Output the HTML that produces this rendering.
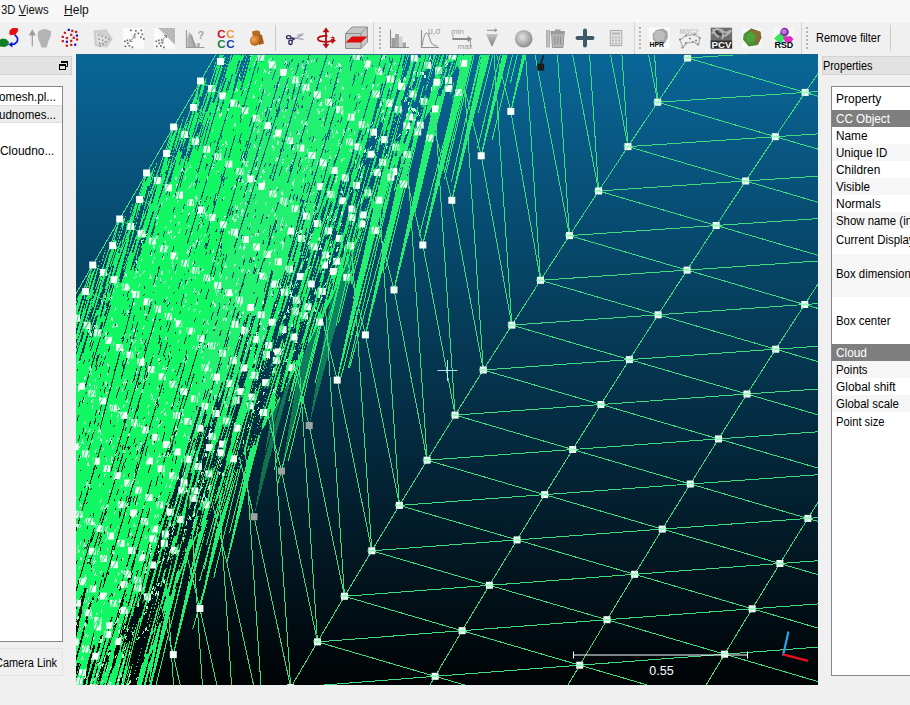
<!DOCTYPE html>
<html><head><meta charset="utf-8"><title>CloudCompare</title><style>
html,body{margin:0;padding:0;}
body{width:910px;height:705px;overflow:hidden;background:#f0f0f0;position:relative;font-family:"Liberation Sans",sans-serif;font-size:12px;color:#000;}
.abs{position:absolute;}
#menubar{left:0;top:0;width:910px;height:21px;background:#f7f7f7;border-bottom:1px solid #fbfbfb;}
#menubar span{position:absolute;top:3px;font-size:12.4px;white-space:nowrap;color:#111;}
#toolbar{left:0;top:22px;width:910px;height:32px;background:#f0f0f0;}
.sep{position:absolute;top:25px;width:1px;height:26px;background:#c9c9c9;}
.grip{position:absolute;top:27px;width:2px;height:22px;background-image:linear-gradient(#b4b4b4 50%,transparent 50%);background-size:2px 4px;}
#view{position:absolute;left:76px;top:54px;}
.dtitle{position:absolute;top:56px;height:18px;background:#e2e2e2;border:1px solid #d2d2d2;box-sizing:border-box;}
.box{position:absolute;background:#fff;border:1px solid #828790;box-sizing:border-box;}
.t{position:absolute;white-space:nowrap;line-height:14px;}
.row{position:absolute;left:1px;right:0;}
</style></head><body>
<div id="menubar" class="abs"></div><div class="t" id="t_m1" style="left:0.8px;top:2.7px;transform:scaleX(0.9426);transform-origin:0 0;color:#111;font-size:12px;">3D <u>V</u>iews</div><div class="t" id="t_m2" style="left:63.6px;top:2.7px;transform:scaleX(1.0048);transform-origin:0 0;color:#111;font-size:12px;"><u>H</u>elp</div>
<div id="toolbar" class="abs"></div>
<div class="sep" style="left:275px"></div>
<div class="sep" style="left:890px"></div>
<div class="sep" style="left:373px;top:22px;height:32px;background:#d4d4d4"></div>
<div class="sep" style="left:634px;top:22px;height:32px;background:#d4d4d4"></div>
<div class="sep" style="left:801px;top:22px;height:32px;background:#d4d4d4"></div>
<div class="grip" style="left:379px"></div>
<div class="grip" style="left:639px"></div>
<div class="grip" style="left:806px"></div>
<svg class="abs" style="left:0;top:22px" width="910" height="32" viewBox="0 22 910 32" font-family="Liberation Sans, sans-serif">
<defs><radialGradient id="sph" cx="0.42" cy="0.4" r="0.6"><stop offset="0" stop-color="#e6e6e6"/><stop offset="0.6" stop-color="#b0b0b0"/><stop offset="1" stop-color="#8e8e8e"/></radialGradient><radialGradient id="org" cx="0.4" cy="0.35" r="0.7"><stop offset="0" stop-color="#f0a860"/><stop offset="0.7" stop-color="#c8701c"/><stop offset="1" stop-color="#8a4a10"/></radialGradient><linearGradient id="fun" x1="0" y1="0" x2="0" y2="1"><stop offset="0" stop-color="#c4c4c4"/><stop offset="1" stop-color="#7c7c7c"/></linearGradient><linearGradient id="bin" x1="0" y1="0" x2="1" y2="0"><stop offset="0" stop-color="#8c8c8c"/><stop offset="0.5" stop-color="#d0d0d0"/><stop offset="1" stop-color="#9a9a9a"/></linearGradient></defs>
<path d="M9.5 30.5l3-2.6 5 .2 .8 2.4-2.6 4-5 .8-1.4-1.6z" fill="#e80c0c"/>
<path d="M-1 40.5l3-2 4 .4 3 3.2-.6 3-3.6 1.9-5-.6z" fill="#108020"/>
<path d="M14.5 35c3.5 1.6 4 5 2 7.4-1.4 1.7-3.8 2.4-6 2.3" fill="none" stroke="#1018e0" stroke-width="1.7"/>
<path d="M8.2 44.6l4.2-2.8v5.6z" fill="#1018e0"/>
<path d="M32.3 46.5V31.5M29.8 35l2.5-4.6 2.5 4.6z" stroke="#9c9c9c" stroke-width="1.2" fill="#9c9c9c"/>
<path d="M38 31.5c2-1 3.5-2.6 6-2.6 2.6 0 4.5 1.2 7 2.2 .6 4-1 7-2.6 10-.6 2.6-1.3 5-2 6.5h-5c-.8-2-1-4-2.2-6-1.4-3-2-6-1.2-10.1z" fill="#b4b4b4"/>
<rect x="67.7" y="28.8" width="2.2" height="2.2" fill="#1414c8"/>
<rect x="71.2" y="29.7" width="2.2" height="2.2" fill="#d01414"/>
<rect x="75" y="30.8" width="2.2" height="2.2" fill="#d01414"/>
<rect x="63.8" y="31.7" width="2.2" height="2.2" fill="#d01414"/>
<rect x="70.1" y="33.7" width="2.2" height="2.2" fill="#d01414"/>
<rect x="75.8" y="34.5" width="2.2" height="2.2" fill="#1414c8"/>
<rect x="61.7" y="35.8" width="2.2" height="2.2" fill="#d01414"/>
<rect x="65.8" y="36.9" width="2.2" height="2.2" fill="#d01414"/>
<rect x="72.7" y="36.7" width="2.2" height="2.2" fill="#d01414"/>
<rect x="76" y="38.4" width="2.2" height="2.2" fill="#d01414"/>
<rect x="61.7" y="40" width="2.2" height="2.2" fill="#d01414"/>
<rect x="65.8" y="40.7" width="2.2" height="2.2" fill="#1414c8"/>
<rect x="70.1" y="39.8" width="2.2" height="2.2" fill="#d01414"/>
<rect x="65.8" y="44.6" width="2.2" height="2.2" fill="#d01414"/>
<rect x="70.1" y="43.7" width="2.2" height="2.2" fill="#d01414"/>
<rect x="74.1" y="43.6" width="2.2" height="2.2" fill="#1414c8"/>
<path d="M93.5 30.5l13-1.2 6.3 9.5-5.5 8.7-12.5-1.2z" fill="#cfcfcf"/><path d="M95 31.5l16.5 7.5-15 7z" fill="#dedede" stroke="#bdbdbd" stroke-width=".6"/>
<rect x="98" y="34.5" width="1.3" height="1.3" fill="#7a7a7a"/>
<rect x="101.5" y="35.5" width="1.3" height="1.3" fill="#7a7a7a"/>
<rect x="105" y="37" width="1.3" height="1.3" fill="#7a7a7a"/>
<rect x="108" y="38.5" width="1.3" height="1.3" fill="#7a7a7a"/>
<rect x="98.5" y="38.5" width="1.3" height="1.3" fill="#7a7a7a"/>
<rect x="102" y="39.5" width="1.3" height="1.3" fill="#7a7a7a"/>
<rect x="105" y="41" width="1.3" height="1.3" fill="#7a7a7a"/>
<rect x="99" y="42.5" width="1.3" height="1.3" fill="#7a7a7a"/>
<rect x="102.5" y="43.5" width="1.3" height="1.3" fill="#7a7a7a"/>
<rect x="99.5" y="45.5" width="1.3" height="1.3" fill="#7a7a7a"/>
<rect x="123" y="28" width="21" height="20.5" fill="#fbfbfb"/>
<rect x="130" y="29.5" width="1.7" height="1.7" fill="#6e6e6e"/>
<rect x="135" y="30" width="1.7" height="1.7" fill="#6e6e6e"/>
<rect x="140.5" y="29.5" width="1.7" height="1.7" fill="#6e6e6e"/>
<rect x="137.5" y="32.5" width="1.7" height="1.7" fill="#6e6e6e"/>
<rect x="141.5" y="33.5" width="1.7" height="1.7" fill="#6e6e6e"/>
<rect x="134" y="33.5" width="1.7" height="1.7" fill="#6e6e6e"/>
<rect x="140" y="36.5" width="1.7" height="1.7" fill="#6e6e6e"/>
<rect x="143" y="38" width="1.7" height="1.7" fill="#6e6e6e"/>
<rect x="124" y="40.5" width="1.7" height="1.7" fill="#6e6e6e"/>
<rect x="127" y="42.5" width="1.7" height="1.7" fill="#6e6e6e"/>
<rect x="124.5" y="45.5" width="1.7" height="1.7" fill="#6e6e6e"/>
<rect x="128.5" y="45" width="1.7" height="1.7" fill="#6e6e6e"/>
<rect x="131.5" y="46.5" width="1.7" height="1.7" fill="#6e6e6e"/>
<rect x="126.5" y="39.5" width="1.7" height="1.7" fill="#6e6e6e"/>
<path d="M130 41.5l5-5.5M130 41.5v-2.5M130 41.5h2.5M135 36v2.5M135 36h-2.5" stroke="#8a8a8a" stroke-width="1" fill="none"/>
<rect x="154" y="28" width="21" height="20.5" fill="#fbfbfb"/><path d="M158 28h17v17z" fill="#bdbdbd"/><path d="M162 28l13 13M166 28l9 9M170 28l5 5" stroke="#a2a2a2" stroke-width=".7"/>
<rect x="155.5" y="40.5" width="1.7" height="1.7" fill="#6e6e6e"/>
<rect x="158.5" y="42.5" width="1.7" height="1.7" fill="#6e6e6e"/>
<rect x="156" y="45.5" width="1.7" height="1.7" fill="#6e6e6e"/>
<rect x="160" y="45" width="1.7" height="1.7" fill="#6e6e6e"/>
<rect x="163" y="46.5" width="1.7" height="1.7" fill="#6e6e6e"/>
<rect x="158" y="39.5" width="1.7" height="1.7" fill="#6e6e6e"/>
<rect x="161.5" y="42" width="1.7" height="1.7" fill="#6e6e6e"/>
<path d="M161.5 41l5-5.5M161.5 41v-2.5M161.5 41h2.5M166.5 35.5v2.5M166.5 35.5h-2.5" stroke="#8a8a8a" stroke-width="1" fill="none"/>
<path d="M186.5 30v17.5h18" stroke="#9a9a9a" stroke-width="1.2" fill="none"/><path d="M187.5 47v-9l2-6 2 3 2 5 2 3.5 1.5 3.5z" fill="#b0b0b0"/><path d="M194.5 47l-3-12" stroke="#8c8c8c" stroke-width="1"/><rect x="197" y="43" width="3" height="4" fill="#b4b4b4"/>
<text x="197.5" y="39" font-size="11" font-weight="bold" fill="#a4a4a4">?</text>
<text x="217.3" y="37.6" font-size="11.5" font-weight="bold" fill="#cc1030">C</text><text x="226.3" y="37.6" font-size="11.5" font-weight="bold" fill="#e8a040">C</text>
<text x="217.3" y="47.6" font-size="11.5" font-weight="bold" fill="#188048">C</text><text x="226.3" y="47.6" font-size="11.5" font-weight="bold" fill="#2040b0">C</text>
<path d="M252 31.5l5-1.3 3 1.2 .5 5-7.5 1z" fill="#b86820"/><path d="M258.5 34l3.5 1 2 8.5-5 1.5z" fill="#a85c18"/><circle cx="254.8" cy="40.8" r="5" fill="url(#org)"/>
<path d="M291.5 40.5l11.5-6M292 37.5l11.5 2" stroke="#8e8ea0" stroke-width="1.1"/><path d="M297 35.6l6.5-2.1M297.5 38.3l5.5 1" stroke="#b8b8c4" stroke-width="1.6"/>
<ellipse cx="288.7" cy="37.3" rx="2.2" ry="1.6" fill="none" stroke="#2c2860" stroke-width="1.3"/><ellipse cx="290.5" cy="42.3" rx="1.7" ry="2.2" fill="none" stroke="#2c2860" stroke-width="1.3"/><path d="M290.5 37.8l4 1.2M291.5 40.5l3-1.5" stroke="#2c2860" stroke-width="1.3"/>
<g stroke="#b40c10" fill="#b40c10"><path d="M326 30.5v15" stroke-width="1.8"/><path d="M323 32l3-4.2 3 4.2zM323 44l3 4.2 3-4.2z" stroke-width=".5"/><ellipse cx="325.8" cy="38.8" rx="8" ry="3" fill="none" stroke-width="1.7"/><path d="M331 39l4.5 1.5-3.5 3z" stroke-width=".5"/></g>
<rect x="327.5" y="34.6" width="5" height="2.5" fill="#f0f0f0"/>
<path d="M345.5 33.5l6.5-6.5h15.5v15l-6.5 6.5h-15.5z" fill="#c6c6c6" stroke="#8e8e8e" stroke-width="1"/><path d="M345.5 33.5h15.5v15M361 33.5l6.5-6.5" fill="none" stroke="#8e8e8e" stroke-width="1"/>
<path d="M345.5 42.5l6.5-6h15.5l-6.5 6z" fill="#dc0c10"/>
<path d="M390.5 29.5v18h18.5" stroke="#8a8a8a" stroke-width="1.1" fill="none"/><rect x="391.5" y="38" width="3.5" height="9" fill="#9c9c9c"/><rect x="395" y="34" width="4" height="13" fill="#a8a8a8"/><rect x="399" y="36.5" width="3.5" height="10.5" fill="#d2d2d2"/><rect x="402.5" y="42.5" width="3.5" height="4.5" fill="#a4a4a4"/>
<path d="M421.5 30v17.5h17.5" stroke="#909090" stroke-width="1.1" fill="none"/><path d="M422 46c1.5-6 2-13 4.5-13s3 7 5 10c1.5 2.3 4 3 6 3.3" stroke="#9a9a9a" stroke-width="1.1" fill="none"/>
<text x="428" y="34" font-size="8.5" fill="#9a9a9a">μ,σ</text>
<text x="451" y="34" font-size="8" fill="#9a9a9a">min</text><text x="457.5" y="48.5" font-size="8" fill="#9a9a9a">max</text>
<path d="M452.5 39h17" stroke="#8c8c8c" stroke-width="2"/><path d="M468 36.5l3.5 2.5-3.5 2.5zM453 33.5v6.5M470.5 38.5v8" stroke="#909090" stroke-width=".8" fill="#8c8c8c"/>
<path d="M487 30.3h9.5M494.5 28.8l2.5 1.5-2.5 1.5" stroke="#8c8c8c" stroke-width="1" fill="none"/><path d="M485.8 34h12.4l-6.2 12.8z" fill="url(#fun)"/>
<circle cx="523.7" cy="38.8" r="8.8" fill="url(#sph)"/>
<rect x="546.3" y="30" width="3.6" height="17.5" fill="url(#bin)"/><path d="M551.5 33.5h12.5l-1 14h-10.5z" fill="#b4b4b4" stroke="#8a8a8a" stroke-width=".8"/><rect x="550.5" y="31" width="14.5" height="2.5" fill="#9c9c9c"/><rect x="555" y="29.5" width="5.5" height="1.8" fill="#9c9c9c"/><path d="M555 36.5v8M557.8 36.5v8M560.6 36.5v8" stroke="#8c8c8c" stroke-width="1"/>
<path d="M585 30.5v15M577.5 38h15" stroke="#3e5968" stroke-width="4" stroke-linecap="round"/>
<rect x="610.3" y="30.5" width="11.5" height="15.2" fill="#e2e2e2" stroke="#a8a8a8" stroke-width="1"/><rect x="612" y="32.3" width="8" height="2.6" fill="#bcbcbc"/>
<rect x="612" y="36.6" width="1.8" height="1.8" fill="#b4b4b4"/>
<rect x="615.1" y="36.6" width="1.8" height="1.8" fill="#b4b4b4"/>
<rect x="618.2" y="36.6" width="1.8" height="1.8" fill="#b4b4b4"/>
<rect x="612" y="39.6" width="1.8" height="1.8" fill="#b4b4b4"/>
<rect x="615.1" y="39.6" width="1.8" height="1.8" fill="#b4b4b4"/>
<rect x="618.2" y="39.6" width="1.8" height="1.8" fill="#b4b4b4"/>
<rect x="612" y="42.6" width="1.8" height="1.8" fill="#b4b4b4"/>
<rect x="615.1" y="42.6" width="1.8" height="1.8" fill="#b4b4b4"/>
<rect x="618.2" y="42.6" width="1.8" height="1.8" fill="#b4b4b4"/>
<rect x="648.8" y="27.3" width="21" height="21.2" fill="#fafafa"/><path d="M652.5 34l3.5-4 7-1.5 4.5 3 .5 6-3 5.5-9 .5-3-4z" fill="#a6a6a6"/><path d="M655 31.5l6-1 4 3-1 6-7 2-3-4z" fill="#bebebe"/>
<text x="649.5" y="47.3" font-size="7.8" font-weight="bold" fill="#000" textLength="14.5" lengthAdjust="spacingAndGlyphs">HPR</text>
<text x="679.5" y="33.5" font-size="7.5" font-weight="bold" fill="#c2c2c2" textLength="19" lengthAdjust="spacingAndGlyphs">M3C2</text>
<path d="M680 40l6-4.5 9-1 5 3.5-1.5 6.5-5-2.5-7 1-3.5 4.5z" fill="none" stroke="#b8b8b8" stroke-width="1.4"/>
<circle cx="680" cy="39.5" r="1.1" fill="#8c8c8c"/>
<circle cx="686" cy="35.5" r="1.1" fill="#8c8c8c"/>
<circle cx="694.5" cy="34.5" r="1.1" fill="#8c8c8c"/>
<circle cx="699.5" cy="38" r="1.1" fill="#8c8c8c"/>
<circle cx="698" cy="44.5" r="1.1" fill="#8c8c8c"/>
<circle cx="693" cy="42" r="1.1" fill="#8c8c8c"/>
<circle cx="686" cy="43" r="1.1" fill="#8c8c8c"/>
<circle cx="682.5" cy="47.5" r="1.1" fill="#8c8c8c"/>
<circle cx="690" cy="38.5" r="1.1" fill="#8c8c8c"/>
<circle cx="696" cy="40.5" r="1.1" fill="#8c8c8c"/>
<rect x="710.7" y="27.7" width="21.4" height="20.8" fill="#6c6c6c"/><path d="M712 34c2-5 5-6 8-4s4 6 2 9M721 29c3 4 6 5 10 1M713 29c1 4 3 7 6 8M724 36c3-1 6-3 7-6" stroke="#b4b4b4" stroke-width="2" fill="none"/><path d="M716 31c2 3 4 4 6 3" stroke="#3c3c3c" stroke-width="1.5" fill="none"/><rect x="710.7" y="40.5" width="21.4" height="8" fill="#2e2e2e"/>
<text x="711.6" y="47.8" font-size="9" font-weight="bold" fill="#fff" textLength="20" lengthAdjust="spacingAndGlyphs">PCV</text>
<rect x="742" y="27.7" width="20.2" height="20.2" fill="#f6f6f6"/>
<path d="M751 28.4l9.4 3.4 1 5.8-3.6 7.3-8.9 1.6-5.8-6.8 .6-5.8z" fill="#4f8c34"/>
<path d="M751 28.4l9.4 3.4 1 5.8-3.6 7.3-3-3.4 1.2-6.6-5.6-3.5z" fill="#8a6c32"/>
<path d="M750.4 31.4l5.6 3.5-1.2 6.6-6.4 .8-3.2-5.6z" fill="#4aa43a"/>
<rect x="773.4" y="27.7" width="20" height="20.8" fill="#f8f8f8"/><path d="M774 38.5l7.5-7 6 5.5-8 6.5z" fill="#38e858"/><path d="M783 37l7.5-1 3 3-2.5 3.5-6-.5z" fill="#e428c8"/><circle cx="784.6" cy="32" r="4.3" fill="#8a2cb0"/><circle cx="784" cy="31.4" r="2.5" fill="#c078dc"/><path d="M779 41l5 .5-1 3h-4z" fill="#30c8d8"/>
<text x="774.5" y="47.6" font-size="9" font-weight="bold" fill="#000" textLength="18.8" lengthAdjust="spacingAndGlyphs">RSD</text>
</svg>
<div class="t" id="t_rf" style="left:815.8px;top:31.4px;transform:scaleX(0.9139);transform-origin:0 0;">Remove filter</div>
<div class="dtitle" style="left:-4px;width:76px;height:19px"></div>
<svg class="abs" style="left:58px;top:60px" width="11" height="11" viewBox="0 0 11 11"><path d="M3.5 1.5h6v5h-2" fill="none" stroke="#000" stroke-width="1"/><path d="M3 2h7" stroke="#000" stroke-width="2"/><rect x="1.5" y="4.5" width="6" height="5" fill="#e2e2e2" stroke="#000"/><path d="M1 5h7" stroke="#000" stroke-width="2"/></svg>
<div class="box" style="left:-2px;top:86px;width:65px;height:556px"></div>
<div class="abs" style="left:-1px;top:105px;width:63px;height:18px;background:#ececec;border-top:1px solid #dedede;border-bottom:1px solid #dedede;box-sizing:border-box"></div>
<div class="t" id="t_l1" style="left:-1px;top:90.1px;transform:scaleX(0.9710);transform-origin:0 0;">omesh.pl...</div>
<div class="t" id="t_l2" style="left:-1px;top:108px;transform:scaleX(0.9600);transform-origin:0 0;">udnomes...</div>
<div class="t" id="t_l3" style="left:-0.4px;top:144.3px;transform:scaleX(0.9943);transform-origin:0 0;">Cloudno...</div>
<div class="abs" style="left:-2px;top:648px;width:65px;height:28px;border:1px solid #e3e3e3;box-sizing:border-box;background:#f0f0f0"></div>
<div class="t" id="t_cam" style="left:-5.4px;top:655.6px;transform:scaleX(0.9127);transform-origin:0 0;">Camera Link</div>
<svg id="view" width="742" height="631" viewBox="76 54 742 631" shape-rendering="auto">
<defs><linearGradient id="bg" gradientUnits="userSpaceOnUse" x1="0" y1="55" x2="0" y2="685"><stop offset="0" stop-color="#0a6698"/><stop offset="1" stop-color="#000305"/></linearGradient></defs>
<rect x="76" y="54" width="742" height="631" fill="url(#bg)"/>
<g shape-rendering="crispEdges">
<polygon fill="#12f764" points="228.5,40 222.7,50 216.8,60 210.9,70 205.1,80 199.2,90 193.4,100 187.5,110 181.7,120 175.8,130 169.9,140 164.1,150 158.2,160 152.4,170 146.5,180 140.6,190 134.8,200 128.9,210 123.1,220 117.2,230 111.3,240 105.5,250 99.6,260 93.8,270 87.9,280 82.1,290 76.2,300 70.3,310 70,320 70,330 70,340 70,350 70,360 70,370 70,380 70,390 70,400 70,410 70,420 70,430 70,440 70,450 70,460 70,470 70,480 70,490 70,500 70,510 70,520 70,530 70,540 70,550 70,560 70,570 70,580 70,590 70,600 70,610 70,620 70,630 70,640 70,650 70,660 70,670 70,680 70,690 70,700 146.5,700 148,690 150,680 152,670 154,660 156,650 158,640 160,630 162,620 166,610 170,600 174,590 178,580 182,570 186,560 190,550 194.8,540 200.3,530 205.8,520 211.4,510 216.9,500 222.5,490 228,480 234.8,470 241.5,460 248.3,450 255.1,440 261.8,430 268.6,420 274.5,410 279.6,400 284.7,390 289.8,380 294.9,370 300,360 305.2,350 310.3,340 315.5,330 320.7,320 325.8,310 331,300 335.5,290 339.9,280 344.4,270 348.8,260 353.3,250 357.8,240 362.3,230 367,220 371.7,210 376.3,200 381,190 385.7,180 391.3,170 397.8,160 404.4,150 410.9,140 417.5,130 424,120 430.2,110 436.3,100 442.5,90 448.6,80 454.8,70 460.9,60 467.2,50 473.6,40"/>
<g stroke="#22f070" stroke-width="1" fill="none">
<line x1="165" y1="578" x2="137.7" y2="698"/>
<line x1="173.7" y1="557" x2="141.8" y2="698"/>
<line x1="149.6" y1="617" x2="145.1" y2="635"/>
<line x1="172.2" y1="560" x2="139.1" y2="698"/>
<line x1="181.6" y1="539" x2="142.4" y2="698"/>
<line x1="150.6" y1="614" x2="145.7" y2="632"/>
<line x1="198.3" y1="509" x2="174.8" y2="608"/>
<line x1="168.6" y1="569" x2="133.4" y2="698"/>
<line x1="200.1" y1="506" x2="152.8" y2="698"/>
<line x1="183.4" y1="536" x2="139.3" y2="698"/>
<line x1="194.9" y1="515" x2="146.3" y2="698"/>
<line x1="183.7" y1="536" x2="138.4" y2="698"/>
<line x1="213.6" y1="482" x2="200.9" y2="533"/>
<line x1="230.2" y1="458" x2="223.4" y2="488"/>
<line x1="230.2" y1="458" x2="204.3" y2="569"/>
<line x1="234.1" y1="452" x2="227.8" y2="479"/>
<line x1="207.9" y1="491" x2="194.8" y2="539"/>
<line x1="213.5" y1="482" x2="201.2" y2="527"/>
<line x1="234.1" y1="452" x2="226.7" y2="482"/>
<line x1="213.6" y1="482" x2="200" y2="530"/>
<line x1="243.2" y1="437" x2="224.3" y2="515"/>
<line x1="243.4" y1="437" x2="227" y2="503"/>
<line x1="249.9" y1="428" x2="213.7" y2="578"/>
<line x1="247.2" y1="431" x2="239.6" y2="461"/>
<line x1="240" y1="443" x2="231.9" y2="473"/>
<line x1="232" y1="455" x2="206.4" y2="545"/>
<line x1="237.6" y1="446" x2="199.6" y2="581"/>
<line x1="259.7" y1="413" x2="229.6" y2="533"/>
<line x1="276.1" y1="380" x2="266.3" y2="422"/>
<line x1="273.1" y1="386" x2="262.9" y2="428"/>
<line x1="249.6" y1="428" x2="192.8" y2="629"/>
<line x1="281.9" y1="368" x2="270.3" y2="416"/>
<line x1="282" y1="368" x2="270.1" y2="416"/>
<line x1="274.5" y1="383" x2="262.6" y2="428"/>
<line x1="285.6" y1="362" x2="272.8" y2="413"/>
<line x1="297.8" y1="338" x2="286.2" y2="386"/>
<line x1="308.2" y1="317" x2="288.9" y2="401"/>
<line x1="311.8" y1="311" x2="301.4" y2="356"/>
<line x1="312.1" y1="311" x2="301.4" y2="356"/>
<line x1="311.8" y1="311" x2="291.7" y2="392"/>
<line x1="316" y1="302" x2="274.3" y2="470"/>
<line x1="332.2" y1="266" x2="320" y2="320"/>
<line x1="319.2" y1="296" x2="305.1" y2="350"/>
<line x1="326.8" y1="278" x2="311.3" y2="338"/>
<line x1="338.1" y1="254" x2="288.4" y2="461"/>
<line x1="336.4" y1="257" x2="298" y2="407"/>
<line x1="342.1" y1="245" x2="325.3" y2="311"/>
<line x1="343" y1="242" x2="277.5" y2="485"/>
<line x1="356.8" y1="212" x2="315.1" y2="383"/>
<line x1="363.9" y1="197" x2="350.1" y2="257"/>
<line x1="367.2" y1="191" x2="336" y2="326"/>
<line x1="359.9" y1="206" x2="328.7" y2="320"/>
<line x1="376.6" y1="173" x2="364.8" y2="224"/>
<line x1="376.1" y1="173" x2="338.6" y2="323"/>
<line x1="377.7" y1="170" x2="363.2" y2="227"/>
<line x1="384.1" y1="161" x2="373.2" y2="206"/>
<line x1="381.5" y1="164" x2="350.2" y2="278"/>
<line x1="385.2" y1="158" x2="350.9" y2="284"/>
<line x1="391.5" y1="149" x2="353.2" y2="299"/>
<line x1="399.7" y1="137" x2="382.7" y2="212"/>
<line x1="393.8" y1="146" x2="381.9" y2="188"/>
<line x1="401.7" y1="134" x2="394.4" y2="164"/>
<line x1="405.3" y1="128" x2="348.3" y2="368"/>
<line x1="405.2" y1="128" x2="341.1" y2="377"/>
<line x1="407.8" y1="125" x2="350.9" y2="335"/>
<line x1="412.9" y1="116" x2="394.4" y2="191"/>
<line x1="416.8" y1="110" x2="408.7" y2="143"/>
<line x1="422.1" y1="101" x2="379.6" y2="275"/>
<line x1="423.5" y1="98" x2="349.5" y2="368"/>
<line x1="429.2" y1="89" x2="385.6" y2="269"/>
<line x1="430.1" y1="89" x2="420.6" y2="125"/>
<line x1="435" y1="80" x2="426.1" y2="116"/>
<line x1="438.6" y1="74" x2="430.1" y2="110"/>
<line x1="440.8" y1="71" x2="433.3" y2="104"/>
<line x1="442.6" y1="68" x2="433.3" y2="104"/>
<line x1="447.7" y1="59" x2="437.5" y2="98"/>
<line x1="452" y1="53" x2="444.2" y2="86"/>
<line x1="454.8" y1="50" x2="415" y2="212"/>
<line x1="457.2" y1="50" x2="451.6" y2="74"/>
<line x1="459.9" y1="50" x2="455" y2="68"/>
<line x1="462.7" y1="50" x2="458.6" y2="68"/>
<line x1="468.2" y1="50" x2="419.1" y2="236"/>
<line x1="473.5" y1="50" x2="445" y2="170"/>
<line x1="475.3" y1="50" x2="444.6" y2="179"/>
<line x1="481.5" y1="50" x2="451.4" y2="182"/>
<line x1="483.2" y1="50" x2="469.5" y2="104"/>
<line x1="488.4" y1="50" x2="480.1" y2="83"/>
<line x1="494" y1="50" x2="478.2" y2="113"/>
<line x1="501.4" y1="50" x2="477.3" y2="149"/>
<line x1="513.6" y1="50" x2="492.2" y2="140"/>
<line x1="518.4" y1="50" x2="510.4" y2="83"/>
</g>
<g stroke="#22f070" stroke-width="1" fill="#22f070">
<polygon points="510.8,111.4 525,45 527.9,45"/>
<polygon points="481.2,155.8 504.9,45 509.7,45"/>
<polygon points="451.8,200.3 485.1,45 491.9,45"/>
<polygon points="422.8,245 465.6,45 474.4,45"/>
<polygon points="394,289.9 446.4,45 457.2,45"/>
<polygon points="365.4,334.9 427.5,45 440.2,45"/>
<polygon points="337.2,380.1 408.9,45 423.7,45"/>
<polygon points="309.2,425.5 373.9,45 411.9,45" opacity="0.38" stroke="none"/>
<polygon points="281.5,471 353.9,45 396.5,45" opacity="0.38" stroke="none"/>
<polygon points="254,516.7 334.2,45 381.4,45" opacity="0.38" stroke="none"/>
<polygon points="226.9,562.5 337.6,45 360.4,45"/>
<polygon points="199.9,608.5 320.5,45 345.3,45"/>
<polygon points="173.3,654.6 303.8,45 330.6,45"/>
<polygon points="146.9,701 287.3,45 316.2,45"/>
<polygon points="120.8,747.4 271.1,45 302.1,45"/>
</g>
<path stroke="url(#bg)" stroke-width="1" fill="none" d="M302.9 106.4l-0.4 1.5M146.2 425.2l-1 4M165 355.1l-0.5 2M172.2 468.7l-1 4M98.8 476l-0.6 2M155.1 449.8l-0.6 2M213.4 312l-0.9 3M247.2 140.9l-1.8 6M209.6 234l-1 4M252.5 234.5l-0.4 1.5M163.5 464.6l-0.5 1.5M326 137.3l-0.9 3M263.2 371.1l-12 38.7M342 182.8l-6.4 21.7M173.1 474.2l-0.7 3M101.1 614.4l-3.3 12M134.4 674.9l-2.7 10M181.6 278.9l-0.5 1.5M241.9 52.2l-1.1 4.3M149.5 203.7l-4.3 15.2M159.2 266.4l-1.2 4M271.5 116.9l-0.7 3M248 200.6l-0.6 2M165.7 300.3l-1 3M209.4 101.3l-1.1 4.5M219.1 258.8l-0.6 2M152.8 617.6l-20.9 83.5M260.4 222.7l-0.5 1.5M222 290.8l-0.6 2M269.6 237.7l-0.5 1.5M210.8 197.3l-0.4 1.5M250.5 421.6l-1.5 4.7M87.8 561.5l-0.4 1.5M110.9 420.5l-0.8 3M153.7 589l-12.8 45.4M162.2 468.6l-0.9 3M94.6 531.7l-3.2 10M298.3 289.6l-1 4M273.9 291.2l-2 6M173.5 455.2l-1.5 6M224.5 292.7l-0.4 1.5M344.9 247.7l-2.9 9.5M215.9 267l-2.4 10M176.5 264.1l-1.6 6M320.2 98l-0.4 1.5M116.6 467.7l-0.4 1.5M158.1 172.9l-1.3 4.9M136.1 594.1l-10.2 33.1M118.7 222.1l-13.1 42.6M166.8 505.7l-3.6 12.3M113.8 284.7l-8.3 31.5M146.4 368.8l-2.4 10M117.2 599.5l-0.5 1.5M149.5 383l-0.6 2M156 274.8l-2.5 10M381.7 45.7l-0.5 1.5M119.1 204.9l-12.4 45.9M134.5 496l-1.6 6M168.9 450.5l-1.1 4M104 483.3l-0.4 1.5M242 440.9l-1.4 4.9M195.6 317.9l-1.1 4M451.9 37.3l-4.4 15.6M254.3 259l-0.8 3M86.9 382.4l-0.5 1.5M131.4 636.4l-1.1 4M217.3 445.1l-4.7 15.1M384.9 65.1l-1.9 6M118.5 457l-1.3 4M186.1 454.9l-16.8 52.3M292.9 228.3l-2.8 10M329.8 159.6l-0.5 1.5M164.1 251.8l-1.7 6M232.5 206.4l-3.1 10M96.8 409.9l-1.5 6M210.8 249.6l-1 4M139.2 592.1l-23.9 93.1M219.1 146.4l-2 6M79.9 455.4l-1.5 6M298.9 314.1l-18.6 65.2M257.2 126l-0.6 2M189.9 212.7l-3.1 10M257.7 112.3l-0.5 2M331 189.8l-2.2 7.3M170.3 344.6l-0.6 2M327.1 234.8l-6.6 23.1M126.5 630.3l-1 3.6M210.5 401.4l-0.8 3M357.5 55.1l-0.9 3M117 678.9l-1.9 7.4M208.6 388.8l-3.2 10M221.4 174.3l-0.8 3M303.1 96.2l-1 4M151.7 249.7l-1.7 6M331.5 200.8l-27.5 85.9M314.2 157.3l-2.5 10M128.6 298.5l-1 3M222.1 135.1l-1.2 4M71.3 414.7l-1 4M285.9 235.1l-2 6M132.6 458.9l-0.4 1.5M306.4 154.7l-1.1 4M135.2 374.7l-1.5 6M190.7 449.8l-0.5 2M354.1 60l-0.5 1.5M234 32.4l-19 61M342 117.1l-1.5 6M87.2 502.3l-0.5 1.5M445.8 66l-12 43.4M254.3 292.3l-0.5 1.5M136.3 444.1l-0.9 3M146.1 612.7l-1.5 4.7M163.5 391.6l-0.5 1.5M185 167.6l-5.2 20M241.4 133.4l-2.8 10M257.5 160.9l-1.9 6M94.4 429.6l-2.9 10M252 171.9l-0.6 2M138 364.5l-2.7 10M205.7 243.4l-1.2 4M274.8 242.3l-0.4 1.5M114.3 425.2l-0.5 2M223.5 441.9l-2.9 8.8M338.6 102.9l-0.5 1.5M224 61.9l-1.4 4.8M163.6 586.1l-4.9 19M302 140.9l-0.5 2M239.6 26l-9.8 40.4M182.5 117.4l-3 10.3M326.3 192.8l-0.9 3.5M189.1 419.8l-0.5 2M144.6 622.6l-4.3 17.3M77.1 511.3l-0.4 1.5M401.3 134.9l-5 16.7M219.4 447.6l-4.6 15.7M196.6 266.4l-0.9 3M215.2 139.9l-0.7 3M131.4 594.6l-2.8 10M211.2 113.3l-8.4 32.5M202.9 331.3l-1.2 4M292.4 160.9l-2.5 10M71.9 268.1l-32.8 100M187.4 129.7l-2.4 9.3M263.4 119.6l-0.6 2M292.9 59.2l-0.5 1.5M234.9 467.1l-1.6 5.5M280.1 106.8l-2.9 10M154.4 563.5l-35.8 109M237.1 210.2l-1 3M130.5 452.5l-0.8 3M301.8 253.1l-10.9 33.3M184.6 479.2l-28.1 99.5M174.7 206.7l-1.5 6M413.8 67.5l-25.3 91.4M314.9 77.5l-0.5 2M263.9 240l-1.2 4M377.2 151.9l-1.3 4.3M82.4 383.5l-0.4 1.5M283.5 149.5l-0.4 1.5M224.2 183.6l-0.6 2M170 108.8l-18.6 71M144.3 417.1l-0.5 2M323.3 258.7l-29.5 97.1M205.9 390.4l-3 10M383 110l-24 89.2M390.9 41.8l-1.1 4M341.5 67.9l-1 4M177.2 455.5l-1.1 4M180 349.3l-0.6 2M222.9 266.7l-1.6 6M151.1 194.1l-4.3 15.8M132.2 339.1l-1.5 6M434.3 25.3l-24.5 87.9M164.3 242.5l-1.8 6M166.3 345.9l-3.3 10M152.8 617.9l-1.6 5.4M160.2 318.8l-0.6 2M124.1 598.9l-14.9 47.1M124.5 461.6l-3.1 10M439.6 26.1l-15.8 59.3M316.5 292.8l-21.4 68M83.4 399.7l-0.8 3M296.3 205.4l-0.6 2M73.6 447.2l-1 3M207 163.5l-1.6 6M287.5 205.2l-0.6 2M158.9 403.8l-1.2 4M128.8 581.9l-0.5 2M156.1 301.1l-0.9 3M203 125.2l-5.3 21.5M94 513l-2.5 10M241.7 176.5l-2 6M309.8 183.3l-3.3 10M103.7 382.5l-1.2 4M243.4 150.7l-3 10M290.4 141.6l-0.5 2M113.4 545.1l-2.7 10M143.9 551.1l-2.7 10M84.1 428l-1.5 6M220.6 106.6l-1.1 3.8M270.3 163.4l-0.8 3M189.2 532.4l-6.5 19.9M90.5 563.4l-0.5 2M278.1 189.3l-0.6 2M118.7 470.4l-2.5 10M74.9 501.9l-2.8 10M335.5 217l-2.7 8.2M131.4 514.1l-2.9 10M318.1 100.1l-0.5 2M308.4 181.8l-0.7 2M121.9 227.5l-19.5 59.9M205.8 455.3l-11.4 39.2M159 568l-4.3 15.6M233.6 129.3l-0.5 1.5M138.5 511.2l-1.3 4M216.5 55.7l-22 85.8M132.5 573.5l-3 10M131.8 582l-0.5 2M76.3 640.6l-14.1 48.2M350 221.6l-16.8 67.9M126.2 594.3l-0.8 3M270.9 225.3l-1.6 6M293.8 180.8l-1 4M348.1 205.6l-24.7 97.4M338.3 120.3l-0.5 2M181.5 304.4l-0.4 1.5M169.9 560.5l-3.2 10M327.7 72.5l-0.4 1.5M337.2 81.7l-0.5 2M101.5 536l-3 10M330.4 96.7l-2.8 10M350.9 178.8l-27.9 91.7M109.4 595.7l-0.5 1.5M123.6 360l-1.7 6M133.2 380.8l-0.7 2M145.8 560l-0.9 3M194.1 493.9l-12.9 44.6M191.3 514.3l-12.9 50M153.9 145l-24.6 93.1M229 81.2l-9.1 32.9M108.3 332.2l-0.9 3M214 396.1l-1.1 4M211.2 142.2l-1.6 6M207 242.9l-1.5 6M133.5 561.5l-3.2 10M277.5 252.6l-0.5 1.5M350.3 93.8l-1.1 4M165.8 574.1l-14.2 49.9M440.3 18.2l-26 88.9M75.1 598.9l-0.4 1.5M91.7 340l-2 6.9M145 306.3l-1.2 4M85 539.6l-0.7 3M151.3 181.6l-2.5 9.8M110.8 295.8l-6.4 19.8M202.4 195.1l-1 4M255.5 194.1l-0.5 1.5M216 283l-1.5 6M232.4 115l-0.7 3M383.5 66.8l-1.3 4M322.6 181.4l-19.8 74.9M251 334.3l-0.6 2M160.8 420.3l-1.3 4M240.7 424.3l-13.3 43.6M138.3 570.1l-1.8 6M94.4 467.1l-1.2 4M78.3 382.8l-0.6 2M336 124.8l-0.4 1.5M301.4 186.4l-0.6 2M161.5 344.8l-3 10M150.1 670.7l-1.9 6.1M177.1 301.8l-0.6 2M276.8 100.7l-1.5 6M317.2 88.1l-0.6 2M83.7 397.2l-1.7 6M190.8 525.9l-10.2 31.7M186.9 516.6l-8.3 28.4M202.9 205l-0.5 2M178.2 517l-1.2 4.3M138.4 448.9l-1.7 6M304.6 46.4l-1.2 4M270.5 175.1l-0.9 3M218 255.9l-0.4 1.5M259.1 66.4l-2 6M334.2 239l-2.1 8.7M256.1 383.8l-32.7 104.2M160.7 280.1l-0.8 3M202.1 433.3l-1 3.4M77.7 369l-0.4 1.5M168.7 355.5l-0.6 2M144.8 286.5l-0.9 3M212.6 314.3l-1.7 6M160.5 587l-1.5 5M267.1 217.2l-0.4 1.5M186 380.8l-1 4M257.8 184.4l-0.4 1.5M93.9 351.9l-1.6 6M336.3 100l-1.5 6M371.9 140.9l-6.5 22.7M131.3 496.3l-2.5 10M173.8 125.6l-8.8 28.1M305.4 183.2l-2.5 10M243.6 283.2l-1.2 4M228.4 372.7l-20.8 75.4M332.7 258.4l-21.9 67.5M87.8 479.8l-0.4 1.5M93.4 598.4l-0.6 2M122.2 558.2l-0.8 3M99.6 449.4l-0.5 1.5M165.7 358.5l-0.4 1.5M71.9 439l-0.7 2M192.6 101.8l-2.8 10.3M223.9 55.8l-26.3 80.5M152 546l-13 53.1M265.7 111.9l-0.4 1.5M130.3 446.2l-0.9 3M178.4 141.4l-1.3 4.8M137.2 570.6l-0.4 1.5M131.3 174.3l-31.7 96.8M221.9 228.3l-1.5 6M249.9 228l-0.5 1.5M95.6 582.1l-2.7 10M196.4 416.8l-0.4 1.5M118.8 583.8l-1.3 4M82.2 609.6l-8.3 30M244.7 258.7l-1.5 6M260.4 351.3l-14.3 57.3M288.9 272.9l-5.3 19.9M201.7 433.7l-0.5 2M353.4 57.5l-2.7 10M78.4 415.4l-1.5 6M159.4 577l-7.5 27.1M270.2 231.4l-1.6 6M226.1 382.8l-0.6 2M156.6 593.8l-35.6 123.3M255.7 209.3l-0.9 3M291.9 225.6l-2.5 10M151.2 304.4l-2.8 10M203.9 107.3l-11.3 36.3M383.3 129.7l-2.5 8.2M169.6 301.8l-1 3M270.2 411.8l-3.2 10.3M263.3 400.5l-12.3 44.5M187.1 350l-1 4M298 195l-1.7 6M355.3 76.3l-3 10M306.5 278.4l-27.6 92.9M145.9 620.8l-5.7 17.6M184.2 293.7l-3 10M354.4 224.8l-11.2 43.3M170.5 351.1l-1.8 6M243.3 89.8l-1.7 6M258.5 276.7l-1.7 6M262.1 125.8l-0.5 1.5M178.5 370l-1.7 6M290.6 120.3l-0.4 1.5M218.2 42l-13.3 44.7M132.6 548.1l-2.9 10M109.5 388.1l-0.5 1.5M81.2 469.6l-0.4 1.5M345.8 181.7l-14.1 58.8M298.8 105.5l-0.8 3M366.2 152.8l-10.9 37.7M140.4 382l-0.8 3M91.1 539.8l-0.9 3M289.9 61.8l-1.7 6M360.4 100.6l-0.8 3M206.5 252.2l-0.9 3M277.2 108.6l-0.9 3M277 220.3l-2.7 10M377.5 41.9l-1 4M147.6 446.1l-2.6 10M302.9 200.5l-2.7 10M160.2 360.4l-0.6 2M257.6 345.4l-3.4 12.9M283.4 92.4l-0.6 2M197.7 299.3l-0.5 2M248.2 213.4l-1 4M74.8 537l-0.4 1.5M187.2 479.4l-3.9 13.9M387.9 150.6l-11.7 42.9M426.1 89.7l-8.1 26M224.7 177.1l-1.7 6M122.3 337.4l-0.4 1.5M229.2 208.7l-1.9 6M91.3 488.3l-0.6 2M301.3 332.5l-7.9 26.4M161.8 151.6l-3.2 10.4M109.7 367l-1.5 6M202.4 406.3l-0.5 1.5M113.5 435.5l-0.5 1.5M105.6 263.8l-1.6 4.9M184.8 273.7l-0.5 1.5M162.2 611.5l-9.7 33.6M102.3 542.3l-0.6 2M125.3 313.2l-0.9 3M107.4 248.1l-6.5 26.9M87.9 402.7l-0.5 1.5M159.6 385.5l-0.6 2M143.1 333.8l-0.5 1.5M128.1 339.1l-1.3 4M117.7 555.1l-2.4 10M216.5 321.2l-2.7 10M125.7 415.9l-1.8 6M153.9 632l-5.9 20.5M178.4 198.4l-0.4 1.5M307 48.1l-0.6 2M374.2 151l-17.9 64.5M150.2 144.3l-22 70.5M141.3 173l-22.7 90.3M161.8 513.9l-0.5 1.5M180.9 491.9l-19.9 63.1M85.9 545l-1.3 4M219.5 457.7l-8.8 27.1M147.2 511.7l-0.5 1.5M70.2 567.8l-0.9 3M333.3 103l-1 4M242.3 234.6l-1.2 4M221.7 253.1l-1.3 4M298.4 343.6l-4.8 16.8M342.5 230.9l-8.2 25.3M221.6 362.6l-0.9 3M197.4 464.4l-2.2 7.9M297.3 102.7l-0.9 3M310.5 201.5l-0.4 1.5M126.9 424.5l-1.5 6M144.3 294.1l-0.6 2M204.9 414.7l-0.7 2M82 491.3l-2.8 10M195.4 438.7l-0.8 3M202.1 288.7l-1.2 4M330.7 82.3l-0.6 2M214.6 162.8l-1.2 4M280 388.3l-4.5 17.6M252.2 117.4l-2.9 10M267.3 295.7l-2.9 10M232.4 187l-0.9 3M146.6 641.2l-14.1 49.9M259 229.8l-1.9 6M282.8 139.5l-0.6 2M194.7 437.9l-16.3 51.4M191.6 247.3l-2.9 10M278.7 347.8l-27.2 99.9M221.8 245.9l-1.6 6M304.1 297.1l-4.2 15M379.6 183.4l-5.6 17.3M73.4 419.4l-1.6 6M151.5 301.7l-2.8 10M192.5 106.4l-5.6 17.3M167.3 537.6l-11.9 40.7M78.1 299.8l-1.6 5.1M314.4 312.7l-11 43.4M292.1 60l-0.5 2M208 164.3l-0.5 2M96 418.2l-1.8 6M279.5 313.2l-16.1 57.1M232.5 73.8l-6.2 21.7M231 298l-1.5 6M87.7 526.1l-0.8 3M157.4 500.2l-0.6 2M158.2 475.8l-2.4 10M101.5 405.5l-2.7 10M98 354.9l-1.9 6M187 334.5l-3.1 10M205.3 200.5l-0.6 2M303.4 60.1l-0.8 3M367.7 64.2l-2.6 10M196.4 442.5l-1 4M280.1 316.2l-4.2 13.7M170 192.6l-1.2 3.9M250.1 124l-0.8 3M94.8 521.7l-0.6 2M86.2 432.9l-1 3M81.5 595.5l-0.8 3M385.4 141.8l-18.9 67.3M170.9 322.2l-3.3 10M111.1 476.2l-0.6 2M133 324.3l-1.8 6M325.5 133.8l-0.8 3M217 441.7l-3.8 14.8M306.9 227.7l-3.6 12.3M270.5 354.3l-15.8 62.3M134.7 295.7l-2.6 10M199.4 181.2l-0.4 1.5M227.3 176.6l-0.5 2M127.5 380.5l-2.9 10M151.4 434.7l-1.1 4M358.1 222l-1.3 4.8M98.6 423.2l-0.9 3M325.7 149.6l-0.7 3M163.3 547.8l-29.3 114.2M287.5 326.5l-2.1 8.4M73 412.2l-0.6 2M300.4 211.6l-2.7 10M419 99.5l-1.3 4.5M198.5 424.4l-0.4 1.5M270 38.5l-2.5 10M211.8 302.8l-1.3 4M355.7 95.6l-1.1 4M261.2 386.1l-4.5 15.5M98.5 543.6l-0.5 2M75.6 370.9l-2.9 10M135.4 438.1l-1.8 6M307.9 77.1l-3.1 10M246.8 105.2l-0.5 1.5M103.1 662.2l-15.8 48.7M184.7 143l-2.3 8.9M101.6 580.3l-2.4 10M299 286l-1.3 4M119.6 451.6l-1 4M71.4 580.9l-1 4M228.5 417.2l-31.1 105M283.2 224.6l-1.3 4M181.7 474.4l-9.4 33.4M171 498.8l-3.9 12.6M196.1 293l-0.4 1.5M385.8 62.8l-3 10M306.3 109.5l-0.5 2M106.6 511.3l-1.3 4M84.8 328.4l-3.7 13.9M196.2 476.5l-11.2 40.5M288.3 331l-12.1 39.5M93.8 340.7l-3.3 10M263.1 77.6l-0.9 3M241.4 314.7l-3 10M123.8 310.3l-1.2 4M230.5 383.6l-10.3 32M264.9 70.4l-0.5 1.5M377.1 107.9l-21.2 84.5M146.6 316.2l-1 4M298.1 170.9l-0.8 3M151.3 462.5l-3 10M128.4 389.9l-2.6 10M249 45.6l-9.8 33.2M275.1 373.1l-21.7 70.1M221.4 229.5l-0.7 3M351.9 128.7l-0.9 3M226.7 148.2l-2.6 10M169.5 494.5l-10 31.8M114.8 499.3l-0.4 1.5M257.3 173.9l-1.8 6M200.8 207.2l-0.9 3M173 450.7l-1.1 4M265.5 162.8l-1 4M150.5 654.2l-5.5 20.9M162.6 575.2l-4.5 17.4M209.8 347.5l-0.4 1.5M295.2 84.3l-2.6 10M286.8 358.6l-11.4 42.7M192.6 377.6l-0.6 2M155.3 249.8l-0.8 3M101.1 533.1l-1.6 6M185.8 358.6l-0.4 1.5M238 439.2l-1.2 4.8M396.5 94.2l-26.2 91.3M196.5 180l-1 3M90 314l-2.1 8.4M198.5 239.5l-2.8 10M129.3 472.9l-1 4M117.9 214.4l-11.2 44.4M207.1 196.3l-1.1 4M265.6 256.7l-1.2 4M359.2 185.9l-7.4 24.6M174.2 245.6l-1.5 6M332.1 279.2l-1.6 4.8M315.6 307.1l-12.8 43.3M85.4 485.9l-0.6 2M100.7 374.5l-1.3 4M231.6 163.8l-1.2 4M241.5 186.4l-1.2 4M124.3 364.3l-1 4M254.9 267.6l-1.7 6M285.2 39.9l-1 4M318.8 309.4l-7.9 27.2M201.9 426.4l-0.8 3M234.7 310.5l-1.9 6M117.8 361.1l-3.3 10M292.3 144l-1.1 4M170.2 491.8l-0.4 1.5M119.5 530.7l-0.4 1.5M241.2 139.7l-1.1 4M372.9 65.6l-0.5 1.5M250.5 312.8l-0.5 2M87.1 300.1l-2.4 9.3M272.1 64.4l-2.5 10M256.4 381l-3.9 14.7M155.7 364.6l-0.4 1.5M256.2 268.3l-1.9 6M208.7 289.5l-3 10M214.2 429.9l-29.3 99.7M192 111.4l-3.2 9.8M247.6 227.4l-0.4 1.5M76.4 618.7l-5.4 18.9M174.3 291.6l-0.5 2M263.8 349.6l-16.4 58.3M91.1 519.6l-1.7 6M161.9 481.8l-0.6 2M131.4 408.4l-0.4 1.5M321.7 175.2l-0.7 3M137.8 330.1l-0.5 1.5M195.7 210l-0.4 1.5M140 622.2l-17.4 69.2M232.3 376.3l-0.9 3M234.5 302.6l-0.9 3M140.9 441l-0.5 1.5M335.3 86.6l-0.9 3M146.3 339.3l-1.9 6M92 564.6l-0.8 3M239.5 310.8l-3 10M287.7 98.6l-0.8 3M296.4 143.1l-0.5 1.5M93.2 596.4l-12.8 47.1M321.2 264.7l-25.7 97.6M140.6 492.1l-0.6 2M193.7 410.8l-0.4 1.5M138.9 382.4l-1.9 6M119.5 387.5l-3.2 10M316.7 148.8l-0.7 2M81.7 581.9l-0.9 3M168.1 321.2l-1.8 6M220.8 444.1l-4.5 15.5M190.4 473l-6.4 22.3M176 159.2l-9.5 35.4M333.3 97.1l-0.4 1.5M321.6 255.3l-28.6 94.9M286 59.4l-1.4 6M101.7 525.3l-2 6M288 106.2l-0.8 3M176.2 440.5l-0.8 3M167.2 337.8l-0.4 1.5M163.4 473.8l-1 4M111.6 275.1l-3.7 14.6M319 188l-1 4M117.5 470.7l-1.6 6M128.8 447.5l-0.6 2M173.1 442.8l-3 10M167.4 254.1l-0.5 1.5M142.7 332.7l-0.4 1.5M134.4 315.4l-1.4 6M367.8 57.6l-0.5 1.5M338.2 214.5l-12 38.1M168.2 304.2l-0.8 3M295.7 107.8l-1 4M278 203.5l-0.9 3M135.8 603.2l-1.1 3.6M186.1 280.1l-1.1 4M116.1 508.1l-0.6 2M228.6 220.7l-0.6 2M213.1 155.1l-0.5 1.5M310.1 137.2l-0.7 3M321 118.2l-0.5 1.5M74.4 255.8l-27.1 103.3M323.6 206.2l-3.1 12.9M189.7 101.8l-12.4 42.4M230.3 356.2l-2.4 10M305.7 182.9l-0.8 3M227 254.5l-1.8 6M254.4 197l-0.6 2M172.3 378.7l-0.5 2M300.7 157.3l-2.8 10M149 659.5l-5 20.8M262.3 59.8l-0.5 2M272.9 57.7l-0.4 1.5M159.6 617.9l-5.7 21.2M439.2 45.1l-11.7 38.9M262.5 364.7l-9.8 37.4M257 105.9l-1.2 4M240.3 290.3l-0.8 3M195 260.6l-1.2 4M276.4 230.4l-1 3M226 143l-0.5 1.5M208.6 205l-1.9 6M265.7 369.5l-29.3 101.9M206.7 425.2l-3.7 12.2M314.8 249.3l-6 22.2M298.7 64.8l-3.3 10M243.1 105.1l-1.5 6M351.4 167.6l-5.3 22.1M312.1 76.2l-0.9 3M412.9 35.7l-21.6 78.1M351.5 55.7l-1.6 6M220 306.3l-3.2 10M124.5 381.5l-0.6 2M367.2 84.9l-0.7 3M313.7 159.4l-0.5 2M294.6 194.2l-1.6 6M230.1 303.7l-0.5 1.5M224.8 303.8l-0.5 2M268.1 107l-2.7 10M97.5 364.6l-1.7 6M294.2 41.2l-0.8 3M101 547.3l-1.1 4M249.7 269.9l-1 3M105.4 529.8l-1.1 4M383.2 133.6l-4.2 14.8M164.8 432.2l-2.6 10M202.9 379.8l-0.6 2M223.6 257.9l-2.5 10M359.7 155.4l-4.2 13.9M158.3 533.7l-1 3.6M159.4 267.4l-2.5 10M235.3 169.3l-0.5 1.5M176 459.7l-1 4M292.7 359.4l-2.7 9.6M298.6 62.7l-1.1 4M191.5 279.4l-0.4 1.5M172.6 458l-0.6 2M357.3 102.3l-2.8 10M426.3 89.3l-2.5 9.2M72.4 509.1l-0.4 1.5M98.7 657.2l-2 7M240 267.1l-0.5 2M402.5 98.6l-17.4 62.6M146.5 493.8l-0.5 1.5M94.5 532.2l-2 6M297.7 130.9l-0.8 3M167.5 341.9l-1.5 6M147.9 603.9l-2.7 9.3M328.3 150l-0.6 2M275.6 70l-3.3 10M239 402.5l-1 4M71.3 431.4l-0.6 2M233.8 272.1l-1.7 6M105 578.4l-0.8 3M237.4 378.3l-15.6 54.3M71.4 447.6l-2.6 10M143.2 444.1l-2.7 10M216.8 239.4l-0.6 2M84.7 359.6l-1.1 4M184.5 458.2l-0.8 3M177.7 405.8l-0.4 1.5M136.6 472.3l-1.8 6M222.5 287.8l-0.6 2M403.9 45.7l-0.4 1.5M377.5 168.7l-4 16.4M258.8 258.9l-0.5 2M288.2 78.4l-2.9 10M228.9 58.7l-14.3 55.7M323.9 41.2l-1 4M96.9 621.4l-7.4 30.2M286.4 134.1l-0.7 3M105.5 288.6l-1.2 4.2M89.4 558.1l-1.7 6M74.3 532.9l-0.4 1.5M76.8 294.8l-26.5 85.5M277.6 345.6l-7.8 23.8M281.1 148.8l-0.9 3M136.3 468.3l-0.6 2M150.1 539.7l-12.6 49.3M117 650.4l-14.8 48.4M189.3 447.2l-0.5 1.5M137.4 352.2l-1.5 6M300.7 45.2l-1 3M415.2 79.8l-18.7 62.9M92.9 356.8l-0.4 1.5M77.4 559.6l-1.3 4M238.2 312.1l-2.9 10M138 416.6l-3.1 10M219.2 350.2l-0.8 3M129.6 305l-0.6 2M288.1 262.9l-6.2 19.1M124.6 623.2l-13.8 50.8M99.3 353.7l-3 10M95.9 580.9l-1.3 4M310.1 314l-1.5 4.6M109.8 650.3l-2.2 7M271.3 174.5l-1 4M330.8 122.4l-0.6 2M109.9 346.2l-1.6 6M203.7 375.7l-0.6 2M315.8 267.7l-2.5 8.4M149.8 509.3l-0.4 1.5M359 72.7l-0.9 3M177.1 583.2l-1.7 6M235.7 250.2l-1.1 4M293.4 143.6l-1.8 6M257.6 252.3l-1.3 4M192.9 227.1l-0.4 1.5M390 57.5l-1.2 4M228.2 311.3l-1.8 6M120 511.6l-1 4M218.8 286.7l-1.3 4M176.8 567.5l-5.4 20.5M164.1 387.9l-0.6 2M249.3 202.9l-0.5 2M287.7 63.7l-1.2 4M305.6 86.8l-0.5 1.5M285.5 350.4l-4 15.9M218.8 56.1l-1.3 5.2M159.8 338.4l-1.5 6M307.7 286.1l-2.1 8.4M174.4 547.4l-21.1 83.1M165.1 426.8l-0.4 1.5M256.9 135.4l-1.6 6M195 251.8l-0.4 1.5M123.3 444.8l-1.1 4M327 101.5l-0.4 1.5M232.2 321.2l-0.4 1.5M138.7 209.9l-3.9 16.2M258.8 97.5l-0.4 1.5M363.3 50.1l-3.1 10M109.9 267.5l-4.3 15.5M288.6 377.6l-1.5 4.9M279.5 261.5l-0.4 1.5M196.6 381.6l-0.6 2M151.9 563.3l-24.9 102.9M79.6 598.7l-3.3 10M89.1 434.6l-1.8 6M320 74.6l-0.4 1.5M302.5 195.5l-1.6 6M140.9 347.9l-0.4 1.5M153.5 354l-0.5 2M227.6 426.7l-1.2 4.1M73.3 550.1l-0.5 2M187.2 229.3l-1.9 6M161.4 491.8l-0.8 3M256 315.8l-0.4 1.5M80.3 400.8l-1.6 6M385.8 55.7l-0.6 2M348.7 140.3l-0.5 2M183.8 543.7l-5.9 19.8M142.1 339.4l-0.4 1.5M301.4 292.4l-6.6 23.2M91.4 569.8l-0.4 1.5M75.2 515.6l-0.6 2M228.6 25.7l-21.7 65.9M323.2 137.9l-0.8 3M73.3 494.9l-0.8 3M207 278.2l-1.6 6M285.3 107.5l-0.8 3M109 600.1l-0.5 1.5M397.5 89.9l-8.7 35.3M219.9 400.4l-0.6 2M223.6 422.4l-25.5 104.2M183.6 500.8l-2.2 8.5M255.4 314.9l-21.3 72.6M305.8 210.9l-0.9 3M237.3 177.7l-0.9 3M245 153l-0.5 1.5M123.3 383.4l-0.5 1.5M257.5 296.9l-2.6 10M235 27.1l-8.2 27.3M286.4 71.4l-0.6 2M193.7 240.9l-0.6 2M149.2 596.7l-1.3 4.4M158.4 233l-0.8 3M219.8 303.1l-0.5 2M123.1 445.6l-1 4M250.9 256.8l-1.5 6M240.6 148.9l-0.5 1.5M270.1 241.2l-1.1 4M105.5 355.9l-1 4M153 649.8l-3.4 12M146.7 362l-1.5 6M271.5 123.1l-2.8 10M308.8 312l-4.1 16.2M236.6 229.7l-0.9 3M103.3 362.4l-1 4M415.3 46.7l-2.2 7.1M340.4 66l-1.2 4M123.7 208.1l-7.6 28.5M208.9 490.5l-2.7 10.4M242.2 334.1l-0.5 1.5M206.3 334.3l-1.6 6M218.9 138.9l-1.6 6M256.6 114.7l-0.9 3M310.7 91.9l-1.3 4M234.6 423.1l-10 41.1M290.1 137.1l-0.9 3M252.1 259l-1 4M175.8 332.3l-0.4 1.5M434.7 74.2l-1.5 4.5M372.6 171.3l-16.5 67.7M179.9 283.4l-1.6 6M218.1 170.8l-0.9 3M304.9 122.8l-0.5 1.5M181.2 393.2l-2.9 10M195 497.2l-5.2 16.9M258 254l-0.5 1.5M162.5 107.6l-33.5 102.4M71.7 427.5l-0.5 2M71.8 461.5l-1.1 4M214 208.1l-1.7 6M196.8 169.4l-0.5 2M88.1 524.2l-1 4M102.6 574.6l-0.5 2M301 89.2l-1 4M318 192.8l-3.3 10M264 349.2l-11.7 35.7M281.6 202.8l-0.7 2M115.8 324.4l-0.5 2M138.1 268.7l-1.2 4M368.9 188l-12 42.7M182.1 513.8l-1.1 4.4M335.1 98l-0.4 1.5M294.8 89.2l-3 10M175.4 370.5l-0.6 2M302.1 137.4l-1.2 4M273.1 287.9l-0.4 1.5M111.4 524l-1.3 4M174.7 449.4l-0.6 2M314.1 135.8l-1.6 6M300.3 145.7l-1.9 6M419.5 115.6l-5.4 17.2M155.1 496.5l-0.5 2M335.9 157.1l-10.1 30.7M223.4 254.3l-0.6 2M330.4 130.1l-2.5 10M189.4 97.7l-16.7 64.3M277.9 81.7l-1.5 6M452.5 46.8l-1.3 4.5M104.2 683.3l-4 12.4M154.8 623.4l-1.8 5.7M185.7 487.2l-19.2 65.4M147.3 320.1l-0.5 1.5M289 89.2l-1.8 6M188.2 281.7l-0.4 1.5M332.4 201.9l-25.5 86.7M80.1 435l-1.6 6M210.2 446.5l-19 66M244.6 153.7l-1.8 6M276.4 125.6l-1.3 4M95.5 291.6l-1.4 4.6M346.6 49.3l-0.6 2M270.5 189.4l-0.5 2M307.2 264.2l-1.2 3.9M239.7 447.7l-1.5 5.1M322.7 244.1l-3.7 14.5M241.3 119.1l-1.1 4M452.3 42.8l-13.6 41.9M263.7 241.1l-0.8 3M266.7 281.6l-2.7 10M363 58.9l-0.6 2M211.6 451l-22.8 69.2M326.8 249.8l-4.3 15.2M331.3 79l-0.6 2M72.4 550.4l-0.6 2M200.7 268.2l-0.6 2M128.6 291.1l-1.7 6M351.6 65l-1.6 6M309.9 210l-1.8 6M209.4 238.6l-3.1 10M169.6 155.4l-2.6 9.5M288.2 282.1l-20.6 82.6M180.6 311.4l-0.9 3M162.2 272.2l-0.6 2M354.1 54.8l-2.8 10M239.1 70.5l-6.1 20.6M105.8 386.6l-1.7 6M129.1 211.1l-19.7 61.2M218.8 396.2l-2.7 10M280 379.1l-4.5 16.9M358.9 222.2l-7 27.2M108.6 396l-1.1 4M282.1 166.3l-3 10M363.4 79.5l-1.9 6M333.7 58.6l-1.9 6M159.4 199.8l-2.1 8.2M197.2 405.7l-1 4M250.7 142.7l-2 6M183.5 531.9l-5.3 18.5M164.1 387.7l-0.5 2M326.8 167.9l-1.3 4M216.4 192.6l-2.7 10M86.3 392.3l-0.4 1.5M250.4 67.5l-1.1 3.5M100 277.7l-23.7 76.2M109.6 250.7l-16.4 59.2M177.6 544l-5.6 18.3M108.4 660.1l-3.4 12.3M326.2 284.4l-5.3 16.6M390.6 61.1l-0.6 2M315.7 180.6l-1.9 6M143.3 197.3l-6.3 25.5M345 241.4l-8.3 26.3M193.2 510.6l-5.6 18M224.3 479.5l-6.3 19.8M460.2 43.9l-6.6 26.9M353.7 217.9l-7.8 26.1M168.7 317.3l-0.6 2M260.2 278.1l-0.4 1.5M306.4 63.2l-0.8 3M280.3 278.7l-3.2 10M186 516.7l-13.6 47.5M105.2 455.5l-0.6 2M213.7 59.1l-4.4 18.2M358.6 49.8l-2.8 10M153.4 291.5l-0.4 1.5M274.8 84.7l-0.8 3M278.7 202.2l-3.3 10M418.1 35.7l-5.8 19.5M185.9 355.2l-1.2 4M208 118.2l-10.7 32.6M160.6 338.5l-1.3 4M131.2 335.7l-0.9 3M122.2 507.7l-2.6 10M207.9 345.4l-0.9 3M237.3 412.2l-28.3 109.8M167.2 144.4l-25.3 83.9M284.5 40.6l-1.8 6M127.1 601.1l-0.6 2M174.7 431.9l-1 3M181 282.3l-0.4 1.5M210.8 341.6l-1.8 6M138.4 549.7l-1.3 4M280.1 95.9l-1.3 4M469.1 30.2l-6.5 27M375.9 50.6l-0.9 3M149.4 528l-1.3 4M164.4 426.4l-0.5 2M328.4 161.7l-12.1 47.9M147.4 365.5l-1.5 6M365.6 70.3l-2.5 10M356 220.1l-5.3 16.7M161.9 604.7l-5.8 20.8M199.1 479.4l-19.5 73.8M222.5 199.1l-0.4 1.5M200.2 220.8l-2.6 10M331.4 272.4l-10.4 42.9M372.1 134.9l-4.5 13.8M174.8 410.8l-0.6 2M242.5 242.6l-0.9 3M282.9 312.1l-4.4 13.7M403.2 47.2l-1.5 6M130.4 528l-2.7 10M102.9 665.9l-8.4 30.9M238.6 101.5l-1.6 6M80.8 303.9l-2.3 9.7M160 334.9l-1 3M181.4 363l-1.2 4M283.7 123.3l-1 4M187 147.8l-2.1 8.4M300.9 199.6l-1.5 6M356.7 230.8l-7.3 27.3M133.4 586.5l-2.7 10M158.6 496l-0.9 3M96.8 467.2l-0.5 1.5M101.2 361.3l-1.8 6M307.7 275.5l-2.6 8.2M104.7 286.9l-12.8 50.8M196.1 107.5l-17.2 57.9M167.9 508.1l-0.9 3.5M118 643.6l-5 19.1M355.2 73.7l-1.7 6M302.4 104.8l-0.8 3M216.6 229.5l-0.9 3M291 194.3l-1.9 6M121.7 496.6l-1.6 6M202 216.8l-0.4 1.5M164.8 298.7l-1 3M319.3 119l-0.4 1.5M302.8 38.5l-0.8 3M123.8 294.1l-0.5 2M122.7 204.6l-12.8 44.8M87 279.1l-1.7 5.3M244.1 330.4l-2.7 10M255.3 215.7l-0.5 2M100.1 473.4l-0.9 3M157.9 403.1l-0.6 2M101.9 396.2l-1.7 6M371.9 187.5l-11.2 43.4M199.6 310.7l-0.6 2M201.9 407.4l-0.6 2M250.9 171l-0.4 1.5M82.1 598.7l-0.9 3M305.6 47.4l-1.8 6M185.4 455.8l-1.5 6M301.3 164.6l-1.7 6M281.8 327.2l-10.7 37.4M212.4 428.1l-5.8 21M204.7 320.6l-1.5 6M91.9 557.4l-0.5 1.5M217.3 150.1l-0.6 2M176.2 265.4l-1.7 6M201.4 497.8l-2.7 10.1M206.6 501.6l-8.9 32M226.5 438l-4.5 15.7M247.8 151.2l-2.6 10M96.4 364.2l-1 3M309.3 87.2l-0.8 3M90.5 443.4l-2.9 10M172.1 356.7l-0.6 2M415.7 38.2l-7.6 31.8M71.5 303.8l-13.2 42.3M190.6 333l-1.2 4M355.1 208.8l-6.3 25.6M243.7 236.7l-0.5 1.5M118.2 449.5l-0.5 2M267.1 383.2l-18.6 69.8M140.9 307.2l-0.9 3M217.2 320.3l-1.9 6M100.8 389.4l-0.6 2M321.1 215.6l-3.3 13.1M287.6 374.6l-7.5 27.5M134.3 540.3l-3.1 10M385.9 74.7l-0.5 1.5M218.9 152.2l-2.9 10M226.9 348.9l-0.5 1.5M228.8 337.3l-2.7 10M302 299.9l-23.7 97.1M262.5 137.7l-0.4 1.5M161.5 342.2l-1.5 6M107.6 384.3l-0.6 2M74.7 489.7l-0.9 3M283.5 145.9l-1 3M136.6 575.4l-22.5 79.3M134.8 336.9l-0.5 1.5M203.2 218.4l-1.2 4M297.1 196.8l-0.5 1.5M156.7 498.4l-1.1 4M291.3 247.2l-3.2 10M112.8 594.4l-0.6 2M138.6 667.4l-9 29.5M203.4 207.8l-2.5 10M303 76.5l-3 10M188.8 122.5l-8 25.1M317.3 57.9l-1 4M246.9 369.3l-1 3.7M102.9 512.3l-3.2 10M104.5 335.6l-0.8 3M255.8 164.7l-0.5 2M124.7 466.2l-0.6 2M90.3 514.8l-0.5 1.5M226.4 381.2l-0.9 3M346.6 191.2l-2.6 8.2M111.6 438.6l-2 6M274.4 164.4l-2.9 10M225.4 165.9l-0.6 2M271 409.5l-2.8 10.2M292.4 189.3l-0.5 1.5M226.8 216.8l-1.1 4M192.1 303.4l-0.5 1.5M190.6 100l-18 63M372.9 120.5l-9 34M256.7 422.5l-1.5 4.9M194.5 217.6l-0.6 2M161.3 325.8l-1.1 4M433.4 79.2l-10.4 42.8M295 152.7l-0.4 1.5M129.4 309.8l-2 6M181 362.8l-3.1 10M285.4 85.2l-0.4 1.5M103.9 573.2l-1 4M157.5 432.7l-2.9 10M222.2 176.4l-1 4M152.4 426.8l-0.5 1.5M97.2 452.5l-0.4 1.5M88.9 540.2l-0.4 1.5M101.8 355.6l-0.6 2M175.9 223.7l-0.6 2M194.5 534.5l-1.7 5.8M90.7 421.4l-1.9 6M360.1 39.8l-0.8 3M248 317.6l-0.9 3M74.3 347.4l-13 48.2M89.6 358.6l-0.8 3M221.4 329.8l-1.8 6M118.5 489.3l-1.8 6M225.8 385.3l-21.3 79.5M126.2 458.2l-1 4M152.4 613.9l-3.5 10.7M191.8 416.3l-2.5 10M188 458.4l-0.8 3M102.9 263.7l-5 16.9M164.9 231.2l-1.7 6M160.7 204.4l-9.9 31.5M233.2 210.8l-1.2 4M197.9 178.5l-2.6 10M179.8 534.8l-12 48.5M205.6 72.2l-8.6 28M330.8 190.1l-9.3 33.4M257.2 155.3l-0.8 3M182.2 385.1l-3.3 10M154.8 226.4l-3.6 12.4M174.4 448.8l-0.8 3M357 71.8l-0.5 1.5M235.6 349.5l-0.5 2M137.6 462.5l-2.5 10M335.2 94.2l-0.4 1.5M285.1 240.7l-0.4 1.5M446.8 52.7l-4.7 16.1M354.2 39.9l-2.7 10M221.5 455l-12.5 45.8M128.4 445.7l-0.7 2M70.5 357.9l-5.7 20.7M111.5 593.3l-0.9 3M170.5 314.2l-0.6 2M219.7 367l-0.8 3M99.7 592.5l-3.1 10M189.1 270.1l-0.6 2M338.2 240.4l-2.8 9M146.3 424l-1.6 6M88.2 543.2l-1.8 6M289.1 98.7l-2.5 10M137.3 271.3l-0.4 1.5M221.6 476.7l-1.6 5.3M132.8 534.9l-1.1 4M192.4 367.8l-0.5 2M263.7 213.6l-2.9 10M121.1 444.7l-0.6 2M146.1 344.6l-1.5 6M162.6 452.9l-0.5 2M266.1 113.9l-0.8 3M383.3 101.2l-27 85.7M341 93.5l-1.6 6M220.9 437.2l-21.9 68.8M109.1 571.9l-0.8 3M203.6 223.1l-0.6 2M214.9 200.8l-1.2 4M380.1 41.9l-1.3 4M119.9 409.8l-0.4 1.5M265.5 337.5l-6.7 21.2M250.5 416.2l-6.7 26.7M184.7 203.9l-3.3 10M123.7 491l-0.6 2M313.2 272.7l-3.9 14.8M132.2 548.3l-2.7 10M313.1 170.9l-1.2 4M306 174.2l-1 3M130.7 513.9l-1 3M182.7 131.3l-4.7 16.5M243.5 450.2l-5 19M197.8 202.2l-2.9 10M366.7 128.3l-2 7.2M311.7 146.6l-0.5 1.5M172.2 406.3l-1.1 4M198.4 490.4l-20.8 80.4M222.1 242l-1.5 6M357.2 147.3l-0.9 3.7M181.9 476.7l-3.4 12.8M411.8 33.4l-7.9 30M144.8 637.6l-2.7 10.3M155.4 589.9l-20.7 79.1M205 343.5l-1.7 6M233.4 372.8l-0.5 1.5M263.7 392l-11 42.6M87.3 493.8l-0.5 1.5M218.4 218l-1.2 4M176.6 554.6l-8.8 30.9M127.4 496.1l-1.9 6M139 405.3l-1.8 6M267.2 132l-1.2 4M336.5 255l-1.1 4.6M223.3 34.8l-21.5 65.9M137.6 495.5l-2.8 10M78.2 264.5l-17.2 71.3M288.2 154.6l-0.6 2M196.2 83.2l-25.6 88.8M139.7 374.1l-1.8 6"/>
<path stroke="url(#bg)" stroke-width="1.5" fill="none" d="M426.3 63.5l-17.6 63.4M410.7 85.6l-9.3 38M172.3 549.7l-5.7 17.6M307.2 342.2l-3.2 9.9M346.8 203.7l-10.1 39M213.6 457l-5.1 15.8M382.5 83.3l-20.2 77.5M441.8 86.2l-2.9 9.9M346.6 172.7l-2.1 7.7M360.5 203.9l-2.9 9.3M407.7 84.3l-18 60.9M119.4 221.3l-9.1 27.8M296 328.4l-1.2 4.4M188.3 509l-21.2 80.3M359.1 210.8l-4.9 16.6M283.4 365l-2.7 9.3M91.7 319.5l-8.8 32.1M133.9 224l-14.1 54.7M242.4 60.2l-6.8 21.2M368.6 186.6l-1.3 4.6M388 141.1l-2.8 8.9M158 603.6l-1.4 5.3M202.6 448.9l-16.2 61.6M148.5 627.5l-23 81M147.2 668.5l-1.7 5.8M308.9 312.7l-13.8 42.3M222.3 84.4l-2.3 8.6M408.7 101.1l-1.2 4.3M166.2 101.5l-29.6 102.3M115.8 219.8l-12 44.1M445.9 50.3l-6.3 25.3M88.6 287l-16.3 59.1M126.5 229.6l-1.5 4.8M133.3 210.6l-1.2 5M256.8 343.3l-1.1 3.6M165.6 574.8l-15.2 50.1M140.7 238.6l-9.8 31.5M248.5 314.2l-19.2 68M161.4 148.7l-22.3 86.2M255.7 417.8l-2.7 9.7M167 563.9l-1.4 4.8M454.7 59.7l-8.9 27.3M133.8 194.9l-11 42.9M225.9 78l-7.3 22.6M134.3 681l-3.3 10.2M301.2 319.4l-1.1 4.5M188.8 92.8l-19.1 66.1M370.7 192.7l-2.5 9.6M174.9 147.6l-17 56.7M149.7 672.8l-3.1 12.3M222.7 395.5l-1.8 6.8M428.9 23.9l-10.8 32.9M289.1 337.9l-4.8 15.6M74.6 362l-5 19.2M363.1 135.2l-26.6 86.6M87.8 620.1l-0.9 3.4M249.2 401.7l-1.3 4.3M142.6 594.1l-24.8 100.4M317 213.2l-6.5 20.1M198.2 127.6l-10.6 34.2M337.3 167.9l-16.2 52.7M436.1 65l-20.5 67.9M306.4 212.6l-13.8 48.5M164.4 526.9l-9.2 36.8M289 302.7l-15.5 58.7M242.8 378.2l-28.4 89.1M75.6 654.7l-3.8 12.2M91.1 654.6l-3.8 12.2M107.2 307.3l-1.1 3.7M196.6 102l-1.6 5M239.6 59.8l-4 14.3M389.7 88.2l-5.3 20.2M198.3 464.5l-10.9 38.5M162.5 154.6l-8.5 26.8M136.5 238.6l-3.9 14.1M266.6 340.9l-11.3 35.3M107.2 655.1l-20.2 71M186.4 489.6l-31.9 112.8M365.6 202.9l-3 9.5M449.7 20l-30.9 95.8M172.3 526.1l-27.3 113.7M255.4 406.1l-12.4 43.5M376.2 149l-11.1 39.6M165.8 595.6l-6.4 20.8M200.4 125.1l-2.1 8.4M419.4 97.9l-4.7 16.1M145.4 674.5l-3.5 11.7M391.9 130.7l-16.6 67.1M183 519.9l-11.7 46.6M85.4 674.9l-10.2 31.1M204.3 105.2l-4.9 15.6M162.9 553.4l-29.4 118.7M191.6 438.2l-25.2 79.2M448.2 63.2l-1.2 4.7M296.1 364.5l-1.6 5M260.2 394.2l-17.5 71.1M261.8 424.7l-2.8 10.4M293.6 325.4l-32.4 99.2M381.1 156.6l-7.3 25.7M77.5 292.8l-5.1 18.1M410.3 119.9l-1.5 4.6M332.8 282.8l-5.5 17.2M201.1 457.3l-16.8 64.1M294.6 288.1l-16.1 57.9M309.8 234l-6.6 20.4M300.8 270.4l-26.2 86.7M376.4 165.2l-7.9 25.8M90.8 297.7l-16.4 54.7M282 382.5l-4.6 17.4M442.6 86.2l-3.2 9.9M132.2 616.3l-11.2 35.2M178.9 521.5l-2.5 9.1M146.1 206.6l-1.3 4.5M275.1 302.1l-3.1 12.5M411.4 89.6l-4.6 14.8M409.1 57.5l-16.6 54.6M358.4 210.7l-10.4 42.7M168.5 519.6l-18.6 63.2M227.3 468.9l-3 10.7M414.8 93.9l-6.2 24.7M128.4 190.2l-21.1 67.9M362.2 158l-25.5 92.7M248.2 368.6l-27.4 87.8M168 142.4l-16.6 61.9M173.9 109.6l-26.8 93.6M101.4 292.3l-22.3 69.2M302.5 342.9l-5.3 17.2M156.7 579.9l-22.1 77.7M143.7 619.9l-10.7 44.3M456.4 6.4l-29.9 94.6M289.3 265.6l-24.9 77.9M444.6 78.5l-4.2 17.4M272.1 375.5l-17.1 69.5M387.4 129.8l-18.2 64.9M349.8 199.6l-4.7 15.2M319.9 282.2l-1.3 4.5M198.6 504.2l-9.3 29.9M121.8 676l-2.6 8M295.1 261.9l-22.8 80.4M76.4 635.2l-3.7 12.1M168.3 135.7l-10.9 42.9M240 23.2l-18.3 60.7M179.9 514.5l-37.7 119.8M96.4 316.4l-6.3 20.3M436.8 50.1l-1 4.2M161.8 173.9l-2.7 9.3M210.5 111.8l-1.2 4.2M70.9 636.9l-6 19.1M397.1 105.2l-15.3 62.2M243.9 387.4l-9.7 36.2M287.2 318.7l-27.7 93.9M162.9 571.4l-12 46.7M374.6 150.7l-3.9 15.1M380.6 144.7l-16.8 65.9M347.6 169.9l-4.4 13.6M163.1 550.3l-33.6 116.2M166.7 570.1l-1.4 5M83.6 632.5l-8.7 30.4M71.2 282.6l-19.5 69.5M311.2 247.6l-26.9 86.2M146.7 605.6l-4 16.5M192.7 526.1l-1.4 5.5M125.7 227.5l-7 25.5M192.6 533.5l-1.7 5.7M121.3 228.7l-1.3 5.1M208.2 75.9l-1.4 5.2M84.5 688.7l-3.7 12.4M253.4 315.5l-13.3 46.8M351.9 158.7l-6.4 21.4M218.3 48.9l-19.8 64.2M254.1 43l-13.4 47.4M196.5 144.8l-1.2 3.9M328.6 251l-12.9 39.8M362.7 210.6l-2.3 9.6M98 243.7l-11 45.4M357.4 139.9l-10.8 33.3M222.6 382.5l-24.6 75.8M129.6 215l-1.4 5.1M330.7 251.7l-6.4 24.8M206.2 414.2l-22.6 78.8M128.5 629.6l-3.9 13.2M321.9 254.2l-19.9 62.4M153.4 211.4l-10 32.7M146 166.7l-20.5 65.9M156 554.1l-16.3 61.6M111.8 284.9l-1.2 4M297.6 350.1l-2.5 9.6M199.4 88.3l-1.4 5.2M204.9 435.7l-9.9 33.9M134.5 618.2l-7.2 22.7M148.6 681.4l-3 12.4M134.6 674.8l-2.8 10M221.9 471.8l-3.1 10.4M146 621.7l-5.4 17.7M78.5 624.6l-2.2 6.9M193 517.2l-5.3 18.8M395.6 142.7l-6.9 26.6M184.7 522.9l-2.7 9.9M195.8 531.3l-1.4 5.8M138.8 639.6l-8.4 26.8M94.1 661.7l-5.9 19.3M365.3 219l-1.4 4.9M231.3 402.3l-5.8 21.5M375.5 131.4l-5.8 22.3M227.3 444.2l-8.4 26.5M367.9 198.3l-3.1 9.5M207.8 493.6l-3.1 10.5M243.7 453.6l-3.2 10.9M131.1 197.6l-10.5 43.2M113.6 264.6l-13.3 52.9M187.8 108.2l-5.6 17.8M329 271.7l-8.4 26M126.7 689.6l-1.4 4.6M345.9 234.3l-2.3 9.3M104.6 259.5l-12.7 39.8M343.3 186.9l-7 22.2M306.9 255.9l-27.7 85.9M110.4 193.6l-33.5 103.6M341.7 179.8l-3.4 13.5M308.9 249.4l-9.1 34.7M405.7 101.7l-16.3 64.8M374.2 141.7l-7.3 23.1M269.7 322.7l-1.9 7.3M359.5 211.3l-2.5 9.4M106 295.7l-3.4 13.6M462.7 36l-4.1 16.6M375.6 129l-23.2 92.6M181.3 491.9l-11.1 37.2M97.1 247.3l-19.1 66.7M85.8 340.4l-3.1 12.7M405.5 55.4l-3.1 12.2M200.6 437.8l-4 12.4M381.1 122l-6.4 22.2M246.9 422.5l-11.6 45.2M382 123.3l-30.9 94.3M107.5 302.6l-1 3.8M336.1 249.1l-2.5 9.1M152.7 633.7l-5.9 20.3M202 507.4l-8.9 31.8M147.7 622.8l-33.8 121.8M172.7 131.3l-5 18M224.4 97.8l-1.9 7.7M182 147.1l-1.4 4.5M209.1 79.4l-7.7 26.3M211.2 454.6l-31.9 116.3M142.1 239.8l-7.9 30.8M109.1 229.2l-21.2 66M220 82l-4.1 15.3M292.2 296.8l-5.6 22.1M90.6 601.8l-11.4 47.2M215.8 488.7l-9.1 31.7M126.4 238.3l-17.4 54.3M144.9 678.8l-3 11.8M231.5 401.2l-30.3 94.4M289.3 295.7l-28.8 87.7M258.7 340.7l-3.9 12.8"/>
<path stroke="url(#bg)" stroke-width="2.2" fill="none" d="M230.5 441.4l-14.5 45M279.8 335l-26.7 94.6M77.2 339.5l-6.2 21.6M379 156.1l-21.9 67.4M355.8 179.8l-23.8 95M417.4 101.4l-13.6 42.2M107.4 274l-9.1 35.9M287.7 326.7l-9.7 38.8M333 259.4l-2.4 9.2M263.8 360.5l-25 95.4M374.5 137.7l-10 37.3M246.9 367.7l-9.7 33.9M184.3 134.3l-3.9 16M148.7 185.6l-15 58.8M140.5 601.1l-7.3 23M292.2 340.5l-12.6 41.7M254.2 364.2l-1.1 3.8M129.9 613.6l-17.3 54.6M128.9 228.2l-1.5 4.7M240.1 17.7l-26.9 84.8M276.5 358.1l-2.2 8.7M102.6 322.4l-2.2 6.9M309.8 252.5l-27.4 86.7M405.4 114.9l-10.1 41.4M218.1 59.7l-6.9 26.9M111.6 242.6l-2.5 10.1M450.7 61.7l-8.3 27.2M160.3 520.9l-1.1 3.4M319.9 272.7l-7.5 24.6M200.7 525.9l-1.6 5.9M194.1 95.3l-19.6 62.6M83.6 295.3l-1.4 5M272.5 270.6l-17.1 69M101.9 634.9l-18.9 70.2M258.7 398.5l-1.4 4.5M226.2 52l-1.2 5M293.3 329.2l-1.2 4.4M94.3 645.2l-18.2 70.6M217.3 48.1l-19.6 64.9M252.8 428.4l-4.4 18M191.2 472.7l-16 63.1M183.5 463.7l-13.2 53.4M135 257.6l-2.2 7.3M211 77.8l-10 39.8M338.6 197.3l-19.4 58.8M321.8 242.7l-12 37.1M241.2 394.9l-26.8 99M156 608l-23.3 84.7M318.7 274.6l-12.9 39.9M434.2 47.9l-10.6 38.1M417.1 76.8l-11.3 38.3M255.9 30.3l-15.1 50.3M254.7 334l-16 51.3M189.6 135.4l-6.9 23.2M150.9 578.4l-11.1 39.6M111.4 234.7l-4.9 18.1M78.5 623.6l-11.8 47.7M218.3 402.4l-5.8 19.2M184.3 125.1l-16.1 58.6M163.6 610.6l-3.8 12.2M134.7 665.6l-13.8 45.2M85.8 587.6l-16.6 68.5M88.4 261.2l-21.9 67M311.5 290.3l-1.2 4.3M281.2 392.3l-1.5 5M245.3 386.6l-18.6 60.4M224.1 466.9l-1.4 5.1M200.1 121.7l-11.3 34.7M432 57.4l-24 99.2M216.4 414.1l-15.7 55.4M208.6 484.9l-5.5 18M207.1 437.3l-11.3 35M361.1 129.5l-4.1 12.4M200.6 407.4l-21.5 70M113.3 235.8l-11.2 41.6M427 69.1l-11.7 39.6M342.4 180l-5.8 21.6M279.6 323.3l-22.9 90.5M129.3 685.1l-5.4 16.9M211 96.7l-5 15.3M190.9 530.3l-9.5 32.7M159.2 580l-4.9 17M142.6 237.8l-2.1 7.7M334.9 270.3l-1.2 4.7M143.8 657.2l-1.7 5.4M104.1 248l-10.2 42.4M329.8 231.2l-2.6 8.3M425.5 36.9l-6.1 20.8M257.2 417.7l-1.3 4.8M315.1 295.3l-2.4 9.1M136.3 218.5l-1.3 4.7M187.8 109.9l-5 17.6M324.3 294.6l-5.4 16.9M413.2 44.6l-8.4 32.2M136.4 606.1l-8.9 36.6M179 477.9l-27.9 89M361.5 184.5l-6.4 24.9M304.3 319.1l-11.9 42M379.1 99.3l-8.6 32.1M414.4 102.4l-2.9 9M274.1 385.2l-1.3 4.7M387.1 148.5l-1.4 4.5M351.8 186.7l-9.2 38.2M290 369l-1.6 4.8M268.9 418.3l-1.6 5.2M141.1 635.4l-18.6 74M427.6 67.1l-3.9 15.1M424.2 27.9l-22.4 82.3M171.6 123.2l-13.1 44.3M135.9 199.5l-8.4 26.9M205.6 426.8l-0.8 3.4M78.6 663.1l-9.3 30.9M143.1 600.5l-13.3 40.7M167.2 169.9l-1.5 4.6M375 129.8l-10.8 36.1M121.2 222.5l-5.7 17.7M162.3 539.9l-20 63.4M201 96.5l-1.6 5M192.9 508.9l-5.5 17.8M225.9 460.4l-8.8 29.3M141 248.2l-2.1 7.3M306.5 232l-5.4 19.8M301.6 258l-17.3 54.8M336.5 231.2l-2.6 8.7M122.4 685.3l-4.7 15M210 425.6l-15.7 56.1M330.2 261l-12.9 41.3M176.1 104l-18 69.3M132.6 685.2l-1.4 5M109.9 649.8l-3.2 12.2M313.5 255.8l-4.5 14.1M419.2 102.9l-1.5 4.6M93.1 306.8l-3.8 14.6M199.4 510.4l-1.7 5.3M252.7 430.8l-1.4 5M142.5 207.3l-22.2 75.3M182.7 543.7l-13 52.6"/>
<path stroke="url(#bg)" stroke-width="1.1" fill="none" d="M-91.3 685.4l-28.3 96.9M-32.7 553.2l-53.6 194.2M17.6 452.9l-24.2 91M-35.2 651.8l-46.4 174.4M-5.9 498.5l-59.6 188.6M49.8 366.1l-29.5 98.5M3.5 521l-46.1 154.2M46.1 434l-51.5 172.3M73.4 408.5l-43.5 161.4M15.5 623.3l-22.3 82.8M110.5 304.8l-25.4 82.4M69 439.6l-23.8 77.4M4.4 649.6l-63 204.8M133.7 299.4l-33.9 130.1M72 535.9l-49.3 189.1M199.7 112.9l-24.6 83.1M137.9 321.8l-16.8 56.6M101.8 443.7l-38.5 129.9M39.9 652.7l-66.2 223.6M223.8 83l-26.2 90.2M159.1 305.5l-48.4 166.4M94.3 528.1l-50.2 172.5M247.1 48.4l-59.7 195.1M152.8 356.6l-63.4 207.4M260.3 49.6l-20.3 69.6M235.3 135l-28.5 97.6M169.9 358.7l-67.1 229.3M80.7 663.7l-50.8 173.7M263.9 89.3l-55.4 192.8M186.8 357.5l-14.9 52M151.6 479.8l-31.9 111M112.1 617l-53.2 185M281.4 72.9l-37.8 125.1M201.9 336l-41.7 138.2M149.9 508.1l-37.2 123.1M285.3 87.4l-50.9 160.2M194.3 373.6l-26 82M134.7 561.5l-32 100.6M314.4 37.4l-41.8 143.3M245.8 272.7l-51.5 176.7M148.6 605.7l-51.1 175.2M333.4 34.5l-45.9 148.5M276.2 219.4l-18.1 58.4M245 320.5l-39.5 127.8M176.3 542.7l-64.5 208.7M338.4 72.1l-14.5 54.2M304.1 200.1l-14.9 55.5M259.7 365.9l-43.9 163.8M335.7 108.7l-68 219.6M219 485.3l-30 96.8M349 119.5l-45.9 141.7M291.2 298.2l-74.4 229.8M389.2 30.5l-39.4 134.6M306.4 313.5l-54.9 187.6M393 58.4l-15.6 51M351.5 194.1l-43.8 143.3M404 47.6l-40.7 145.9M397.6 112.2l-47.8 161.3M420.2 61.8l-22.2 73.9M425.5 91l-27.7 93.3"/>
<path stroke="#b4ffd2" stroke-width="1" fill="none" d="M143.5 590.2l0.6 -2.5l1.2 0M353.4 221l-1 3.5M220 114.1l-1 3.5M275.1 307.1l0.6 -2.5l1.2 0M156.2 238.7l1 -3l1 3M271.5 212.2l1 -3l1 3M165.9 370.3l0.6 -2.5l1.2 0M185.5 173.3l0.6 -2.5l1.2 0M282.5 74.9l0.6 -2.5l1.2 0M88.2 653l1 -3l1 3M412.8 81.4l1 -3l1 3M105.8 468.4l0.6 -2.5l1.2 0M100.2 668.1l0.6 -2.5l1.2 0M75.3 420l-1 3.5M199.7 217l1 -3l1 3M241.7 183l1 -3l1 3M85 636.9l0.6 -2.5l1.2 0M195 328l-1 3.5M259.8 411.1l-1 3.5M256.2 49.8l-1 3.5M322.5 273.5l0.6 -2.5l1.2 0M126.4 402.9l1 -3l1 3M195.1 244.3l-1 3.5M398.7 137.3l0.6 -2.5l1.2 0M318.6 204.2l-1 3.5M133.1 305.6l1 -3l1 3M259.7 103l1 -3l1 3M234.3 266.9l0.6 -2.5l1.2 0M204.3 323.8l-1 3.5M192.4 449.6l-1 3.5M412 97.5l0.6 -2.5l1.2 0M253.7 182l1 -3l1 3M191.5 235l0.6 -2.5l1.2 0M148.1 377.1l0.6 -2.5l1.2 0M160.8 424.8l0.6 -2.5l1.2 0M320.2 160.8l0.6 -2.5l1.2 0M70.5 689.5l1 -3l1 3M262.9 257.1l0.6 -2.5l1.2 0M92.2 402l0.6 -2.5l1.2 0M79.5 388.8l-1 3.5M241.3 201.9l-1 3.5M308.8 269.4l0.6 -2.5l1.2 0M89.3 652.9l0.6 -2.5l1.2 0M163 582.6l1 -3l1 3M262.6 48.4l-1 3.5M379.6 66.5l-1 3.5M123.1 677.8l-1 3.5M291.8 185.6l1 -3l1 3M311.2 168.7l-1 3.5M319.3 106.3l1 -3l1 3M106 395.2l0.6 -2.5l1.2 0M301.9 264.4l-1 3.5M328.2 64.8l1 -3l1 3M382.7 58.8l1 -3l1 3M248.6 328.4l1 -3l1 3M296.6 285.6l0.6 -2.5l1.2 0M93.8 328.1l0.6 -2.5l1.2 0M210.6 378.6l1 -3l1 3M285.6 123l-1 3.5M196 201.2l0.6 -2.5l1.2 0M270.2 110.7l0.6 -2.5l1.2 0M90.2 610l0.6 -2.5l1.2 0M224.9 440.2l-1 3.5M258.9 149.5l0.6 -2.5l1.2 0M310.2 82.7l1 -3l1 3M199.5 224.3l0.6 -2.5l1.2 0M219.2 252.2l0.6 -2.5l1.2 0M351.7 189.7l-1 3.5M136.3 506.1l0.6 -2.5l1.2 0M185.9 176.3l-1 3.5M250.7 56l1 -3l1 3M257 236l1 -3l1 3M127 545.9l1 -3l1 3M321.5 127.3l0.6 -2.5l1.2 0M276.9 217l-1 3.5M376.9 86.8l0.6 -2.5l1.2 0M214 398.9l0.6 -2.5l1.2 0M308.1 163.3l0.6 -2.5l1.2 0M101.7 555.5l-1 3.5M224.4 404l0.6 -2.5l1.2 0M172 235.4l-1 3.5M98.8 665.1l0.6 -2.5l1.2 0M272.5 373l1 -3l1 3M137.7 640.3l0.6 -2.5l1.2 0M81.4 659.9l1 -3l1 3M265.7 108.9l-1 3.5M223.3 308.5l1 -3l1 3M123 285.2l-1 3.5M152.1 264.3l0.6 -2.5l1.2 0M269.6 92.6l-1 3.5M404.4 101.5l1 -3l1 3M223.1 321.2l0.6 -2.5l1.2 0M141 261.9l0.6 -2.5l1.2 0M170.1 352l-1 3.5M204.8 456.8l1 -3l1 3M254.5 214.7l-1 3.5M294.4 100.4l0.6 -2.5l1.2 0M164.2 415.7l1 -3l1 3M244.1 439.9l-1 3.5M179 334.5l0.6 -2.5l1.2 0M281.9 164.6l0.6 -2.5l1.2 0M340.9 193.6l1 -3l1 3M301.7 68.9l1 -3l1 3M122.4 688.2l1 -3l1 3M325.2 77.1l1 -3l1 3M228.1 365.1l-1 3.5M73.1 658.3l0.6 -2.5l1.2 0M84.4 678.8l1 -3l1 3M180.8 423.1l1 -3l1 3M246.2 201.6l-1 3.5M342.6 132.9l1 -3l1 3M205 374.3l0.6 -2.5l1.2 0M128.3 360.3l0.6 -2.5l1.2 0M127.3 686.5l1 -3l1 3M134.9 342.7l0.6 -2.5l1.2 0M194.7 466l-1 3.5M173.9 218.1l1 -3l1 3M241.3 271.7l0.6 -2.5l1.2 0M167.5 456.6l1 -3l1 3M285.3 227l1 -3l1 3M166.8 537.2l-1 3.5M289.8 96l-1 3.5M140.6 273.9l-1 3.5M125.6 384.2l0.6 -2.5l1.2 0M123.5 349.4l-1 3.5M124.7 507.1l1 -3l1 3M310.9 318.1l-1 3.5M105.3 532.1l1 -3l1 3M106.3 442.7l0.6 -2.5l1.2 0M161 278.4l-1 3.5M223.2 297.9l0.6 -2.5l1.2 0M201.7 233.9l-1 3.5M353.1 208.5l-1 3.5M392 101.6l0.6 -2.5l1.2 0M73.1 462.8l0.6 -2.5l1.2 0M95 384.8l-1 3.5M227 110.8l1 -3l1 3M261.5 119.3l-1 3.5M106.4 538.3l-1 3.5M114.7 513.7l0.6 -2.5l1.2 0M245.6 87.8l-1 3.5M337.7 146.2l0.6 -2.5l1.2 0M319.9 81.9l1 -3l1 3M313.9 141.8l0.6 -2.5l1.2 0M118.2 542.9l-1 3.5M275.8 161l1 -3l1 3M309.6 296l-1 3.5M285.8 90.7l0.6 -2.5l1.2 0M163.2 560.7l0.6 -2.5l1.2 0M258.4 47.6l-1 3.5M169.2 526.7l1 -3l1 3M158.9 544.9l-1 3.5M238.3 107.7l1 -3l1 3M106.9 458.5l-1 3.5M239.2 318.3l1 -3l1 3M102.6 680l-1 3.5M102.9 413.6l-1 3.5M107.3 376.1l0.6 -2.5l1.2 0M105.4 676.3l0.6 -2.5l1.2 0M278.1 86.9l0.6 -2.5l1.2 0M255.9 354.8l-1 3.5M196 460.5l1 -3l1 3M260 178.6l0.6 -2.5l1.2 0M160.8 414l0.6 -2.5l1.2 0M283.3 246l-1 3.5M185.8 492.1l1 -3l1 3M157.5 221.9l-1 3.5M336.1 251.5l1 -3l1 3M281.2 195l1 -3l1 3M221.5 113.9l-1 3.5M214.1 307.3l1 -3l1 3M281.6 329.9l-1 3.5M122 561.1l0.6 -2.5l1.2 0M75.2 625.9l1 -3l1 3M238.2 204.7l-1 3.5M124.9 276.7l1 -3l1 3M301.5 162.3l0.6 -2.5l1.2 0M125.3 487.4l1 -3l1 3M293.3 309.8l-1 3.5M415.3 46.6l0.6 -2.5l1.2 0M208 364.1l1 -3l1 3M101 303.6l1 -3l1 3M78.3 526.8l0.6 -2.5l1.2 0M181.4 266.3l1 -3l1 3M294.6 179.1l-1 3.5M201.9 224.2l-1 3.5M116.8 621.8l1 -3l1 3M155.6 540.8l0.6 -2.5l1.2 0M134.9 473.6l-1 3.5M308.5 84.2l-1 3.5M344.3 182.2l1 -3l1 3M187.6 281.1l-1 3.5M199 313.5l0.6 -2.5l1.2 0M165.5 228.8l0.6 -2.5l1.2 0M106.1 294.7l-1 3.5M255.5 337.4l1 -3l1 3M169.4 488.2l1 -3l1 3M92.7 433.3l0.6 -2.5l1.2 0M75 500.3l0.6 -2.5l1.2 0M255.3 170.3l1 -3l1 3M281.9 161.5l0.6 -2.5l1.2 0M280.8 284.9l-1 3.5M207.7 329.2l-1 3.5M255.4 360.1l-1 3.5M290.9 70.5l0.6 -2.5l1.2 0M214.8 398.2l0.6 -2.5l1.2 0M304.9 160.4l0.6 -2.5l1.2 0M71.6 479.7l1 -3l1 3M361.9 198.6l-1 3.5M229.7 392.1l-1 3.5M222.1 476.1l1 -3l1 3M246.9 163.6l0.6 -2.5l1.2 0M414.1 71.6l-1 3.5M228.6 350l0.6 -2.5l1.2 0M169.4 300.7l-1 3.5M270.6 295.7l1 -3l1 3M100.2 374.7l-1 3.5M88.8 432.4l0.6 -2.5l1.2 0M269.4 74.1l0.6 -2.5l1.2 0M90.6 339.6l-1 3.5M124.7 650l0.6 -2.5l1.2 0M141.7 233.1l0.6 -2.5l1.2 0M289.5 272.5l1 -3l1 3M281.5 221.5l1 -3l1 3M79.6 528.4l0.6 -2.5l1.2 0M265.6 205l0.6 -2.5l1.2 0M129.1 683.6l1 -3l1 3M112.2 554.1l1 -3l1 3M106.2 383.6l-1 3.5M383.5 110l-1 3.5M154.7 256.7l-1 3.5M139.3 449.3l0.6 -2.5l1.2 0M338.4 142.3l0.6 -2.5l1.2 0M328.2 258.9l-1 3.5M311.5 235.7l0.6 -2.5l1.2 0M178.6 378.6l0.6 -2.5l1.2 0M256.3 80.2l-1 3.5M102.6 451.4l0.6 -2.5l1.2 0M171.3 482.9l0.6 -2.5l1.2 0M225.3 407.6l1 -3l1 3M132.6 599.6l-1 3.5M307.6 165.1l-1 3.5M296.7 114.3l1 -3l1 3M304.3 308.7l0.6 -2.5l1.2 0M174.6 447.2l-1 3.5M160.1 467.5l0.6 -2.5l1.2 0M349.9 119.5l1 -3l1 3M118.5 643.2l0.6 -2.5l1.2 0M123.2 407.8l0.6 -2.5l1.2 0M118 633.3l1 -3l1 3M307.9 149l-1 3.5M398.2 46.6l0.6 -2.5l1.2 0M288.7 165l-1 3.5M406.3 134.3l0.6 -2.5l1.2 0M85.4 450.3l0.6 -2.5l1.2 0M286.8 312.8l1 -3l1 3M185 472.4l-1 3.5M257.9 403.7l0.6 -2.5l1.2 0M304.2 208.7l-1 3.5M134.5 501.8l0.6 -2.5l1.2 0M89 596.8l-1 3.5M112.9 479.8l1 -3l1 3M325.6 282.9l-1 3.5M245.6 194.1l0.6 -2.5l1.2 0M243.1 154.3l-1 3.5M156.9 463l0.6 -2.5l1.2 0M132.2 412.4l0.6 -2.5l1.2 0M311.2 235.2l-1 3.5M144.7 418.7l-1 3.5M134.7 588.5l0.6 -2.5l1.2 0M153.7 328.4l-1 3.5M207.8 447.5l-1 3.5M277 223.7l-1 3.5M129.3 655.3l0.6 -2.5l1.2 0M118.7 602l1 -3l1 3M159.4 424.1l-1 3.5M445.7 67l0.6 -2.5l1.2 0M386.1 149l0.6 -2.5l1.2 0M155.6 594.8l1 -3l1 3M124 628.6l0.6 -2.5l1.2 0M277 144.5l1 -3l1 3M212.5 261.7l1 -3l1 3M135.7 389.8l1 -3l1 3M105.5 310.7l0.6 -2.5l1.2 0M101.6 642.3l0.6 -2.5l1.2 0M226.4 279.9l0.6 -2.5l1.2 0M117.1 441l0.6 -2.5l1.2 0M96.7 328.3l-1 3.5M388.1 102.2l0.6 -2.5l1.2 0M141.4 393.2l1 -3l1 3M88.8 386.3l1 -3l1 3M340.4 226l0.6 -2.5l1.2 0M334.6 218.6l-1 3.5M380.2 106.5l1 -3l1 3M147.8 407.7l0.6 -2.5l1.2 0M123.6 476.9l0.6 -2.5l1.2 0M254.5 128.2l-1 3.5M207.9 176.5l-1 3.5M250.4 402.7l0.6 -2.5l1.2 0M167.7 234.5l1 -3l1 3M262.8 111.9l-1 3.5M176.1 186.5l0.6 -2.5l1.2 0M115.9 469.4l-1 3.5M309.5 308.3l0.6 -2.5l1.2 0M186.3 360l-1 3.5M122 657.5l1 -3l1 3M304.8 168.5l-1 3.5M297.6 85.6l1 -3l1 3M95.7 523.6l-1 3.5M157.6 517.2l0.6 -2.5l1.2 0M383.2 102.1l0.6 -2.5l1.2 0M181.6 282.1l-1 3.5M314.4 204.8l-1 3.5M90.7 393.4l-1 3.5M176.7 501.7l-1 3.5M285.3 269.7l1 -3l1 3M354 115.1l0.6 -2.5l1.2 0M199.9 241.4l-1 3.5M193.9 311.9l0.6 -2.5l1.2 0M172.5 530.2l0.6 -2.5l1.2 0M226.6 119.1l0.6 -2.5l1.2 0M432 87l-1 3.5M181 194.3l0.6 -2.5l1.2 0M193.6 208.9l-1 3.5M216.7 291.7l1 -3l1 3M204 381.5l0.6 -2.5l1.2 0M329.3 158.9l1 -3l1 3M337.9 66.7l1 -3l1 3M128.2 436.3l1 -3l1 3M178.3 401.2l-1 3.5M159.4 495.1l-1 3.5M126.7 363.8l1 -3l1 3M113.6 445.3l-1 3.5M445.3 63.8l1 -3l1 3M104.1 598.3l0.6 -2.5l1.2 0M234.8 358.1l0.6 -2.5l1.2 0M169.9 223.1l0.6 -2.5l1.2 0M201.9 271.7l0.6 -2.5l1.2 0M253.8 148l1 -3l1 3M242.3 328.8l0.6 -2.5l1.2 0M413.9 121.9l0.6 -2.5l1.2 0M125.6 617l1 -3l1 3M349.2 138.4l0.6 -2.5l1.2 0M321.1 267.6l0.6 -2.5l1.2 0M335.2 182.5l1 -3l1 3M249.6 379.2l0.6 -2.5l1.2 0M204.2 157.8l1 -3l1 3M90 335.9l1 -3l1 3M176.6 432.4l-1 3.5M403.8 80.7l1 -3l1 3M139.7 467l-1 3.5M167.2 248.9l0.6 -2.5l1.2 0M86.3 485.3l1 -3l1 3M223 200.1l0.6 -2.5l1.2 0M175.2 430l1 -3l1 3M303.6 90.8l-1 3.5M208.2 120.8l-1 3.5M150.1 556l0.6 -2.5l1.2 0M127 423.9l-1 3.5M358.9 98.8l0.6 -2.5l1.2 0M279.7 137.9l0.6 -2.5l1.2 0M341.1 215.1l1 -3l1 3M154.5 518.4l1 -3l1 3M272.9 137.8l0.6 -2.5l1.2 0M86.3 460.9l0.6 -2.5l1.2 0M78.5 545.2l-1 3.5M93.1 524.9l1 -3l1 3M188.8 519.7l1 -3l1 3M157 505.2l-1 3.5M354.6 112.7l0.6 -2.5l1.2 0M409.5 87.7l0.6 -2.5l1.2 0M144.8 569.4l1 -3l1 3M79.2 513.1l1 -3l1 3M77.8 552.8l1 -3l1 3M247.8 272.8l1 -3l1 3M372.8 86.1l-1 3.5M230.3 461.9l0.6 -2.5l1.2 0M104.9 335.1l1 -3l1 3M225.7 146.7l0.6 -2.5l1.2 0M168.6 288.7l0.6 -2.5l1.2 0M107.4 526.1l-1 3.5M397.5 82l0.6 -2.5l1.2 0M83.9 551.5l-1 3.5M178 225l0.6 -2.5l1.2 0M257.2 333.8l-1 3.5M138.4 480.7l-1 3.5M120.9 472.2l-1 3.5M147.2 457.1l1 -3l1 3M212.9 166.8l0.6 -2.5l1.2 0M193.5 275l-1 3.5M306.6 261.2l0.6 -2.5l1.2 0M152.2 321.4l1 -3l1 3M301.9 77.2l0.6 -2.5l1.2 0M331.4 217.8l-1 3.5M210.2 393.4l1 -3l1 3M188.5 250.1l-1 3.5M136.6 486.8l-1 3.5M128.1 289.6l1 -3l1 3M205.7 450.1l0.6 -2.5l1.2 0M84.5 626.5l1 -3l1 3M230.6 314.4l0.6 -2.5l1.2 0M100.7 510.3l1 -3l1 3M225.1 321.3l1 -3l1 3M81.1 541l-1 3.5M247.7 333.2l0.6 -2.5l1.2 0M121.1 582.4l-1 3.5M198.3 482.7l0.6 -2.5l1.2 0M164.8 339.8l1 -3l1 3M110.2 537.9l1 -3l1 3M284.2 318.5l1 -3l1 3M318.1 114.1l1 -3l1 3M144.8 573.2l1 -3l1 3M93 565.1l0.6 -2.5l1.2 0M90.1 390.7l0.6 -2.5l1.2 0M203.9 479.8l-1 3.5M234.7 209.2l1 -3l1 3M418.1 71.9l-1 3.5M193.9 399.9l0.6 -2.5l1.2 0M125.4 333.5l-1 3.5M166.9 484.2l-1 3.5M232 220.1l1 -3l1 3M241.2 334.8l1 -3l1 3M254.8 62.3l-1 3.5M145.2 630.8l1 -3l1 3M99.6 548.3l-1 3.5M201.8 412.9l1 -3l1 3M295.8 87.4l1 -3l1 3M104.2 477.3l0.6 -2.5l1.2 0M308 129.7l-1 3.5M199.3 344.3l-1 3.5M130.3 535.7l1 -3l1 3M120.3 638.8l1 -3l1 3M164 243.9l1 -3l1 3M125.7 571l1 -3l1 3M131.2 293l1 -3l1 3M194.7 519.3l-1 3.5M205.2 233.9l-1 3.5M192.2 383.4l-1 3.5M152.9 248.5l1 -3l1 3M125.3 379.3l-1 3.5M166 201.3l0.6 -2.5l1.2 0M251.6 237.9l0.6 -2.5l1.2 0M99.3 643.4l1 -3l1 3M287.2 289.2l0.6 -2.5l1.2 0M327.6 256.8l1 -3l1 3M143.6 630.8l-1 3.5M98.6 529.5l0.6 -2.5l1.2 0M398.9 82.8l1 -3l1 3M99.7 409.1l-1 3.5M91.7 603.1l0.6 -2.5l1.2 0M145.1 500.7l0.6 -2.5l1.2 0M73.9 390.8l1 -3l1 3M314.5 293.8l1 -3l1 3M335.4 157.7l0.6 -2.5l1.2 0M110.6 463l1 -3l1 3M216 384.3l1 -3l1 3M372 86.9l1 -3l1 3M86.9 638.1l0.6 -2.5l1.2 0M257.9 376.9l-1 3.5M238.2 182.1l0.6 -2.5l1.2 0M149 411.4l-1 3.5M145.8 381.1l0.6 -2.5l1.2 0M188.1 260.6l0.6 -2.5l1.2 0M300.1 232.9l1 -3l1 3M136.6 587.3l0.6 -2.5l1.2 0M91.2 402.9l1 -3l1 3M187.6 330.8l1 -3l1 3M181.7 416l1 -3l1 3M163.6 256.5l-1 3.5M108.1 655.5l1 -3l1 3M104.8 384.6l1 -3l1 3M338.6 79.5l-1 3.5M152 444.6l1 -3l1 3M140.7 344.3l1 -3l1 3M117.8 410.2l1 -3l1 3M192.7 348.6l0.6 -2.5l1.2 0M95.8 615.5l0.6 -2.5l1.2 0M158.9 306.8l-1 3.5M78.1 679.8l0.6 -2.5l1.2 0M109.6 299.7l0.6 -2.5l1.2 0M247.5 428.2l1 -3l1 3M101.3 499.3l-1 3.5M295.3 343.4l1 -3l1 3M410.6 111l1 -3l1 3M168.2 559.7l0.6 -2.5l1.2 0M194.2 182.8l-1 3.5M137 260.5l-1 3.5M112.3 413.1l-1 3.5M338.8 66.6l1 -3l1 3M127.1 687.3l1 -3l1 3M112.5 328.1l1 -3l1 3M236.1 184.8l-1 3.5M93.6 681.4l0.6 -2.5l1.2 0M302.6 64l-1 3.5M226.4 425.2l0.6 -2.5l1.2 0M140.5 495.6l-1 3.5M102.5 509.4l1 -3l1 3M131.8 518.5l1 -3l1 3M102 666.8l0.6 -2.5l1.2 0M295.7 235.4l0.6 -2.5l1.2 0M435.9 83.5l1 -3l1 3M309.4 241.2l-1 3.5M280.5 225.8l1 -3l1 3M333.5 134.9l-1 3.5M239.6 338.8l0.6 -2.5l1.2 0M258.1 157l-1 3.5M145.4 236.5l0.6 -2.5l1.2 0M291.1 326.9l1 -3l1 3M200.7 353.2l1 -3l1 3M151.9 252.5l-1 3.5M279.8 329.1l0.6 -2.5l1.2 0M89.1 369.7l1 -3l1 3M242.5 162.9l1 -3l1 3M105 657.3l-1 3.5M200.5 199.6l-1 3.5M435 54.4l1 -3l1 3M213.6 249.5l-1 3.5M114.8 624.6l0.6 -2.5l1.2 0M228 233.9l1 -3l1 3M142.9 329l0.6 -2.5l1.2 0M242.2 314.4l1 -3l1 3M118.6 667l0.6 -2.5l1.2 0M340.6 101l1 -3l1 3M194 242.8l-1 3.5M252.8 98.2l1 -3l1 3M261.7 414.6l0.6 -2.5l1.2 0M162.6 369.7l1 -3l1 3M271.8 148.3l1 -3l1 3M171.9 372.4l0.6 -2.5l1.2 0M333.6 268.3l-1 3.5M95.7 328.2l1 -3l1 3M300.4 317.4l1 -3l1 3M197.6 214.1l0.6 -2.5l1.2 0M138.2 351.9l-1 3.5M182.3 412.1l0.6 -2.5l1.2 0M408.4 105l0.6 -2.5l1.2 0M123.6 355.1l0.6 -2.5l1.2 0M355.1 130.9l-1 3.5M421.9 75.2l1 -3l1 3M248.3 112.3l-1 3.5M305.1 124.8l1 -3l1 3M243.6 269.3l-1 3.5M329 264.1l0.6 -2.5l1.2 0M189.6 276.8l-1 3.5M287.6 368.6l-1 3.5M154.4 518.6l0.6 -2.5l1.2 0M76.1 526.9l1 -3l1 3M84.6 599.9l-1 3.5M117.7 681.4l1 -3l1 3M413.8 111.7l1 -3l1 3M198.5 267.5l0.6 -2.5l1.2 0M411.9 53.8l-1 3.5M84.6 398.2l-1 3.5M212.3 304.4l1 -3l1 3M88.2 589.6l-1 3.5M143.4 550.2l-1 3.5M366.9 126.7l1 -3l1 3M241.2 371.5l1 -3l1 3M358 112.7l0.6 -2.5l1.2 0M196.4 139.7l0.6 -2.5l1.2 0M220.4 278.5l0.6 -2.5l1.2 0M129.3 676.7l0.6 -2.5l1.2 0M106.9 366.5l1 -3l1 3M292.7 84.2l1 -3l1 3M372.8 121.6l-1 3.5M241.3 212l1 -3l1 3M131.4 483.5l-1 3.5M207.9 489.7l1 -3l1 3M298.4 45.7l-1 3.5M269.3 326.3l0.6 -2.5l1.2 0M181.2 480.4l1 -3l1 3M331 215.1l0.6 -2.5l1.2 0M96.3 676.7l1 -3l1 3M157.9 586l0.6 -2.5l1.2 0M219.8 393.2l-1 3.5M100.1 573.5l0.6 -2.5l1.2 0M154.4 353.6l-1 3.5M234.4 185.4l-1 3.5M197.8 395.8l1 -3l1 3M156.3 592.1l-1 3.5M142.4 426.8l1 -3l1 3M138.5 427.3l1 -3l1 3M269.3 264.6l0.6 -2.5l1.2 0M290.7 144.6l-1 3.5M93.2 687.1l-1 3.5M197.8 425l-1 3.5M420.2 74.8l0.6 -2.5l1.2 0M110.2 684.5l0.6 -2.5l1.2 0M87.9 562l0.6 -2.5l1.2 0M158.7 564.3l0.6 -2.5l1.2 0M372.9 173l0.6 -2.5l1.2 0M359.1 94.1l-1 3.5M217.6 346l0.6 -2.5l1.2 0M230.1 390.3l1 -3l1 3M129 420l0.6 -2.5l1.2 0M223.8 219.2l0.6 -2.5l1.2 0M90 614.7l-1 3.5M243.4 254.5l-1 3.5M276 190.2l1 -3l1 3M276.7 161.4l0.6 -2.5l1.2 0M268.5 74.3l0.6 -2.5l1.2 0M151.5 335.6l-1 3.5M151.6 400.4l0.6 -2.5l1.2 0M361.6 166.8l0.6 -2.5l1.2 0M205 216.1l0.6 -2.5l1.2 0M99.3 595.4l-1 3.5M77.2 619.6l1 -3l1 3M212.4 132.4l0.6 -2.5l1.2 0M91.4 660.2l1 -3l1 3M94.7 382l0.6 -2.5l1.2 0M189.5 250.2l1 -3l1 3M177.2 203l0.6 -2.5l1.2 0M293.3 70.6l-1 3.5M332.1 63.4l-1 3.5M281.7 200.8l-1 3.5M144.5 315.9l1 -3l1 3M144.3 505.2l-1 3.5M228.9 334.7l0.6 -2.5l1.2 0M255 236.1l0.6 -2.5l1.2 0M253 259.8l1 -3l1 3M106.9 507.3l1 -3l1 3M288.8 305.9l-1 3.5M264.8 170.7l-1 3.5M169.9 269.7l-1 3.5M329.8 194l-1 3.5M98.7 433.3l1 -3l1 3M306.3 270.4l-1 3.5M279.1 279.1l-1 3.5M267.9 63.1l0.6 -2.5l1.2 0M264.1 360l0.6 -2.5l1.2 0M189.1 436l-1 3.5M330.5 246.5l0.6 -2.5l1.2 0M165.8 443.8l-1 3.5M220.3 152.6l0.6 -2.5l1.2 0M247.1 177.3l0.6 -2.5l1.2 0M102 609.5l-1 3.5M114.5 286.3l1 -3l1 3M330.7 167.2l-1 3.5M256.1 263.4l-1 3.5M163.5 476.1l0.6 -2.5l1.2 0M290.3 202.6l1 -3l1 3M115.7 657.7l0.6 -2.5l1.2 0M72.1 607.4l-1 3.5M159 313.1l1 -3l1 3M195.4 350.1l1 -3l1 3M154.5 405.3l1 -3l1 3M202.9 498.4l-1 3.5M156.4 420.8l1 -3l1 3M257.3 133l1 -3l1 3M148.1 602.8l0.6 -2.5l1.2 0M295.8 313.5l-1 3.5M133.4 527.3l1 -3l1 3M126.3 490.8l-1 3.5M165.8 300l0.6 -2.5l1.2 0M196 275.6l-1 3.5M144.7 614.7l0.6 -2.5l1.2 0M247.6 86.5l0.6 -2.5l1.2 0M216.9 265.6l0.6 -2.5l1.2 0M333 265l0.6 -2.5l1.2 0M127.3 315l0.6 -2.5l1.2 0M244.7 185.5l0.6 -2.5l1.2 0M204.4 345.4l-1 3.5M178.9 232.1l0.6 -2.5l1.2 0M114.6 582.3l1 -3l1 3M304.4 309.1l-1 3.5M71.3 405.8l1 -3l1 3M96.3 449.1l-1 3.5M122.2 484.6l-1 3.5M301.1 123.4l1 -3l1 3M136.7 545.6l-1 3.5M340 71.6l0.6 -2.5l1.2 0M379.3 138.6l-1 3.5M292.5 160.2l-1 3.5M187.9 227.7l0.6 -2.5l1.2 0M164.5 284.3l0.6 -2.5l1.2 0M185.3 296.7l0.6 -2.5l1.2 0M150.9 301.9l0.6 -2.5l1.2 0M324.1 117.8l-1 3.5M205 501l1 -3l1 3M409.4 107.2l-1 3.5M93.2 571.8l0.6 -2.5l1.2 0M179 518.6l-1 3.5M360.3 178.2l1 -3l1 3M139.7 362.6l-1 3.5M79.6 506.9l1 -3l1 3M158.9 591.5l-1 3.5M321.8 147.9l0.6 -2.5l1.2 0M270.6 192.5l-1 3.5M386.5 154.1l-1 3.5M240.1 73.5l-1 3.5M118.1 576.1l0.6 -2.5l1.2 0M280.4 230.9l1 -3l1 3M313.6 62.4l0.6 -2.5l1.2 0M236.4 210.2l1 -3l1 3M257.5 273.8l1 -3l1 3M80 560.4l1 -3l1 3M184.4 531.9l0.6 -2.5l1.2 0M364.3 152.6l1 -3l1 3M135.7 334l-1 3.5M182.1 458.7l-1 3.5M71.6 625.8l-1 3.5M70.7 374.3l0.6 -2.5l1.2 0M72.2 529l-1 3.5M215.6 342.1l-1 3.5M268.5 217.4l0.6 -2.5l1.2 0M156 280.2l0.6 -2.5l1.2 0M171.1 438.6l0.6 -2.5l1.2 0M181.4 482l1 -3l1 3M192.5 246.4l1 -3l1 3M138.9 603.5l-1 3.5M390.5 71.2l1 -3l1 3M99.2 662l-1 3.5M133 481.5l0.6 -2.5l1.2 0M305.2 205.5l0.6 -2.5l1.2 0M321.7 112.2l0.6 -2.5l1.2 0M173.8 239.1l0.6 -2.5l1.2 0M118 588.6l0.6 -2.5l1.2 0M189.7 185.7l-1 3.5M304.4 123l-1 3.5M132.7 345l0.6 -2.5l1.2 0M110.9 299.5l0.6 -2.5l1.2 0M80.8 455.7l-1 3.5M146.1 608.9l1 -3l1 3M196.9 400l0.6 -2.5l1.2 0M394.5 75.1l1 -3l1 3M123 388.1l-1 3.5M201.1 474.7l0.6 -2.5l1.2 0M371.3 145.7l-1 3.5M343.9 133.1l-1 3.5M166.9 510.9l1 -3l1 3M287.1 168.1l-1 3.5M214.5 329.1l0.6 -2.5l1.2 0M234.2 425.8l1 -3l1 3M140.5 491.6l0.6 -2.5l1.2 0M193.6 524.7l-1 3.5M285.9 362l0.6 -2.5l1.2 0M109.2 493.1l0.6 -2.5l1.2 0M171.4 407.1l1 -3l1 3M417.5 116.2l1 -3l1 3M338.1 247.2l-1 3.5M250.4 341.3l0.6 -2.5l1.2 0M221.3 463.8l-1 3.5M193.5 292.8l1 -3l1 3M189.4 307l-1 3.5M79.7 631.2l0.6 -2.5l1.2 0M184.6 303l1 -3l1 3M272.6 392.8l1 -3l1 3M284.1 342.4l-1 3.5M109.9 669.8l0.6 -2.5l1.2 0M423.9 78.2l1 -3l1 3M303.5 215.1l0.6 -2.5l1.2 0M125.5 515.9l0.6 -2.5l1.2 0M238.6 277.9l-1 3.5M212.1 280.1l1 -3l1 3M235.8 91.7l1 -3l1 3M381.8 113.1l0.6 -2.5l1.2 0M306.8 324.6l0.6 -2.5l1.2 0M108.1 547.8l-1 3.5M136.4 450.7l1 -3l1 3M99.2 486.9l0.6 -2.5l1.2 0M160 361.6l-1 3.5M154.8 533.7l-1 3.5M345.2 247.4l-1 3.5M234.8 393l0.6 -2.5l1.2 0M245.2 161.3l-1 3.5M295.7 115.8l-1 3.5M239.3 395.5l-1 3.5M172 268.4l0.6 -2.5l1.2 0M256.3 334.9l0.6 -2.5l1.2 0M203.4 322.3l0.6 -2.5l1.2 0M199.6 347.6l1 -3l1 3M201.5 242l0.6 -2.5l1.2 0M293.7 352.6l0.6 -2.5l1.2 0M102.7 636.2l-1 3.5M77.8 363.8l0.6 -2.5l1.2 0M71.1 543.2l-1 3.5M140.1 264.8l-1 3.5M265.7 355.1l1 -3l1 3M172.6 307.5l-1 3.5M184.2 285.5l-1 3.5M376.7 134.3l-1 3.5M150.6 397.2l1 -3l1 3M250.2 350.1l0.6 -2.5l1.2 0M333.1 129.7l-1 3.5M105.4 509.2l1 -3l1 3M115.8 307.4l-1 3.5M119.2 627.3l0.6 -2.5l1.2 0M240.1 306.9l0.6 -2.5l1.2 0M134.7 278.7l0.6 -2.5l1.2 0M313 214.6l0.6 -2.5l1.2 0M158.1 361l1 -3l1 3M453.9 50.6l1 -3l1 3M110.9 459.3l1 -3l1 3M318.3 240.7l1 -3l1 3M142.3 371.9l-1 3.5M367.1 132l1 -3l1 3M212.9 406.5l-1 3.5M217.5 110.8l1 -3l1 3M79.2 569.3l0.6 -2.5l1.2 0M106.4 517.4l-1 3.5M183.8 437l1 -3l1 3M221.3 349.7l-1 3.5M119.7 676.7l1 -3l1 3M167 336.6l-1 3.5M142 359.9l1 -3l1 3M120.1 599.1l-1 3.5M411.9 111.1l1 -3l1 3M233 292.8l-1 3.5M341.3 162.3l0.6 -2.5l1.2 0M271 252.6l0.6 -2.5l1.2 0M93 405l-1 3.5M182.8 209.4l-1 3.5M366.4 66.6l0.6 -2.5l1.2 0M269.3 64.9l0.6 -2.5l1.2 0M283.9 206.7l1 -3l1 3M321 300.4l0.6 -2.5l1.2 0M189.6 168.4l1 -3l1 3M149.1 547.8l1 -3l1 3M116.5 389.4l0.6 -2.5l1.2 0M115.8 327.2l1 -3l1 3M434.7 86.5l-1 3.5M285.2 112.4l0.6 -2.5l1.2 0M375.6 139.4l0.6 -2.5l1.2 0M412.9 74.6l0.6 -2.5l1.2 0M136.1 346.9l-1 3.5M211.7 170.4l0.6 -2.5l1.2 0M235.5 238l1 -3l1 3M158.2 400.3l0.6 -2.5l1.2 0M306.6 64.3l1 -3l1 3M91.6 569.8l0.6 -2.5l1.2 0M200.9 489.9l0.6 -2.5l1.2 0M129 337.3l0.6 -2.5l1.2 0M177.8 553.2l0.6 -2.5l1.2 0M131.9 604.5l-1 3.5M384 57.7l0.6 -2.5l1.2 0M225.7 310l1 -3l1 3M97.7 439.1l0.6 -2.5l1.2 0M83.6 627.1l1 -3l1 3M150.7 549.2l-1 3.5M330.2 74.4l-1 3.5M162.1 202.3l-1 3.5M187.8 167.6l-1 3.5M207.1 215.1l-1 3.5M183.5 490.8l0.6 -2.5l1.2 0M361.9 173.1l-1 3.5M206.6 324.5l1 -3l1 3M117.7 528.5l0.6 -2.5l1.2 0M211.2 368l-1 3.5M173.4 526.7l0.6 -2.5l1.2 0M172 276.6l-1 3.5M274.1 251.7l0.6 -2.5l1.2 0M118.6 414.2l0.6 -2.5l1.2 0M279.2 310.6l-1 3.5M140.2 341.3l0.6 -2.5l1.2 0M417.8 53.5l1 -3l1 3M137.3 370.5l-1 3.5M229.6 300.7l-1 3.5M341.2 144.3l-1 3.5M235.3 323.7l-1 3.5M335.8 134l1 -3l1 3M373.3 50.7l-1 3.5M358.6 168.8l1 -3l1 3M391 86.3l-1 3.5M240.7 215.8l1 -3l1 3M107.5 667.4l-1 3.5M96.8 386.1l-1 3.5M194.5 451.2l-1 3.5M435.3 75.7l0.6 -2.5l1.2 0M235.4 306.8l1 -3l1 3M220.1 115.5l1 -3l1 3M114.7 593l-1 3.5M72.3 462.2l1 -3l1 3M178.5 234.5l0.6 -2.5l1.2 0M196.1 242.6l1 -3l1 3M110.9 320.7l1 -3l1 3M381.2 60.4l1 -3l1 3M87.1 599.6l-1 3.5M200.2 201.7l-1 3.5M74.4 359l-1 3.5M262 303.7l1 -3l1 3M132 634.7l0.6 -2.5l1.2 0M80.4 444.6l-1 3.5M361.1 76.1l0.6 -2.5l1.2 0M263.1 394.9l0.6 -2.5l1.2 0M87.1 465.8l1 -3l1 3M360.7 57.1l1 -3l1 3M201.3 412l-1 3.5M235.6 293.2l0.6 -2.5l1.2 0M85.4 519.3l-1 3.5M193.3 516.5l1 -3l1 3M92.4 440.4l-1 3.5M133 332l1 -3l1 3M127 312.8l1 -3l1 3M325.6 258.8l-1 3.5M139.8 283.2l-1 3.5M307 70.6l-1 3.5M190.7 333.4l1 -3l1 3M255.6 390.7l0.6 -2.5l1.2 0M97.8 654.4l1 -3l1 3M264.8 90l-1 3.5M112.2 440.7l-1 3.5M394.3 66.4l0.6 -2.5l1.2 0M188.1 423.6l1 -3l1 3M188 328.6l-1 3.5M117.1 418.2l0.6 -2.5l1.2 0M142.8 274.3l0.6 -2.5l1.2 0M109 389.2l0.6 -2.5l1.2 0M282.9 243.6l-1 3.5M379.7 91.3l-1 3.5M100.6 435.5l0.6 -2.5l1.2 0M233.9 126.7l1 -3l1 3M319.5 90.3l-1 3.5M327.2 219.3l0.6 -2.5l1.2 0M99.2 402.9l-1 3.5M161 274.5l1 -3l1 3M195.5 504.6l-1 3.5M257.6 125.8l0.6 -2.5l1.2 0M371.9 171.9l-1 3.5M219.4 474.5l0.6 -2.5l1.2 0M361.7 119.1l-1 3.5M108.5 685.8l1 -3l1 3M264 412l0.6 -2.5l1.2 0M282.6 112.1l0.6 -2.5l1.2 0M124.3 661l-1 3.5M171.6 264.4l1 -3l1 3M86.9 484.8l-1 3.5M116.4 452.7l-1 3.5M197.6 295l1 -3l1 3M157.4 390.1l0.6 -2.5l1.2 0M115.6 529l-1 3.5M287.4 83.6l-1 3.5M91.6 681.7l0.6 -2.5l1.2 0M318 298.2l1 -3l1 3M314.2 258.2l0.6 -2.5l1.2 0M262.7 330.2l1 -3l1 3M230 461.9l0.6 -2.5l1.2 0M274.9 390.4l0.6 -2.5l1.2 0M349.7 152.1l1 -3l1 3M98.6 431.7l1 -3l1 3M149.6 278.7l1 -3l1 3M81.5 444l1 -3l1 3M280.7 244.3l0.6 -2.5l1.2 0M202.7 341.9l-1 3.5M261.7 84l-1 3.5M253 412.6l0.6 -2.5l1.2 0M245.6 352.3l0.6 -2.5l1.2 0M192.4 265.2l1 -3l1 3M208.7 488l0.6 -2.5l1.2 0M282.7 348.6l-1 3.5M312.7 195.1l0.6 -2.5l1.2 0M173.2 531.1l-1 3.5M381 101.7l-1 3.5M142 376.9l-1 3.5M142.3 424.5l-1 3.5M283.2 53.2l0.6 -2.5l1.2 0M117.6 422.4l0.6 -2.5l1.2 0M127.2 610.9l-1 3.5M196.6 174.7l-1 3.5M125 638.6l0.6 -2.5l1.2 0M209.8 432.2l0.6 -2.5l1.2 0M225 144.4l1 -3l1 3M203.4 206.1l-1 3.5M360.4 212.7l-1 3.5M153.7 286.8l1 -3l1 3M203.3 497.6l1 -3l1 3M245 336.2l0.6 -2.5l1.2 0M291 132.4l-1 3.5M206.7 438.6l0.6 -2.5l1.2 0M310.6 192.7l-1 3.5M264.9 54.4l0.6 -2.5l1.2 0M232.7 405.3l1 -3l1 3M243.2 248.1l1 -3l1 3M290.3 297.3l1 -3l1 3M443.8 45.3l1 -3l1 3M307.1 77.8l0.6 -2.5l1.2 0M245.5 167l1 -3l1 3M201.9 419.3l-1 3.5M303.2 90.4l1 -3l1 3M89.5 374.6l1 -3l1 3M341.7 89.6l1 -3l1 3M171.7 259l0.6 -2.5l1.2 0M282 244.9l1 -3l1 3M313.5 101.7l0.6 -2.5l1.2 0M278.2 101.5l1 -3l1 3M175 180.1l1 -3l1 3M191.5 183.2l-1 3.5M183 307.8l0.6 -2.5l1.2 0M290.5 286.6l1 -3l1 3M256.7 57.7l-1 3.5M122.9 453.1l1 -3l1 3M361.8 90.5l0.6 -2.5l1.2 0M322.3 169.8l0.6 -2.5l1.2 0M239.5 249.1l1 -3l1 3M275 136l-1 3.5M186.7 253.5l1 -3l1 3M249.4 191.6l1 -3l1 3M119.3 612.1l0.6 -2.5l1.2 0M195.7 304.9l1 -3l1 3M275.3 51.4l-1 3.5M167.3 501.9l-1 3.5M389.6 66.8l0.6 -2.5l1.2 0M259 90.8l0.6 -2.5l1.2 0M264.7 51.3l0.6 -2.5l1.2 0M220.3 422.2l-1 3.5M333.5 174l1 -3l1 3M141.3 243.2l0.6 -2.5l1.2 0M215.9 288.9l-1 3.5M247.9 341.8l-1 3.5M177.3 479.6l1 -3l1 3M140.1 445.3l1 -3l1 3M133.9 428.5l1 -3l1 3M235.9 286.1l0.6 -2.5l1.2 0M170.2 233.4l1 -3l1 3M187 521.5l-1 3.5M237.6 440l-1 3.5M236.7 218.2l1 -3l1 3M188.1 215.5l1 -3l1 3M350.4 119.8l1 -3l1 3M365.7 70.2l1 -3l1 3M262.4 339.5l1 -3l1 3M90.7 618.8l1 -3l1 3M211.5 377.3l1 -3l1 3M231.6 99l-1 3.5M258.5 407l-1 3.5M382.7 120.3l1 -3l1 3M93.5 561.8l1 -3l1 3M84.3 379.5l1 -3l1 3M139.6 553l0.6 -2.5l1.2 0M394 50.5l1 -3l1 3M216.9 173.8l0.6 -2.5l1.2 0M94.4 576l1 -3l1 3M213 453.1l0.6 -2.5l1.2 0M241.9 118.2l0.6 -2.5l1.2 0M283.8 331.5l-1 3.5M121 573l1 -3l1 3M287 126.8l0.6 -2.5l1.2 0M264.4 229.3l-1 3.5M174 321l1 -3l1 3M456.8 49.3l0.6 -2.5l1.2 0M184.5 358.2l-1 3.5M262.1 172.6l1 -3l1 3M261 47l1 -3l1 3M221.7 147.2l0.6 -2.5l1.2 0M321.5 104.6l0.6 -2.5l1.2 0M70.9 589.6l-1 3.5M272.2 238.5l0.6 -2.5l1.2 0M243.2 250.3l1 -3l1 3M372.9 155.5l1 -3l1 3M135.9 273.7l1 -3l1 3M112.7 293.1l0.6 -2.5l1.2 0M157.8 553.5l0.6 -2.5l1.2 0M160.9 502.3l-1 3.5M335.4 219.6l0.6 -2.5l1.2 0M93.1 640.4l0.6 -2.5l1.2 0M164.7 407.9l-1 3.5M184.2 536.5l-1 3.5M172.7 198.1l0.6 -2.5l1.2 0M85.4 420.5l-1 3.5M150.9 594.1l1 -3l1 3M178.7 339.7l-1 3.5M89.9 484.6l-1 3.5M138.5 354.5l0.6 -2.5l1.2 0M337.1 176.1l-1 3.5M284.6 114.6l-1 3.5M280.9 76l1 -3l1 3M263.9 72.7l1 -3l1 3M168.5 507.2l0.6 -2.5l1.2 0M336.6 64.6l-1 3.5M72 644.7l0.6 -2.5l1.2 0M202.5 359l0.6 -2.5l1.2 0M158.4 457.6l1 -3l1 3M99.9 441.4l1 -3l1 3M131.9 484l0.6 -2.5l1.2 0M211 219.8l-1 3.5M179.3 332.7l1 -3l1 3M319.5 249.9l1 -3l1 3M72.2 351.4l0.6 -2.5l1.2 0M137.4 676.9l-1 3.5M303.9 178.4l-1 3.5M219.2 459.9l-1 3.5M360.1 150.6l-1 3.5M234.1 221.9l1 -3l1 3M429.4 60.1l1 -3l1 3M313.6 311.8l1 -3l1 3M114.2 342.3l-1 3.5M292.3 150.3l1 -3l1 3M248.7 172.7l0.6 -2.5l1.2 0M217.2 292.3l-1 3.5M220.1 245.2l0.6 -2.5l1.2 0M162.9 252.8l1 -3l1 3M282.7 196.3l-1 3.5M255.5 204.4l0.6 -2.5l1.2 0M104.9 352.2l-1 3.5M132.3 380.4l-1 3.5M392.5 80l-1 3.5M263 182.7l1 -3l1 3M342.7 160.7l0.6 -2.5l1.2 0M87.8 605.9l0.6 -2.5l1.2 0M163.4 457.1l1 -3l1 3M224.4 267.7l1 -3l1 3M176.1 270.3l-1 3.5M233.8 217.1l0.6 -2.5l1.2 0M147.7 306.2l0.6 -2.5l1.2 0M84.7 432l0.6 -2.5l1.2 0M144.7 539.2l1 -3l1 3M234.8 319.4l-1 3.5M165.6 241.5l-1 3.5M276.9 350.6l-1 3.5M145.2 227.5l-1 3.5M143.9 379.6l-1 3.5M135.8 459.8l0.6 -2.5l1.2 0M205.3 501.7l-1 3.5M93 564l1 -3l1 3M123.1 384.9l0.6 -2.5l1.2 0M242.4 212.9l0.6 -2.5l1.2 0M270 355.5l-1 3.5M153.1 401.6l0.6 -2.5l1.2 0M165.8 405l0.6 -2.5l1.2 0M78.6 524.2l-1 3.5M216.6 198.8l0.6 -2.5l1.2 0M103.7 605.3l0.6 -2.5l1.2 0M120 609.1l-1 3.5M190.6 272.8l0.6 -2.5l1.2 0M131 342.3l1 -3l1 3M188 355.5l-1 3.5M259.5 324.9l1 -3l1 3M195.1 198.6l1 -3l1 3M341.3 114.7l1 -3l1 3M152.3 590l1 -3l1 3M169.8 551.8l0.6 -2.5l1.2 0M207.2 343.9l-1 3.5M289.7 294.5l1 -3l1 3M258 340.9l-1 3.5M185.8 267l-1 3.5M181.3 171.7l1 -3l1 3M210 430.4l-1 3.5M259.4 370.4l1 -3l1 3M326 86.5l-1 3.5M127 632.3l0.6 -2.5l1.2 0M274.1 216.6l1 -3l1 3M317.7 161.3l-1 3.5M235.6 221.6l0.6 -2.5l1.2 0M88.2 332.9l1 -3l1 3M242 392.4l0.6 -2.5l1.2 0M220.4 272l-1 3.5M269.8 61.2l0.6 -2.5l1.2 0M84.4 578.7l1 -3l1 3M126.3 417.6l0.6 -2.5l1.2 0M311.9 53.8l0.6 -2.5l1.2 0M98.1 551l-1 3.5M341.5 244.1l0.6 -2.5l1.2 0M311.3 63l0.6 -2.5l1.2 0M347.9 131.1l0.6 -2.5l1.2 0M389.7 110.9l-1 3.5M414.2 74l0.6 -2.5l1.2 0M348.9 45.2l0.6 -2.5l1.2 0M156.3 219.3l1 -3l1 3M151.1 507.6l-1 3.5M117.6 284.7l-1 3.5M220.5 278.3l0.6 -2.5l1.2 0M83.4 546.7l1 -3l1 3M272.9 102.5l0.6 -2.5l1.2 0M122.1 687.3l0.6 -2.5l1.2 0M356 159.8l-1 3.5M284.8 63.7l1 -3l1 3M317.5 111.5l0.6 -2.5l1.2 0M190.5 439l-1 3.5M251.1 56.6l-1 3.5M273.5 151.1l0.6 -2.5l1.2 0M301 49.3l0.6 -2.5l1.2 0M126.5 507.1l1 -3l1 3M250.7 222.6l-1 3.5M272.8 352.6l1 -3l1 3M109.7 442l1 -3l1 3M297.5 134.9l1 -3l1 3"/>
<g stroke="#36e27e" stroke-width="1" fill="none">
<line x1="778.7" y1="-74.1" x2="778.7" y2="-74.1"/>
<line x1="748.1" y1="-30.2" x2="748.1" y2="-30.2"/>
<line x1="717.7" y1="13.8" x2="717.7" y2="13.8"/>
<line x1="687.6" y1="58" x2="687.1" y2="50"/>
<line x1="657.7" y1="102.2" x2="654" y2="46.2"/>
<line x1="628" y1="146.6" x2="621.4" y2="46.6"/>
<line x1="598.6" y1="191" x2="589.1" y2="47"/>
<line x1="569.5" y1="235.6" x2="557" y2="47.6"/>
<line x1="540.5" y1="280.3" x2="525.2" y2="48.3"/>
<line x1="511.8" y1="325.1" x2="493.6" y2="49.1"/>
<line x1="483.3" y1="370" x2="462.2" y2="50"/>
<line x1="455.1" y1="415.1" x2="434" y2="95.1"/>
<line x1="427.1" y1="460.2" x2="406" y2="140.2"/>
<line x1="399.4" y1="505.4" x2="378.2" y2="185.4"/>
<line x1="371.8" y1="550.8" x2="351.5" y2="242.8"/>
<line x1="344.5" y1="596.3" x2="325" y2="300.3"/>
<line x1="317.5" y1="641.9" x2="298.5" y2="353.9"/>
<line x1="290.7" y1="687.6" x2="271.9" y2="403.6"/>
<line x1="264.1" y1="733.4" x2="245.1" y2="445.4"/>
<line x1="237.8" y1="779.3" x2="218.5" y2="487.3"/>
<line x1="211.7" y1="825.3" x2="192.4" y2="533.3"/>
<line x1="185.8" y1="871.5" x2="167.6" y2="595.5"/>
<line x1="160.2" y1="917.7" x2="144.6" y2="681.7"/>
<line x1="134.8" y1="964.1" x2="134.8" y2="964.1"/>
<line x1="510.8" y1="111.4" x2="495" y2="47.4"/>
<line x1="481.2" y1="155.8" x2="456.6" y2="55.8"/>
<line x1="451.8" y1="200.3" x2="428.2" y2="104.3"/>
<line x1="422.8" y1="245" x2="399.2" y2="149"/>
<line x1="394" y1="289.9" x2="371.3" y2="197.9"/>
<line x1="365.4" y1="334.9" x2="345.8" y2="254.9"/>
<line x1="337.2" y1="380.1" x2="320.5" y2="312.1"/>
<line x1="309.2" y1="425.5" x2="293.5" y2="361.5"/>
<line x1="281.5" y1="471" x2="267.7" y2="415"/>
<line x1="254" y1="516.7" x2="239.3" y2="456.7"/>
<line x1="226.9" y1="562.5" x2="211.1" y2="498.5"/>
<line x1="199.9" y1="608.5" x2="185.2" y2="548.5"/>
<line x1="173.3" y1="654.6" x2="161.5" y2="606.6"/>
<line x1="146.9" y1="701" x2="144" y2="689"/>
<line x1="120.8" y1="747.4" x2="120.8" y2="747.4"/>
</g>
<g stroke="#36e27e" stroke-width="1" fill="none">
<polyline points="254.4,-11 227.4,35 200.5,81 173.6,127 146.6,173 119.7,219 92.7,265 65.8,311 38.8,357 11.8,403"/>
<line x1="254.4" y1="-11" x2="276.7" y2="3.9"/>
<line x1="254.4" y1="-11" x2="247.4" y2="15.5"/>
<line x1="247.4" y1="15.5" x2="267.4" y2="24.5"/>
<line x1="254.4" y1="-11" x2="229.9" y2="59"/>
<line x1="265.6" y1="-3.6" x2="231.4" y2="86.4"/>
<line x1="227.4" y1="35" x2="249.8" y2="49.9"/>
<line x1="227.4" y1="35" x2="220.4" y2="61.5"/>
<line x1="220.4" y1="61.5" x2="240.4" y2="70.5"/>
<line x1="227.4" y1="35" x2="202.9" y2="105"/>
<line x1="238.6" y1="42.4" x2="204.4" y2="132.4"/>
<line x1="200.5" y1="81" x2="222.8" y2="95.9"/>
<line x1="200.5" y1="81" x2="193.5" y2="107.5"/>
<line x1="193.5" y1="107.5" x2="213.5" y2="116.5"/>
<line x1="200.5" y1="81" x2="176" y2="151"/>
<line x1="211.7" y1="88.4" x2="177.4" y2="178.4"/>
<line x1="173.6" y1="127" x2="195.9" y2="141.9"/>
<line x1="173.6" y1="127" x2="166.6" y2="153.5"/>
<line x1="166.6" y1="153.5" x2="186.6" y2="162.5"/>
<line x1="173.6" y1="127" x2="149.1" y2="197"/>
<line x1="184.7" y1="134.4" x2="150.5" y2="224.4"/>
<line x1="146.6" y1="173" x2="168.9" y2="187.9"/>
<line x1="146.6" y1="173" x2="139.6" y2="199.5"/>
<line x1="139.6" y1="199.5" x2="159.6" y2="208.5"/>
<line x1="146.6" y1="173" x2="122.1" y2="243"/>
<line x1="157.8" y1="180.4" x2="123.5" y2="270.4"/>
<line x1="119.7" y1="219" x2="142" y2="233.9"/>
<line x1="119.7" y1="219" x2="112.7" y2="245.5"/>
<line x1="112.7" y1="245.5" x2="132.7" y2="254.5"/>
<line x1="119.7" y1="219" x2="95.2" y2="289"/>
<line x1="130.8" y1="226.4" x2="96.6" y2="316.4"/>
<line x1="92.7" y1="265" x2="115" y2="279.9"/>
<line x1="92.7" y1="265" x2="85.7" y2="291.5"/>
<line x1="85.7" y1="291.5" x2="105.7" y2="300.5"/>
<line x1="92.7" y1="265" x2="68.2" y2="335"/>
<line x1="103.9" y1="272.4" x2="69.7" y2="362.4"/>
<line x1="65.8" y1="311" x2="88" y2="325.9"/>
<line x1="65.8" y1="311" x2="58.8" y2="337.5"/>
<line x1="58.8" y1="337.5" x2="78.8" y2="346.5"/>
<line x1="65.8" y1="311" x2="41.2" y2="381"/>
<line x1="76.9" y1="318.4" x2="42.7" y2="408.4"/>
<line x1="38.8" y1="357" x2="61.1" y2="371.9"/>
<line x1="38.8" y1="357" x2="31.8" y2="383.5"/>
<line x1="31.8" y1="383.5" x2="51.8" y2="392.5"/>
<line x1="38.8" y1="357" x2="14.3" y2="427"/>
<line x1="50" y1="364.4" x2="15.8" y2="454.4"/>
<line x1="11.8" y1="403" x2="34.1" y2="417.9"/>
<line x1="11.8" y1="403" x2="4.8" y2="429.5"/>
<line x1="4.8" y1="429.5" x2="24.8" y2="438.5"/>
<line x1="11.8" y1="403" x2="-12.7" y2="473"/>
<line x1="23" y1="410.4" x2="-11.2" y2="500.4"/>
</g>
</g>
<g stroke="#3ddc80" stroke-width="1" fill="none" shape-rendering="crispEdges">
<polyline points="778.7,-74.1 748.1,-30.2 717.7,13.8 687.6,58 657.7,102.2 628,146.6 598.6,191 569.5,235.6 540.5,280.3 511.8,325.1 483.3,370 455.1,415.1 427.1,460.2 399.4,505.4 371.8,550.8 344.5,596.3 317.5,641.9 290.7,687.6 264.1,733.4 237.8,779.3 211.7,825.3"/>
<polyline points="896.3,-39.6 865.7,4.3 835.3,48.3 805.2,92.4 775.3,136.7 745.6,181 716.2,225.5 687.1,270.1 658.1,314.8 629.4,359.6 600.9,404.5 572.7,449.5 544.7,494.6 517,539.9 489.4,585.3 462.1,630.7 435.1,676.3 408.3,722 381.7,767.8 355.4,813.7 329.3,859.8"/>
<polyline points="1013.9,-5.2 983.3,38.7 952.9,82.7 922.8,126.9 892.9,171.1 863.2,215.5 833.8,259.9 804.7,304.5 775.7,349.2 747,394 718.5,438.9 690.3,484 662.3,529.1 634.6,574.3 607,619.7 579.7,665.2 552.7,710.8 525.9,756.5 499.3,802.3 473,848.2 446.9,894.2"/>
<polyline points="1131.5,29.3 1100.9,73.2 1070.5,117.2 1040.4,161.3 1010.5,205.6 980.8,249.9 951.4,294.4 922.3,339 893.3,383.7 864.6,428.5 836.1,473.4 807.9,518.4 779.9,563.5 752.2,608.8 724.6,654.2 697.3,699.6 670.3,745.2 643.5,790.9 616.9,836.7 590.6,882.6 564.5,928.7"/>
<polyline points="1249.1,63.7 1218.5,107.6 1188.1,151.6 1158,195.8 1128.1,240 1098.4,284.4 1069,328.8 1039.9,373.4 1010.9,418.1 982.2,462.9 953.7,507.8 925.5,552.9 897.5,598 869.8,643.2 842.2,688.6 814.9,734.1 787.9,779.7 761.1,825.4 734.5,871.2 708.2,917.1 682.1,963.1"/>
<line x1="809.5" y1="-117.9" x2="1397.5" y2="54.4"/>
<line x1="778.7" y1="-74.1" x2="1366.7" y2="98.2"/>
<line x1="748.1" y1="-30.2" x2="1336.1" y2="142.1"/>
<line x1="717.7" y1="13.8" x2="1305.7" y2="186.1"/>
<line x1="687.6" y1="58" x2="1275.6" y2="230.2"/>
<line x1="657.7" y1="102.2" x2="1245.7" y2="274.5"/>
<line x1="628" y1="146.6" x2="1216" y2="318.8"/>
<line x1="598.6" y1="191" x2="1186.6" y2="363.3"/>
<line x1="569.5" y1="235.6" x2="1157.5" y2="407.9"/>
<line x1="540.5" y1="280.3" x2="1128.5" y2="452.6"/>
<line x1="511.8" y1="325.1" x2="1099.8" y2="497.4"/>
<line x1="483.3" y1="370" x2="1071.3" y2="542.3"/>
<line x1="455.1" y1="415.1" x2="1043.1" y2="587.3"/>
<line x1="427.1" y1="460.2" x2="1015.1" y2="632.4"/>
<line x1="399.4" y1="505.4" x2="987.4" y2="677.7"/>
<line x1="371.8" y1="550.8" x2="959.8" y2="723.1"/>
<line x1="344.5" y1="596.3" x2="932.5" y2="768.5"/>
<line x1="317.5" y1="641.9" x2="905.5" y2="814.1"/>
<line x1="290.7" y1="687.6" x2="878.7" y2="859.8"/>
<line x1="264.1" y1="733.4" x2="852.1" y2="905.6"/>
<line x1="237.8" y1="779.3" x2="825.8" y2="951.5"/>
<line x1="211.7" y1="825.3" x2="799.7" y2="997.6"/>
<polyline points="748.1,-30.2 896.3,-39.6 1044.7,-49 1193.4,-58.2 1342.3,-67.3 1491.4,-76.3"/>
<polyline points="717.7,13.8 865.7,4.3 1013.9,-5.2 1162.3,-14.5 1311,-23.8 1459.9,-32.9"/>
<polyline points="687.6,58 835.3,48.3 983.3,38.7 1131.5,29.3 1279.9,19.9 1428.6,10.7"/>
<polyline points="657.7,102.2 805.2,92.4 952.9,82.7 1100.9,73.2 1249.1,63.7 1397.5,54.4"/>
<polyline points="628,146.6 775.3,136.7 922.8,126.9 1070.5,117.2 1218.5,107.6 1366.7,98.2"/>
<polyline points="598.6,191 745.6,181 892.9,171.1 1040.4,161.3 1188.1,151.6 1336.1,142.1"/>
<polyline points="569.5,235.6 716.2,225.5 863.2,215.5 1010.5,205.6 1158,195.8 1305.7,186.1"/>
<polyline points="540.5,280.3 687.1,270.1 833.8,259.9 980.8,249.9 1128.1,240 1275.6,230.2"/>
<polyline points="511.8,325.1 658.1,314.8 804.7,304.5 951.4,294.4 1098.4,284.4 1245.7,274.5"/>
<polyline points="483.3,370 629.4,359.6 775.7,349.2 922.3,339 1069,328.8 1216,318.8"/>
<polyline points="455.1,415.1 600.9,404.5 747,394 893.3,383.7 1039.9,373.4 1186.6,363.3"/>
<polyline points="427.1,460.2 572.7,449.5 718.5,438.9 864.6,428.5 1010.9,418.1 1157.5,407.9"/>
<polyline points="399.4,505.4 544.7,494.6 690.3,484 836.1,473.4 982.2,462.9 1128.5,452.6"/>
<polyline points="371.8,550.8 517,539.9 662.3,529.1 807.9,518.4 953.7,507.8 1099.8,497.4"/>
<polyline points="344.5,596.3 489.4,585.3 634.6,574.3 779.9,563.5 925.5,552.9 1071.3,542.3"/>
<polyline points="317.5,641.9 462.1,630.7 607,619.7 752.2,608.8 897.5,598 1043.1,587.3"/>
<polyline points="290.7,687.6 435.1,676.3 579.7,665.2 724.6,654.2 869.8,643.2 1015.1,632.4"/>
<polyline points="264.1,733.4 408.3,722 552.7,710.8 697.3,699.6 842.2,688.6 987.4,677.7"/>
<polyline points="237.8,779.3 381.7,767.8 525.9,756.5 670.3,745.2 814.9,734.1 959.8,723.1"/>
<polyline points="211.7,825.3 355.4,813.7 499.3,802.3 643.5,790.9 787.9,779.7 932.5,768.5"/>
<polyline points="185.8,871.5 329.3,859.8 473,848.2 616.9,836.7 761.1,825.4 905.5,814.1"/>
<polyline points="160.2,917.7 303.4,905.9 446.9,894.2 590.6,882.6 734.5,871.2 878.7,859.8"/>
<polyline points="134.8,964.1 277.8,952.2 421,940.4 564.5,928.7 708.2,917.1 852.1,905.6"/>
<polyline points="109.6,1010.6 252.4,998.6 395.4,986.6 538.6,974.8 682.1,963.1 825.8,951.5"/>
<polyline points="84.7,1057.2 227.2,1045 370,1033 513,1021.1 656.2,1009.3 799.7,997.6"/>
<polyline points="60,1103.9 202.3,1091.6 344.8,1079.5 487.6,1067.5 630.6,1055.5 773.8,1043.7"/>
<line x1="778.7" y1="-74.1" x2="798.5" y2="30"/>
<line x1="748.1" y1="-30.2" x2="759.6" y2="30"/>
<line x1="717.7" y1="13.8" x2="720.8" y2="30"/>
<line x1="687.6" y1="58" x2="682.2" y2="30"/>
<line x1="657.7" y1="102.2" x2="643.9" y2="30"/>
<line x1="628" y1="146.6" x2="605.8" y2="30"/>
<line x1="598.6" y1="191" x2="567.9" y2="30"/>
<line x1="569.5" y1="235.6" x2="530.2" y2="30"/>
<line x1="540.5" y1="280.3" x2="510.8" y2="111.4"/>
<line x1="511.8" y1="325.1" x2="481.2" y2="155.8"/>
<line x1="483.3" y1="370" x2="451.8" y2="200.3"/>
<line x1="455.1" y1="415.1" x2="422.8" y2="245"/>
<line x1="427.1" y1="460.2" x2="394" y2="289.9"/>
<line x1="399.4" y1="505.4" x2="365.4" y2="334.9"/>
<line x1="371.8" y1="550.8" x2="337.2" y2="380.1"/>
<line x1="344.5" y1="596.3" x2="309.2" y2="425.5"/>
<line x1="317.5" y1="641.9" x2="281.5" y2="471"/>
<line x1="290.7" y1="687.6" x2="254" y2="516.7"/>
<line x1="264.1" y1="733.4" x2="226.9" y2="562.5"/>
<line x1="237.8" y1="779.3" x2="199.9" y2="608.5"/>
<line x1="211.7" y1="825.3" x2="173.3" y2="654.6"/>
<line x1="185.8" y1="871.5" x2="146.9" y2="701"/>
<line x1="160.2" y1="917.7" x2="120.8" y2="747.4"/>
<line x1="134.8" y1="964.1" x2="95" y2="794"/>
</g>
<g fill="#f4fff8">
<rect x="684.1" y="54.5" width="7" height="7"/>
<rect x="654.2" y="98.7" width="7" height="7"/>
<rect x="624.5" y="143.1" width="7" height="7"/>
<rect x="595.1" y="187.5" width="7" height="7"/>
<rect x="566" y="232.1" width="7" height="7"/>
<rect x="537" y="276.8" width="7" height="7"/>
<rect x="508.3" y="321.6" width="7" height="7"/>
<rect x="479.8" y="366.5" width="7" height="7"/>
<rect x="451.6" y="411.6" width="7" height="7"/>
<rect x="423.6" y="456.7" width="7" height="7"/>
<rect x="395.9" y="501.9" width="7" height="7"/>
<rect x="368.3" y="547.3" width="7" height="7"/>
<rect x="341" y="592.8" width="7" height="7"/>
<rect x="314" y="638.4" width="7" height="7"/>
<rect x="287.2" y="684.1" width="7" height="7"/>
<rect x="801.7" y="88.9" width="7" height="7"/>
<rect x="771.8" y="133.2" width="7" height="7"/>
<rect x="742.1" y="177.5" width="7" height="7"/>
<rect x="712.7" y="222" width="7" height="7"/>
<rect x="683.6" y="266.6" width="7" height="7"/>
<rect x="654.6" y="311.3" width="7" height="7"/>
<rect x="625.9" y="356.1" width="7" height="7"/>
<rect x="597.4" y="401" width="7" height="7"/>
<rect x="569.2" y="446" width="7" height="7"/>
<rect x="541.2" y="491.1" width="7" height="7"/>
<rect x="513.5" y="536.4" width="7" height="7"/>
<rect x="485.9" y="581.8" width="7" height="7"/>
<rect x="458.6" y="627.2" width="7" height="7"/>
<rect x="431.6" y="672.8" width="7" height="7"/>
<rect x="801.2" y="301" width="7" height="7"/>
<rect x="772.2" y="345.7" width="7" height="7"/>
<rect x="743.5" y="390.5" width="7" height="7"/>
<rect x="715" y="435.4" width="7" height="7"/>
<rect x="686.8" y="480.5" width="7" height="7"/>
<rect x="658.8" y="525.6" width="7" height="7"/>
<rect x="631.1" y="570.8" width="7" height="7"/>
<rect x="603.5" y="616.2" width="7" height="7"/>
<rect x="576.2" y="661.7" width="7" height="7"/>
<rect x="804.4" y="514.9" width="7" height="7"/>
<rect x="776.4" y="560" width="7" height="7"/>
<rect x="748.7" y="605.3" width="7" height="7"/>
<rect x="721.1" y="650.7" width="7" height="7"/>
</g>
<g fill="#f4fff8">
<rect x="448.8" y="52.4" width="7" height="7"/>
<rect x="460.2" y="59.9" width="7" height="7"/>
<rect x="445.1" y="76.9" width="7" height="7"/>
<rect x="435.2" y="67.1" width="7" height="7"/>
<rect x="424" y="61.7" width="7" height="7"/>
<rect x="410.7" y="54.5" width="7" height="7"/>
<rect x="400.1" y="46.7" width="7" height="7"/>
<rect x="455.5" y="89" width="7" height="7"/>
<rect x="445.3" y="84.9" width="7" height="7"/>
<rect x="433.5" y="78.9" width="7" height="7"/>
<rect x="352.7" y="53" width="7" height="7"/>
<rect x="364" y="60.5" width="7" height="7"/>
<rect x="375.3" y="68" width="7" height="7"/>
<rect x="386.7" y="75.5" width="7" height="7"/>
<rect x="398" y="83" width="7" height="7"/>
<rect x="409.3" y="90.5" width="7" height="7"/>
<rect x="420.6" y="98" width="7" height="7"/>
<rect x="431.9" y="105.5" width="7" height="7"/>
<rect x="416.7" y="121.6" width="7" height="7"/>
<rect x="406.3" y="113.5" width="7" height="7"/>
<rect x="394.8" y="105.7" width="7" height="7"/>
<rect x="385.1" y="99.9" width="7" height="7"/>
<rect x="372.5" y="90.6" width="7" height="7"/>
<rect x="426.4" y="134.6" width="7" height="7"/>
<rect x="414.2" y="128.4" width="7" height="7"/>
<rect x="403.3" y="122.2" width="7" height="7"/>
<rect x="257.6" y="53.9" width="7" height="7"/>
<rect x="268.9" y="61.4" width="7" height="7"/>
<rect x="280.1" y="68.9" width="7" height="7"/>
<rect x="291.3" y="76.3" width="7" height="7"/>
<rect x="302.5" y="83.8" width="7" height="7"/>
<rect x="313.8" y="91.3" width="7" height="7"/>
<rect x="325" y="98.8" width="7" height="7"/>
<rect x="336.2" y="106.2" width="7" height="7"/>
<rect x="347.5" y="113.7" width="7" height="7"/>
<rect x="358.7" y="121.2" width="7" height="7"/>
<rect x="369.9" y="128.7" width="7" height="7"/>
<rect x="381.1" y="136.1" width="7" height="7"/>
<rect x="392.4" y="143.6" width="7" height="7"/>
<rect x="403.6" y="151.1" width="7" height="7"/>
<rect x="216.9" y="58" width="7" height="7"/>
<rect x="390.4" y="168.2" width="7" height="7"/>
<rect x="379.1" y="158.7" width="7" height="7"/>
<rect x="367.4" y="150.7" width="7" height="7"/>
<rect x="354.4" y="143.4" width="7" height="7"/>
<rect x="345.9" y="138.4" width="7" height="7"/>
<rect x="400.1" y="180.6" width="7" height="7"/>
<rect x="387.4" y="173.7" width="7" height="7"/>
<rect x="373.8" y="168.9" width="7" height="7"/>
<rect x="197" y="77.5" width="7" height="7"/>
<rect x="208.1" y="85" width="7" height="7"/>
<rect x="219.3" y="92.4" width="7" height="7"/>
<rect x="230.4" y="99.8" width="7" height="7"/>
<rect x="241.6" y="107.3" width="7" height="7"/>
<rect x="252.7" y="114.8" width="7" height="7"/>
<rect x="263.9" y="122.2" width="7" height="7"/>
<rect x="275" y="129.6" width="7" height="7"/>
<rect x="286.1" y="137.1" width="7" height="7"/>
<rect x="297.3" y="144.6" width="7" height="7"/>
<rect x="308.4" y="152" width="7" height="7"/>
<rect x="319.6" y="159.4" width="7" height="7"/>
<rect x="330.7" y="166.9" width="7" height="7"/>
<rect x="341.9" y="174.3" width="7" height="7"/>
<rect x="353" y="181.8" width="7" height="7"/>
<rect x="364.2" y="189.2" width="7" height="7"/>
<rect x="375.3" y="196.7" width="7" height="7"/>
<rect x="190" y="104" width="7" height="7"/>
<rect x="359.6" y="211.4" width="7" height="7"/>
<rect x="348.4" y="205.6" width="7" height="7"/>
<rect x="339.2" y="197.3" width="7" height="7"/>
<rect x="327.4" y="190.9" width="7" height="7"/>
<rect x="317" y="183" width="7" height="7"/>
<rect x="371.7" y="226.9" width="7" height="7"/>
<rect x="358.4" y="220.4" width="7" height="7"/>
<rect x="348.2" y="214" width="7" height="7"/>
<rect x="170.1" y="123.5" width="7" height="7"/>
<rect x="181.1" y="130.9" width="7" height="7"/>
<rect x="192.2" y="138.3" width="7" height="7"/>
<rect x="203.2" y="145.8" width="7" height="7"/>
<rect x="214.3" y="153.2" width="7" height="7"/>
<rect x="225.3" y="160.6" width="7" height="7"/>
<rect x="236.4" y="168.1" width="7" height="7"/>
<rect x="247.5" y="175.5" width="7" height="7"/>
<rect x="258.5" y="182.9" width="7" height="7"/>
<rect x="269.6" y="190.3" width="7" height="7"/>
<rect x="280.6" y="197.8" width="7" height="7"/>
<rect x="291.7" y="205.2" width="7" height="7"/>
<rect x="302.8" y="212.6" width="7" height="7"/>
<rect x="313.8" y="220" width="7" height="7"/>
<rect x="324.9" y="227.4" width="7" height="7"/>
<rect x="335.9" y="234.9" width="7" height="7"/>
<rect x="347" y="242.3" width="7" height="7"/>
<rect x="163.1" y="150" width="7" height="7"/>
<rect x="333.3" y="257.8" width="7" height="7"/>
<rect x="321.9" y="251.5" width="7" height="7"/>
<rect x="310.6" y="243.3" width="7" height="7"/>
<rect x="298.1" y="235" width="7" height="7"/>
<rect x="287" y="227.6" width="7" height="7"/>
<rect x="343.3" y="273.9" width="7" height="7"/>
<rect x="330" y="268" width="7" height="7"/>
<rect x="321" y="261.5" width="7" height="7"/>
<rect x="143.1" y="169.5" width="7" height="7"/>
<rect x="154.1" y="176.9" width="7" height="7"/>
<rect x="165" y="184.3" width="7" height="7"/>
<rect x="176" y="191.7" width="7" height="7"/>
<rect x="187" y="199.1" width="7" height="7"/>
<rect x="198" y="206.5" width="7" height="7"/>
<rect x="208.9" y="213.9" width="7" height="7"/>
<rect x="219.9" y="221.3" width="7" height="7"/>
<rect x="230.9" y="228.7" width="7" height="7"/>
<rect x="241.9" y="236.1" width="7" height="7"/>
<rect x="252.9" y="243.5" width="7" height="7"/>
<rect x="263.8" y="250.9" width="7" height="7"/>
<rect x="274.8" y="258.3" width="7" height="7"/>
<rect x="285.8" y="265.7" width="7" height="7"/>
<rect x="296.8" y="273.1" width="7" height="7"/>
<rect x="307.7" y="280.5" width="7" height="7"/>
<rect x="318.7" y="287.9" width="7" height="7"/>
<rect x="136.1" y="196" width="7" height="7"/>
<rect x="304.1" y="303.3" width="7" height="7"/>
<rect x="292.8" y="296.7" width="7" height="7"/>
<rect x="280.8" y="288.6" width="7" height="7"/>
<rect x="271.1" y="280.6" width="7" height="7"/>
<rect x="259.5" y="272.8" width="7" height="7"/>
<rect x="316" y="318.6" width="7" height="7"/>
<rect x="301.1" y="312.2" width="7" height="7"/>
<rect x="291.6" y="307.6" width="7" height="7"/>
<rect x="116.2" y="215.5" width="7" height="7"/>
<rect x="127" y="222.9" width="7" height="7"/>
<rect x="137.9" y="230.2" width="7" height="7"/>
<rect x="148.8" y="237.6" width="7" height="7"/>
<rect x="159.7" y="245" width="7" height="7"/>
<rect x="170.6" y="252.4" width="7" height="7"/>
<rect x="181.5" y="259.8" width="7" height="7"/>
<rect x="192.4" y="267.1" width="7" height="7"/>
<rect x="203.3" y="274.5" width="7" height="7"/>
<rect x="214.2" y="281.9" width="7" height="7"/>
<rect x="225.1" y="289.2" width="7" height="7"/>
<rect x="235.9" y="296.6" width="7" height="7"/>
<rect x="246.8" y="304" width="7" height="7"/>
<rect x="257.7" y="311.4" width="7" height="7"/>
<rect x="268.6" y="318.8" width="7" height="7"/>
<rect x="279.5" y="326.1" width="7" height="7"/>
<rect x="290.4" y="333.5" width="7" height="7"/>
<rect x="109.2" y="242" width="7" height="7"/>
<rect x="274.5" y="348.4" width="7" height="7"/>
<rect x="265.2" y="341.9" width="7" height="7"/>
<rect x="252.9" y="335.8" width="7" height="7"/>
<rect x="241.2" y="326.9" width="7" height="7"/>
<rect x="231.5" y="320.8" width="7" height="7"/>
<rect x="288.2" y="364.2" width="7" height="7"/>
<rect x="272.8" y="356.9" width="7" height="7"/>
<rect x="262.9" y="351" width="7" height="7"/>
<rect x="89.2" y="261.5" width="7" height="7"/>
<rect x="100" y="268.9" width="7" height="7"/>
<rect x="110.8" y="276.2" width="7" height="7"/>
<rect x="121.6" y="283.6" width="7" height="7"/>
<rect x="132.4" y="290.9" width="7" height="7"/>
<rect x="143.2" y="298.2" width="7" height="7"/>
<rect x="154" y="305.6" width="7" height="7"/>
<rect x="164.8" y="312.9" width="7" height="7"/>
<rect x="175.7" y="320.3" width="7" height="7"/>
<rect x="186.5" y="327.6" width="7" height="7"/>
<rect x="197.3" y="335" width="7" height="7"/>
<rect x="208.1" y="342.4" width="7" height="7"/>
<rect x="218.9" y="349.7" width="7" height="7"/>
<rect x="229.7" y="357.1" width="7" height="7"/>
<rect x="240.5" y="364.4" width="7" height="7"/>
<rect x="251.3" y="371.8" width="7" height="7"/>
<rect x="262.1" y="379.1" width="7" height="7"/>
<rect x="82.2" y="288" width="7" height="7"/>
<rect x="248.4" y="393.6" width="7" height="7"/>
<rect x="237.3" y="388.1" width="7" height="7"/>
<rect x="226.4" y="379.9" width="7" height="7"/>
<rect x="213" y="373.6" width="7" height="7"/>
<rect x="201.6" y="364" width="7" height="7"/>
<rect x="260" y="409" width="7" height="7"/>
<rect x="246.5" y="402.3" width="7" height="7"/>
<rect x="232.6" y="396.7" width="7" height="7"/>
<rect x="73" y="314.8" width="7" height="7"/>
<rect x="83.7" y="322.1" width="7" height="7"/>
<rect x="94.4" y="329.5" width="7" height="7"/>
<rect x="105.1" y="336.8" width="7" height="7"/>
<rect x="115.9" y="344.1" width="7" height="7"/>
<rect x="126.6" y="351.4" width="7" height="7"/>
<rect x="137.3" y="358.8" width="7" height="7"/>
<rect x="148" y="366.1" width="7" height="7"/>
<rect x="158.7" y="373.4" width="7" height="7"/>
<rect x="169.5" y="380.8" width="7" height="7"/>
<rect x="180.2" y="388.1" width="7" height="7"/>
<rect x="190.9" y="395.4" width="7" height="7"/>
<rect x="201.6" y="402.7" width="7" height="7"/>
<rect x="212.4" y="410" width="7" height="7"/>
<rect x="223.1" y="417.4" width="7" height="7"/>
<rect x="233.8" y="424.7" width="7" height="7"/>
<rect x="219.1" y="440.6" width="7" height="7"/>
<rect x="208.5" y="433.1" width="7" height="7"/>
<rect x="196.2" y="424.7" width="7" height="7"/>
<rect x="184.4" y="417.9" width="7" height="7"/>
<rect x="173.1" y="411.9" width="7" height="7"/>
<rect x="230" y="455.3" width="7" height="7"/>
<rect x="217.6" y="449.3" width="7" height="7"/>
<rect x="205.9" y="444.1" width="7" height="7"/>
<rect x="77.9" y="382.7" width="7" height="7"/>
<rect x="88.5" y="390" width="7" height="7"/>
<rect x="99.1" y="397.3" width="7" height="7"/>
<rect x="109.8" y="404.6" width="7" height="7"/>
<rect x="120.4" y="411.9" width="7" height="7"/>
<rect x="131" y="419.2" width="7" height="7"/>
<rect x="141.7" y="426.5" width="7" height="7"/>
<rect x="152.3" y="433.8" width="7" height="7"/>
<rect x="162.9" y="441.1" width="7" height="7"/>
<rect x="173.6" y="448.4" width="7" height="7"/>
<rect x="184.2" y="455.7" width="7" height="7"/>
<rect x="194.9" y="463" width="7" height="7"/>
<rect x="205.5" y="470.3" width="7" height="7"/>
<rect x="191.4" y="487.4" width="7" height="7"/>
<rect x="180.6" y="479.4" width="7" height="7"/>
<rect x="169.2" y="472.3" width="7" height="7"/>
<rect x="157.6" y="465.3" width="7" height="7"/>
<rect x="146" y="457.5" width="7" height="7"/>
<rect x="202.5" y="501.3" width="7" height="7"/>
<rect x="189.6" y="494.8" width="7" height="7"/>
<rect x="178.4" y="486.7" width="7" height="7"/>
<rect x="71.7" y="443.1" width="7" height="7"/>
<rect x="82.2" y="450.4" width="7" height="7"/>
<rect x="92.8" y="457.7" width="7" height="7"/>
<rect x="103.3" y="465" width="7" height="7"/>
<rect x="113.9" y="472.2" width="7" height="7"/>
<rect x="124.4" y="479.5" width="7" height="7"/>
<rect x="135" y="486.8" width="7" height="7"/>
<rect x="145.5" y="494.1" width="7" height="7"/>
<rect x="156.1" y="501.3" width="7" height="7"/>
<rect x="166.6" y="508.6" width="7" height="7"/>
<rect x="177.2" y="515.9" width="7" height="7"/>
<rect x="161.8" y="530.5" width="7" height="7"/>
<rect x="150.9" y="525.5" width="7" height="7"/>
<rect x="141.2" y="518" width="7" height="7"/>
<rect x="130.1" y="509.5" width="7" height="7"/>
<rect x="117.8" y="501.2" width="7" height="7"/>
<rect x="171.2" y="546.9" width="7" height="7"/>
<rect x="160.8" y="539.9" width="7" height="7"/>
<rect x="149.2" y="535.3" width="7" height="7"/>
<rect x="75.6" y="510.8" width="7" height="7"/>
<rect x="86.1" y="518" width="7" height="7"/>
<rect x="96.6" y="525.2" width="7" height="7"/>
<rect x="107" y="532.5" width="7" height="7"/>
<rect x="117.5" y="539.8" width="7" height="7"/>
<rect x="128" y="547" width="7" height="7"/>
<rect x="138.4" y="554.2" width="7" height="7"/>
<rect x="148.9" y="561.5" width="7" height="7"/>
<rect x="133.9" y="576.5" width="7" height="7"/>
<rect x="123.8" y="570.8" width="7" height="7"/>
<rect x="110.9" y="561.2" width="7" height="7"/>
<rect x="100" y="555" width="7" height="7"/>
<rect x="88.8" y="547.9" width="7" height="7"/>
<rect x="143.9" y="593.3" width="7" height="7"/>
<rect x="134.6" y="584.5" width="7" height="7"/>
<rect x="120.8" y="581.1" width="7" height="7"/>
<rect x="68.7" y="571" width="7" height="7"/>
<rect x="79.1" y="578.2" width="7" height="7"/>
<rect x="89.4" y="585.4" width="7" height="7"/>
<rect x="99.8" y="592.6" width="7" height="7"/>
<rect x="110.2" y="599.9" width="7" height="7"/>
<rect x="120.6" y="607.1" width="7" height="7"/>
<rect x="106.2" y="622.2" width="7" height="7"/>
<rect x="94.4" y="616.9" width="7" height="7"/>
<rect x="84.5" y="609.3" width="7" height="7"/>
<rect x="73.8" y="599.6" width="7" height="7"/>
<rect x="114.7" y="638.1" width="7" height="7"/>
<rect x="104.5" y="630.8" width="7" height="7"/>
<rect x="94.2" y="623.4" width="7" height="7"/>
<rect x="71.7" y="638.3" width="7" height="7"/>
<rect x="82" y="645.5" width="7" height="7"/>
<rect x="92.3" y="652.7" width="7" height="7"/>
<rect x="78.9" y="669.2" width="7" height="7"/>
<rect x="89.7" y="683.8" width="7" height="7"/>
<rect x="76.2" y="677.7" width="7" height="7"/>
<rect x="507.3" y="107.9" width="7" height="7"/>
<rect x="477.7" y="152.3" width="7" height="7"/>
<rect x="448.3" y="196.8" width="7" height="7"/>
<rect x="419.3" y="241.5" width="7" height="7"/>
<rect x="390.5" y="286.4" width="7" height="7"/>
<rect x="361.9" y="331.4" width="7" height="7"/>
<rect x="333.7" y="376.6" width="7" height="7"/>
<rect x="305.7" y="422" width="7" height="7" fill="#9aa39e"/>
<rect x="278" y="467.5" width="7" height="7" fill="#9aa39e"/>
<rect x="250.5" y="513.2" width="7" height="7" fill="#9aa39e"/>
<rect x="196.4" y="605" width="7" height="7"/>
<rect x="169.8" y="651.1" width="7" height="7"/>
<rect x="537.2" y="63.6" width="7" height="7" fill="#1c1c1c"/>
<path d="M540.7 64.1L543.7 55" stroke="#1c1c1c" stroke-width="1.6"/>
</g>
<path stroke="#12f764" stroke-width="1" fill="none" d="M452.8 49.9l-2.4 12M456.1 49.9l-7.2 12M462.4 57.4l-3.2 12M449.7 74.4l-2.4 12M450.5 74.4l-3.6 12M437.9 64.6l-2.4 12M443.9 64.6l-7.2 12M445.4 64.6l-7.2 12M429.2 59.2l-3.6 12M426.7 59.2l-2.4 12M426.4 59.2l-2.4 12M415.2 52l-2.4 12M403 44.2l-3.6 12M404.9 44.2l-7.2 12M464.2 86.5l-7.2 12M459.4 86.5l-7.2 12M463.5 86.5l-2.4 12M454.1 82.4l-3.6 12M442.4 76.4l-3.2 12M357.5 50.5l-2.4 12M353.7 50.5l-2.4 12M358.9 50.5l-7.2 12M372.7 58l-3.2 12M366.4 58l-3.6 12M378.6 65.5l-2.4 12M377.8 65.5l-3.2 12M383.5 65.5l-7.2 12M392 73l-2.4 12M407.1 80.5l-7.2 12M413.3 88l-7.2 12M416.5 88l-3.6 12M415.7 88l-2.4 12M431.4 95.5l-7.2 12M425.1 95.5l-3.2 12M425.9 95.5l-2.4 12M440.8 103l-3.6 12M423.5 119.1l-7.2 12M410.5 111l-3.6 12M410.7 111l-7.2 12M399.3 103.2l-2.4 12M401.1 103.2l-3.2 12M400.3 103.2l-3.6 12M385.9 97.4l-2.4 12M387.2 97.4l-3.2 12M391.7 97.4l-7.2 12M380.1 88.1l-7.2 12M377.3 88.1l-7.2 12M436.5 132.1l-7.2 12M430 132.1l-3.2 12M420.8 125.9l-3.6 12M416.1 125.9l-3.2 12M409.7 119.7l-7.2 12M407.8 119.7l-3.6 12M261.9 51.4l-3.2 12M262.1 51.4l-3.6 12M266.7 51.4l-3.6 12M277.9 58.9l-7.2 12M289.2 66.4l-3.6 12M292.9 73.8l-2.4 12M296.7 73.8l-2.4 12M293.6 73.8l-3.2 12M308.1 81.3l-3.2 12M306 81.3l-7.2 12M320.9 88.8l-7.2 12M327.5 96.3l-2.4 12M333.6 96.3l-7.2 12M341.6 103.8l-2.4 12M345.7 103.8l-7.2 12M348.7 111.2l-3.2 12M351.6 111.2l-2.4 12M366.8 118.7l-3.6 12M363.9 118.7l-3.6 12M366.1 118.7l-2.4 12M372.6 126.2l-3.6 12M388.4 133.6l-2.4 12M398.4 141.1l-3.2 12M400.5 141.1l-3.6 12M396 141.1l-2.4 12M409.8 148.6l-3.2 12M409.8 148.6l-7.2 12M392.8 165.7l-2.4 12M383.5 156.2l-7.2 12M385.1 156.2l-3.6 12M368.8 148.2l-3.2 12M361.2 140.9l-2.4 12M361 140.9l-3.2 12M349.7 135.9l-3.2 12M354.1 135.9l-7.2 12M347.1 135.9l-3.2 12M404.5 178.1l-7.2 12M408 178.1l-7.2 12M392.7 171.2l-2.4 12M382.7 166.4l-7.2 12M377.1 166.4l-7.2 12M217 82.5l-7.2 12M213.9 82.5l-3.2 12M227.9 89.9l-3.6 12M236.6 97.3l-2.4 12M239.6 97.3l-7.2 12M246.1 104.8l-3.6 12M250.6 104.8l-3.6 12M248.2 104.8l-7.2 12M257.9 112.2l-3.2 12M260 112.2l-3.2 12M265.7 119.7l-3.2 12M283.1 127.1l-2.4 12M293.2 134.6l-7.2 12M288.4 134.6l-3.2 12M300.5 142.1l-3.2 12M300.8 142.1l-2.4 12M315.4 149.5l-7.2 12M326.9 156.9l-7.2 12M332.9 164.4l-3.2 12M333.9 164.4l-7.2 12M348.6 171.8l-7.2 12M349.1 171.8l-2.4 12M356.9 179.3l-3.2 12M369.9 186.8l-3.2 12M366 186.8l-3.2 12M368.8 186.8l-3.6 12M377.5 194.2l-3.6 12M361.3 208.9l-3.2 12M355.2 203.1l-2.4 12M349.8 194.8l-7.2 12M347.6 194.8l-2.4 12M340.3 194.8l-3.2 12M334.9 188.4l-3.2 12M333.8 188.4l-7.2 12M324.6 180.5l-3.2 12M325.6 180.5l-3.6 12M375.3 224.4l-3.2 12M359.2 217.9l-2.4 12M360.4 217.9l-2.4 12M350.5 211.5l-3.2 12M356.7 211.5l-7.2 12M182.3 128.4l-3.2 12M185.7 128.4l-3.2 12M196.1 135.8l-3.2 12M203 135.8l-7.2 12M208.5 143.3l-3.2 12M204.6 143.3l-3.2 12M220.4 150.7l-2.4 12M218 150.7l-3.2 12M229.3 158.1l-2.4 12M228.7 158.1l-7.2 12M240.7 165.6l-3.6 12M243.1 165.6l-7.2 12M244.1 165.6l-3.6 12M255.2 173l-2.4 12M267.1 180.4l-3.2 12M278.2 187.8l-7.2 12M274 187.8l-3.6 12M288.6 195.2l-2.4 12M284.8 195.2l-3.6 12M286.5 195.2l-3.6 12M295 202.7l-2.4 12M300.1 202.7l-3.2 12M302.4 202.7l-7.2 12M309.4 210.1l-3.6 12M320.3 217.5l-2.4 12M328.4 224.9l-2.4 12M343.9 232.4l-3.2 12M344.6 232.4l-3.2 12M342.3 232.4l-3.6 12M352.4 239.8l-3.6 12M349.9 239.8l-2.4 12M338.2 255.3l-7.2 12M324.4 249l-3.6 12M327.2 249l-3.2 12M314.5 240.8l-3.2 12M316.8 240.8l-7.2 12M308.1 232.5l-7.2 12M303.3 232.5l-2.4 12M288.2 225.1l-2.4 12M288.5 225.1l-3.2 12M352.5 271.4l-3.6 12M353.1 271.4l-7.2 12M348.2 271.4l-2.4 12M339.2 265.5l-3.6 12M325.7 259l-7.2 12M323 259l-2.4 12M162.6 174.4l-2.4 12M157.9 174.4l-3.2 12M170 181.8l-7.2 12M180.1 189.2l-2.4 12M178.2 189.2l-3.6 12M193.8 196.6l-2.4 12M188.1 196.6l-2.4 12M190.3 196.6l-3.2 12M204.9 204l-2.4 12M217.5 211.4l-3.2 12M214.1 211.4l-7.2 12M227.2 218.8l-7.2 12M228.9 218.8l-3.6 12M235.2 226.2l-3.6 12M244.7 233.6l-3.2 12M258.6 241l-7.2 12M268 248.4l-7.2 12M269.6 248.4l-7.2 12M277.8 255.8l-2.4 12M288.8 263.2l-3.2 12M290.5 263.2l-2.4 12M305.8 270.6l-3.6 12M309.1 278l-3.6 12M323.6 285.4l-2.4 12M305.2 300.8l-2.4 12M310.5 300.8l-7.2 12M301.3 294.2l-7.2 12M295.8 294.2l-2.4 12M286.5 286.1l-3.6 12M286.2 286.1l-3.6 12M286.5 286.1l-3.6 12M272.5 278.1l-3.6 12M277.9 278.1l-2.4 12M267.3 270.3l-7.2 12M267.2 270.3l-3.2 12M319.3 316.1l-3.2 12M304.9 309.7l-3.6 12M303.3 309.7l-2.4 12M310 309.7l-7.2 12M294.3 305.1l-3.6 12M297.6 305.1l-7.2 12M300.5 305.1l-7.2 12M128.2 220.4l-2.4 12M132.3 220.4l-2.4 12M145.8 227.8l-7.2 12M152.9 235.1l-2.4 12M156.2 235.1l-7.2 12M161.4 242.5l-3.2 12M165.5 242.5l-2.4 12M164.7 242.5l-3.2 12M180.6 249.9l-7.2 12M177.6 249.9l-3.2 12M185.5 257.2l-3.6 12M184.9 257.2l-3.6 12M188.8 257.2l-3.2 12M202.2 264.6l-7.2 12M196.8 264.6l-3.6 12M198.7 264.6l-3.2 12M209.7 272l-3.6 12M206.9 272l-3.2 12M204.7 272l-3.6 12M219.6 279.4l-3.6 12M228 286.8l-3.2 12M238.8 294.1l-3.2 12M241.5 294.1l-2.4 12M248.2 301.5l-3.2 12M262.8 308.9l-2.4 12M279.4 316.2l-7.2 12M284 323.6l-3.6 12M283.1 323.6l-3.6 12M281.5 323.6l-3.6 12M292.4 331l-3.2 12M283.7 345.9l-7.2 12M269.7 339.4l-3.6 12M273.6 339.4l-2.4 12M254.7 333.3l-3.2 12M260.2 333.3l-2.4 12M249.3 324.4l-2.4 12M246.9 324.4l-2.4 12M232.2 318.3l-2.4 12M236.3 318.3l-2.4 12M289.5 361.7l-3.2 12M294.3 361.7l-2.4 12M298.8 361.7l-7.2 12M279.8 354.4l-3.2 12M277.7 354.4l-7.2 12M265.8 348.5l-3.6 12M266.9 348.5l-2.4 12M107.4 266.4l-3.2 12M106.8 266.4l-3.2 12M119 273.7l-2.4 12M126.7 281.1l-7.2 12M125.5 281.1l-2.4 12M122.8 281.1l-2.4 12M137.8 288.4l-2.4 12M149.8 295.8l-2.4 12M144.2 295.8l-2.4 12M159.7 303.1l-3.6 12M156.9 303.1l-3.2 12M156.6 303.1l-3.6 12M168.2 310.4l-3.6 12M167.4 310.4l-2.4 12M171.6 310.4l-3.6 12M184.3 317.8l-3.2 12M182.5 317.8l-3.2 12M184.2 317.8l-7.2 12M188.9 325.1l-3.6 12M190 325.1l-3.6 12M195 325.1l-3.6 12M203.2 332.5l-7.2 12M200.5 332.5l-2.4 12M215.8 339.9l-7.2 12M211.4 339.9l-3.6 12M214.8 339.9l-2.4 12M224.9 347.2l-3.6 12M224.3 347.2l-7.2 12M233.3 354.6l-3.2 12M233.9 354.6l-3.6 12M244.7 361.9l-7.2 12M256.7 369.2l-2.4 12M258.1 369.2l-3.6 12M271.4 376.6l-7.2 12M271.2 376.6l-3.6 12M256.2 391.1l-7.2 12M256.4 391.1l-2.4 12M247.5 385.6l-7.2 12M245.6 385.6l-3.6 12M230.9 377.4l-7.2 12M234.6 377.4l-3.6 12M234 377.4l-3.6 12M214.3 371.1l-2.4 12M204.3 361.5l-3.2 12M208.7 361.5l-7.2 12M206.4 361.5l-3.6 12M264.6 406.5l-3.2 12M249.5 399.8l-2.4 12M251.5 399.8l-3.2 12M250.5 399.8l-3.6 12M234.3 394.2l-3.6 12M235.7 394.2l-2.4 12M238.7 394.2l-3.6 12M76 312.3l-3.6 12M78.8 312.3l-2.4 12M89.8 319.6l-7.2 12M90.6 319.6l-7.2 12M99.1 327l-3.2 12M104.2 327l-7.2 12M114 334.3l-3.2 12M109.9 334.3l-7.2 12M123.8 341.6l-7.2 12M132.8 348.9l-3.6 12M134.7 348.9l-3.6 12M140.9 356.3l-3.6 12M156.2 363.6l-3.2 12M152.1 363.6l-3.2 12M165.7 370.9l-3.6 12M165 370.9l-2.4 12M167.1 370.9l-7.2 12M176.8 378.2l-3.2 12M175.1 378.2l-7.2 12M179.1 378.2l-7.2 12M186.8 385.6l-7.2 12M198.6 392.9l-3.6 12M197.4 392.9l-2.4 12M196.1 392.9l-3.2 12M210 400.2l-2.4 12M206.1 400.2l-3.6 12M216 407.5l-2.4 12M216.1 407.5l-3.2 12M232.7 414.9l-7.2 12M230.8 414.9l-3.2 12M227 414.9l-3.6 12M242.6 422.2l-3.6 12M235.9 422.2l-3.6 12M227.2 438.1l-3.6 12M226.1 438.1l-3.2 12M215.2 430.6l-3.6 12M215.8 430.6l-7.2 12M198.5 422.2l-2.4 12M191 415.4l-3.2 12M192.6 415.4l-7.2 12M179 409.4l-2.4 12M176.2 409.4l-2.4 12M231.5 452.8l-3.6 12M231.9 452.8l-3.2 12M225.9 446.8l-3.2 12M214.8 441.6l-3.2 12M216.7 441.6l-7.2 12M81.4 380.2l-7.2 12M91.8 387.5l-2.4 12M95.6 387.5l-7.2 12M96.5 387.5l-3.6 12M104.6 394.8l-7.2 12M113 402.1l-3.2 12M114.7 402.1l-2.4 12M125.3 409.4l-7.2 12M135.8 416.7l-3.6 12M136 416.7l-7.2 12M139.1 416.7l-3.6 12M148 424l-3.2 12M143.4 424l-2.4 12M159 431.3l-2.4 12M160 431.3l-3.6 12M173.2 438.6l-7.2 12M176 445.9l-3.6 12M175 445.9l-3.6 12M187.9 453.2l-7.2 12M186.9 453.2l-2.4 12M200.2 460.5l-3.6 12M213.6 467.8l-2.4 12M209.1 467.8l-2.4 12M212.1 467.8l-7.2 12M197 484.9l-7.2 12M195.9 484.9l-3.6 12M185 476.9l-3.6 12M177 469.8l-7.2 12M176.6 469.8l-3.2 12M163.9 462.8l-2.4 12M149.8 455l-7.2 12M147.6 455l-3.6 12M211.4 498.8l-3.2 12M209 498.8l-7.2 12M205.6 498.8l-3.6 12M192.8 492.3l-3.2 12M185.5 484.2l-2.4 12M187.9 484.2l-7.2 12M76.2 440.6l-2.4 12M76.8 440.6l-3.6 12M90.2 447.9l-3.6 12M86.1 447.9l-3.2 12M95.1 455.2l-3.6 12M95.4 455.2l-2.4 12M95 455.2l-2.4 12M105.2 462.5l-3.6 12M108.8 462.5l-3.2 12M116.4 469.8l-3.6 12M123.2 469.8l-3.6 12M132.4 477l-7.2 12M132 477l-3.2 12M132.3 477l-3.6 12M136.5 484.3l-3.2 12M143.8 484.3l-3.2 12M141.4 484.3l-3.6 12M151.2 491.6l-7.2 12M158.3 498.8l-2.4 12M160.8 498.8l-3.2 12M161.9 498.8l-3.6 12M174.2 506.1l-3.6 12M181.1 513.4l-7.2 12M184.8 513.4l-2.4 12M166 528l-3.6 12M166.3 528l-3.2 12M153.4 523l-2.4 12M155.5 523l-7.2 12M152.6 523l-3.6 12M145 515.5l-3.2 12M149.8 515.5l-7.2 12M140.8 507l-7.2 12M123 498.7l-7.2 12M126.1 498.7l-3.6 12M178.6 544.4l-7.2 12M178.4 544.4l-2.4 12M166.8 537.4l-3.6 12M166.8 537.4l-2.4 12M156 532.8l-3.6 12M80.2 508.2l-7.2 12M80.6 508.2l-2.4 12M84.3 508.2l-7.2 12M93.4 515.5l-7.2 12M92.4 515.5l-3.6 12M88.6 515.5l-2.4 12M104.8 522.8l-2.4 12M99.8 522.8l-7.2 12M103.3 522.8l-3.6 12M110.1 530l-3.6 12M121.9 537.2l-3.2 12M122.7 537.2l-7.2 12M134.8 544.5l-3.6 12M142.1 551.8l-7.2 12M139.9 551.8l-2.4 12M149.1 551.8l-7.2 12M151.5 559l-3.2 12M139.8 574l-3.6 12M140.2 574l-3.2 12M139.1 574l-7.2 12M126.7 568.3l-3.6 12M131.6 568.3l-7.2 12M117.9 558.7l-7.2 12M105.3 552.5l-7.2 12M107.6 552.5l-7.2 12M97.6 545.4l-7.2 12M95.6 545.4l-2.4 12M149.6 590.8l-2.4 12M149.5 590.8l-7.2 12M139.9 582l-3.2 12M137.4 582l-2.4 12M127.2 578.6l-3.6 12M131.5 578.6l-7.2 12M74.5 568.5l-3.2 12M72 568.5l-3.6 12M81.8 575.7l-3.2 12M90.1 575.7l-7.2 12M90 575.7l-7.2 12M90.6 582.9l-2.4 12M97.9 582.9l-2.4 12M93.5 582.9l-3.6 12M110.3 590.1l-7.2 12M115.1 597.4l-3.2 12M113.9 597.4l-3.2 12M118.3 597.4l-3.6 12M127.5 604.6l-3.6 12M114.4 619.7l-3.6 12M100.8 614.4l-7.2 12M100.2 614.4l-2.4 12M101 614.4l-2.4 12M91.7 606.8l-3.6 12M86.6 606.8l-3.6 12M76.5 597.1l-2.4 12M78 597.1l-3.6 12M122.6 635.6l-2.4 12M117.9 635.6l-7.2 12M115.5 635.6l-2.4 12M113.1 628.3l-2.4 12M107.1 628.3l-3.2 12M98.3 620.9l-3.6 12M98.1 620.9l-3.6 12M76.9 635.8l-3.6 12M73.3 635.8l-3.6 12M90.3 643l-2.4 12M86.5 643l-7.2 12M87.4 643l-3.6 12M101 650.2l-3.6 12M84 666.7l-3.2 12M94.1 681.3l-3.2 12M99.8 681.3l-7.2 12M96.4 681.3l-3.6 12M80.9 675.2l-2.4 12M84.3 675.2l-3.2 12M77.8 675.2l-3.6 12"/>
<g stroke="#7df0ad" stroke-width="0.8" fill="none" opacity="0.9">
<line x1="683.3" y1="56.7" x2="691.9" y2="59.2"/>
<line x1="690.1" y1="54.2" x2="685.1" y2="61.7"/>
<line x1="683.1" y1="58.3" x2="692.1" y2="57.7"/>
<line x1="653.4" y1="101" x2="662" y2="103.5"/>
<line x1="660.2" y1="98.5" x2="655.2" y2="105.9"/>
<line x1="653.2" y1="102.5" x2="662.2" y2="101.9"/>
<line x1="623.7" y1="145.3" x2="632.4" y2="147.8"/>
<line x1="630.6" y1="142.8" x2="625.5" y2="150.3"/>
<line x1="623.6" y1="146.9" x2="632.5" y2="146.3"/>
<line x1="594.3" y1="189.8" x2="602.9" y2="192.3"/>
<line x1="601.1" y1="187.3" x2="596.1" y2="194.8"/>
<line x1="594.1" y1="191.3" x2="603.1" y2="190.7"/>
<line x1="565.1" y1="234.4" x2="573.8" y2="236.9"/>
<line x1="572" y1="231.9" x2="566.9" y2="239.3"/>
<line x1="565" y1="235.9" x2="573.9" y2="235.3"/>
<line x1="536.2" y1="279" x2="544.8" y2="281.6"/>
<line x1="543" y1="276.6" x2="538" y2="284"/>
<line x1="536" y1="280.6" x2="545" y2="280"/>
<line x1="507.5" y1="323.8" x2="516.1" y2="326.4"/>
<line x1="514.3" y1="321.4" x2="509.3" y2="328.8"/>
<line x1="507.3" y1="325.4" x2="516.3" y2="324.8"/>
<line x1="479" y1="368.8" x2="487.7" y2="371.3"/>
<line x1="485.9" y1="366.3" x2="480.8" y2="373.8"/>
<line x1="478.8" y1="370.3" x2="487.8" y2="369.7"/>
<line x1="450.8" y1="413.8" x2="459.4" y2="416.3"/>
<line x1="457.6" y1="411.3" x2="452.6" y2="418.8"/>
<line x1="450.6" y1="415.4" x2="459.6" y2="414.8"/>
<line x1="422.8" y1="458.9" x2="431.4" y2="461.5"/>
<line x1="429.6" y1="456.5" x2="424.6" y2="463.9"/>
<line x1="422.6" y1="460.5" x2="431.6" y2="459.9"/>
<line x1="395" y1="504.2" x2="403.7" y2="506.7"/>
<line x1="401.9" y1="501.7" x2="396.8" y2="509.2"/>
<line x1="394.9" y1="505.7" x2="403.8" y2="505.1"/>
<line x1="367.5" y1="549.5" x2="376.2" y2="552.1"/>
<line x1="374.4" y1="547.1" x2="369.3" y2="554.5"/>
<line x1="367.3" y1="551.1" x2="376.3" y2="550.5"/>
<line x1="340.2" y1="595" x2="348.9" y2="597.5"/>
<line x1="347.1" y1="592.6" x2="342" y2="600"/>
<line x1="340.1" y1="596.6" x2="349" y2="596"/>
<line x1="313.2" y1="640.6" x2="321.8" y2="643.1"/>
<line x1="320" y1="638.1" x2="315" y2="645.6"/>
<line x1="313" y1="642.2" x2="322" y2="641.6"/>
<line x1="286.4" y1="686.3" x2="295" y2="688.8"/>
<line x1="293.2" y1="683.8" x2="288.2" y2="691.3"/>
<line x1="286.2" y1="687.9" x2="295.2" y2="687.3"/>
<line x1="800.9" y1="91.2" x2="809.5" y2="93.7"/>
<line x1="807.7" y1="88.7" x2="802.7" y2="96.2"/>
<line x1="800.7" y1="92.7" x2="809.7" y2="92.1"/>
<line x1="771" y1="135.4" x2="779.6" y2="137.9"/>
<line x1="777.8" y1="132.9" x2="772.8" y2="140.4"/>
<line x1="770.8" y1="137" x2="779.8" y2="136.4"/>
<line x1="741.3" y1="179.8" x2="750" y2="182.3"/>
<line x1="748.2" y1="177.3" x2="743.1" y2="184.7"/>
<line x1="741.2" y1="181.3" x2="750.1" y2="180.7"/>
<line x1="711.9" y1="224.2" x2="720.5" y2="226.8"/>
<line x1="718.7" y1="221.8" x2="713.7" y2="229.2"/>
<line x1="711.7" y1="225.8" x2="720.7" y2="225.2"/>
<line x1="682.7" y1="268.8" x2="691.4" y2="271.3"/>
<line x1="689.6" y1="266.3" x2="684.5" y2="273.8"/>
<line x1="682.6" y1="270.4" x2="691.5" y2="269.8"/>
<line x1="653.8" y1="313.5" x2="662.4" y2="316"/>
<line x1="660.6" y1="311" x2="655.6" y2="318.5"/>
<line x1="653.6" y1="315.1" x2="662.6" y2="314.5"/>
<line x1="625.1" y1="358.3" x2="633.7" y2="360.8"/>
<line x1="631.9" y1="355.8" x2="626.9" y2="363.3"/>
<line x1="624.9" y1="359.9" x2="633.9" y2="359.3"/>
<line x1="596.6" y1="403.2" x2="605.3" y2="405.7"/>
<line x1="603.5" y1="400.7" x2="598.4" y2="408.2"/>
<line x1="596.4" y1="404.8" x2="605.4" y2="404.2"/>
<line x1="568.4" y1="448.2" x2="577" y2="450.8"/>
<line x1="575.2" y1="445.8" x2="570.2" y2="453.2"/>
<line x1="568.2" y1="449.8" x2="577.2" y2="449.2"/>
<line x1="540.4" y1="493.4" x2="549" y2="495.9"/>
<line x1="547.2" y1="490.9" x2="542.2" y2="498.4"/>
<line x1="540.2" y1="494.9" x2="549.2" y2="494.3"/>
<line x1="512.6" y1="538.6" x2="521.3" y2="541.2"/>
<line x1="519.5" y1="536.2" x2="514.4" y2="543.6"/>
<line x1="512.5" y1="540.2" x2="521.4" y2="539.6"/>
<line x1="485.1" y1="584" x2="493.8" y2="586.5"/>
<line x1="492" y1="581.5" x2="486.9" y2="589"/>
<line x1="484.9" y1="585.6" x2="493.9" y2="585"/>
<line x1="457.8" y1="629.5" x2="466.5" y2="632"/>
<line x1="464.7" y1="627" x2="459.6" y2="634.5"/>
<line x1="457.7" y1="631" x2="466.6" y2="630.4"/>
<line x1="430.8" y1="675.1" x2="439.4" y2="677.6"/>
<line x1="437.6" y1="672.6" x2="432.6" y2="680"/>
<line x1="430.6" y1="676.6" x2="439.6" y2="676"/>
<line x1="800.3" y1="303.3" x2="809" y2="305.8"/>
<line x1="807.2" y1="300.8" x2="802.1" y2="308.2"/>
<line x1="800.2" y1="304.8" x2="809.1" y2="304.2"/>
<line x1="771.4" y1="347.9" x2="780" y2="350.5"/>
<line x1="778.2" y1="345.5" x2="773.2" y2="352.9"/>
<line x1="771.2" y1="349.5" x2="780.2" y2="348.9"/>
<line x1="742.7" y1="392.7" x2="751.3" y2="395.3"/>
<line x1="749.5" y1="390.3" x2="744.5" y2="397.7"/>
<line x1="742.5" y1="394.3" x2="751.5" y2="393.7"/>
<line x1="714.2" y1="437.7" x2="722.9" y2="440.2"/>
<line x1="721.1" y1="435.2" x2="716" y2="442.7"/>
<line x1="714" y1="439.2" x2="723" y2="438.6"/>
<line x1="686" y1="482.7" x2="694.6" y2="485.2"/>
<line x1="692.8" y1="480.2" x2="687.8" y2="487.7"/>
<line x1="685.8" y1="484.3" x2="694.8" y2="483.7"/>
<line x1="658" y1="527.8" x2="666.6" y2="530.4"/>
<line x1="664.8" y1="525.4" x2="659.8" y2="532.8"/>
<line x1="657.8" y1="529.4" x2="666.8" y2="528.8"/>
<line x1="630.2" y1="573.1" x2="638.9" y2="575.6"/>
<line x1="637.1" y1="570.6" x2="632" y2="578.1"/>
<line x1="630.1" y1="574.6" x2="639" y2="574"/>
<line x1="602.7" y1="618.4" x2="611.4" y2="621"/>
<line x1="609.6" y1="616" x2="604.5" y2="623.4"/>
<line x1="602.5" y1="620" x2="611.5" y2="619.4"/>
<line x1="575.4" y1="663.9" x2="584.1" y2="666.4"/>
<line x1="582.3" y1="661.5" x2="577.2" y2="668.9"/>
<line x1="575.3" y1="665.5" x2="584.2" y2="664.9"/>
<line x1="803.6" y1="517.1" x2="812.2" y2="519.7"/>
<line x1="810.4" y1="514.7" x2="805.4" y2="522.1"/>
<line x1="803.4" y1="518.7" x2="812.4" y2="518.1"/>
<line x1="775.6" y1="562.3" x2="784.2" y2="564.8"/>
<line x1="782.4" y1="559.8" x2="777.4" y2="567.3"/>
<line x1="775.4" y1="563.8" x2="784.4" y2="563.2"/>
<line x1="747.8" y1="607.5" x2="756.5" y2="610.1"/>
<line x1="754.7" y1="605.1" x2="749.6" y2="612.5"/>
<line x1="747.7" y1="609.1" x2="756.6" y2="608.5"/>
<line x1="720.3" y1="652.9" x2="729" y2="655.4"/>
<line x1="727.2" y1="650.4" x2="722.1" y2="657.9"/>
<line x1="720.1" y1="654.5" x2="729.1" y2="653.9"/>
</g>
<g stroke="#fff" stroke-width="1" fill="none"><path d="M573.5 655H747.5M573.5 651.5V658.5M747.5 651.5V658.5"/></g>
<text x="661.5" y="674.5" fill="#fff" font-family="Liberation Sans, sans-serif" font-size="12.5" text-anchor="middle">0.55</text>
<path d="M783.2 654.8L788.3 632.3" stroke="#2aa2ec" stroke-width="2.2" stroke-linecap="round"/>
<path d="M783.6 654.6L807.2 660.6" stroke="#e8101c" stroke-width="2.2" stroke-linecap="round"/>
<path d="M437.5 370.5H457.5M447.5 360V381" stroke="#dff" stroke-width="1" opacity="0.85"/>
<rect x="76" y="54" width="742" height="1" fill="#1d5f86" opacity="0.85"/>
</svg>
<div class="dtitle" style="left:822px;width:95px;height:19px"></div>
<div class="t" id="t_props" style="left:822.8px;top:59.4px;transform:scaleX(0.9049);transform-origin:0 0;">Properties</div>
<div class="box" style="left:831px;top:86px;width:90px;height:590px"></div>
<div class="abs" style="left:832px;top:144px;width:78px;height:17px;background:#f6f6f6"></div>
<div class="abs" style="left:832px;top:178px;width:78px;height:17px;background:#f6f6f6"></div>
<div class="abs" style="left:832px;top:212px;width:78px;height:17px;background:#f6f6f6"></div>
<div class="abs" style="left:832px;top:254px;width:78px;height:43px;background:#f6f6f6"></div>
<div class="abs" style="left:832px;top:361px;width:78px;height:17px;background:#f6f6f6"></div>
<div class="abs" style="left:832px;top:395px;width:78px;height:17px;background:#f6f6f6"></div>
<div class="abs" style="left:832px;top:110px;width:78px;height:17px;background:#7f7f7f"></div>
<div class="abs" style="left:832px;top:344px;width:78px;height:17px;background:#7f7f7f"></div>
<div class="t" id="t_r0" style="left:835.5px;top:91.8px;transform:scaleX(0.9987);transform-origin:0 0;color:#000;">Property</div>
<div class="t" id="t_r1" style="left:835.5px;top:112px;transform:scaleX(0.9736);transform-origin:0 0;color:#fff;">CC Object</div>
<div class="t" id="t_r2" style="left:835.5px;top:128.7px;transform:scaleX(0.9839);transform-origin:0 0;color:#000;">Name</div>
<div class="t" id="t_r3" style="left:835.5px;top:145.7px;transform:scaleX(0.9611);transform-origin:0 0;color:#000;">Unique ID</div>
<div class="t" id="t_r4" style="left:835.5px;top:163px;transform:scaleX(0.9910);transform-origin:0 0;color:#000;">Children</div>
<div class="t" id="t_r5" style="left:835.5px;top:180.2px;transform:scaleX(0.9647);transform-origin:0 0;color:#000;">Visible</div>
<div class="t" id="t_r6" style="left:835.5px;top:197.3px;transform:scaleX(1.0006);transform-origin:0 0;color:#000;">Normals</div>
<div class="t" id="t_r7" style="left:835.5px;top:214.3px;transform:scaleX(0.9500);transform-origin:0 0;color:#000;">Show name (in 3D)</div>
<div class="t" id="t_r8" style="left:835.5px;top:233.1px;transform:scaleX(0.9500);transform-origin:0 0;color:#000;">Current Display</div>
<div class="t" id="t_r9" style="left:835.5px;top:266.5px;transform:scaleX(0.9500);transform-origin:0 0;color:#000;">Box dimensions</div>
<div class="t" id="t_r10" style="left:835.5px;top:314px;transform:scaleX(0.9499);transform-origin:0 0;color:#000;">Box center</div>
<div class="t" id="t_r11" style="left:835.5px;top:346.3px;transform:scaleX(0.9854);transform-origin:0 0;color:#fff;">Cloud</div>
<div class="t" id="t_r12" style="left:835.5px;top:362.9px;transform:scaleX(0.9443);transform-origin:0 0;color:#000;">Points</div>
<div class="t" id="t_r13" style="left:835.5px;top:379.9px;transform:scaleX(0.9928);transform-origin:0 0;color:#000;">Global shift</div>
<div class="t" id="t_r14" style="left:835.5px;top:396.9px;transform:scaleX(0.9524);transform-origin:0 0;color:#000;">Global scale</div>
<div class="t" id="t_r15" style="left:835.5px;top:415px;transform:scaleX(0.9321);transform-origin:0 0;color:#000;">Point size</div>
</body></html>
